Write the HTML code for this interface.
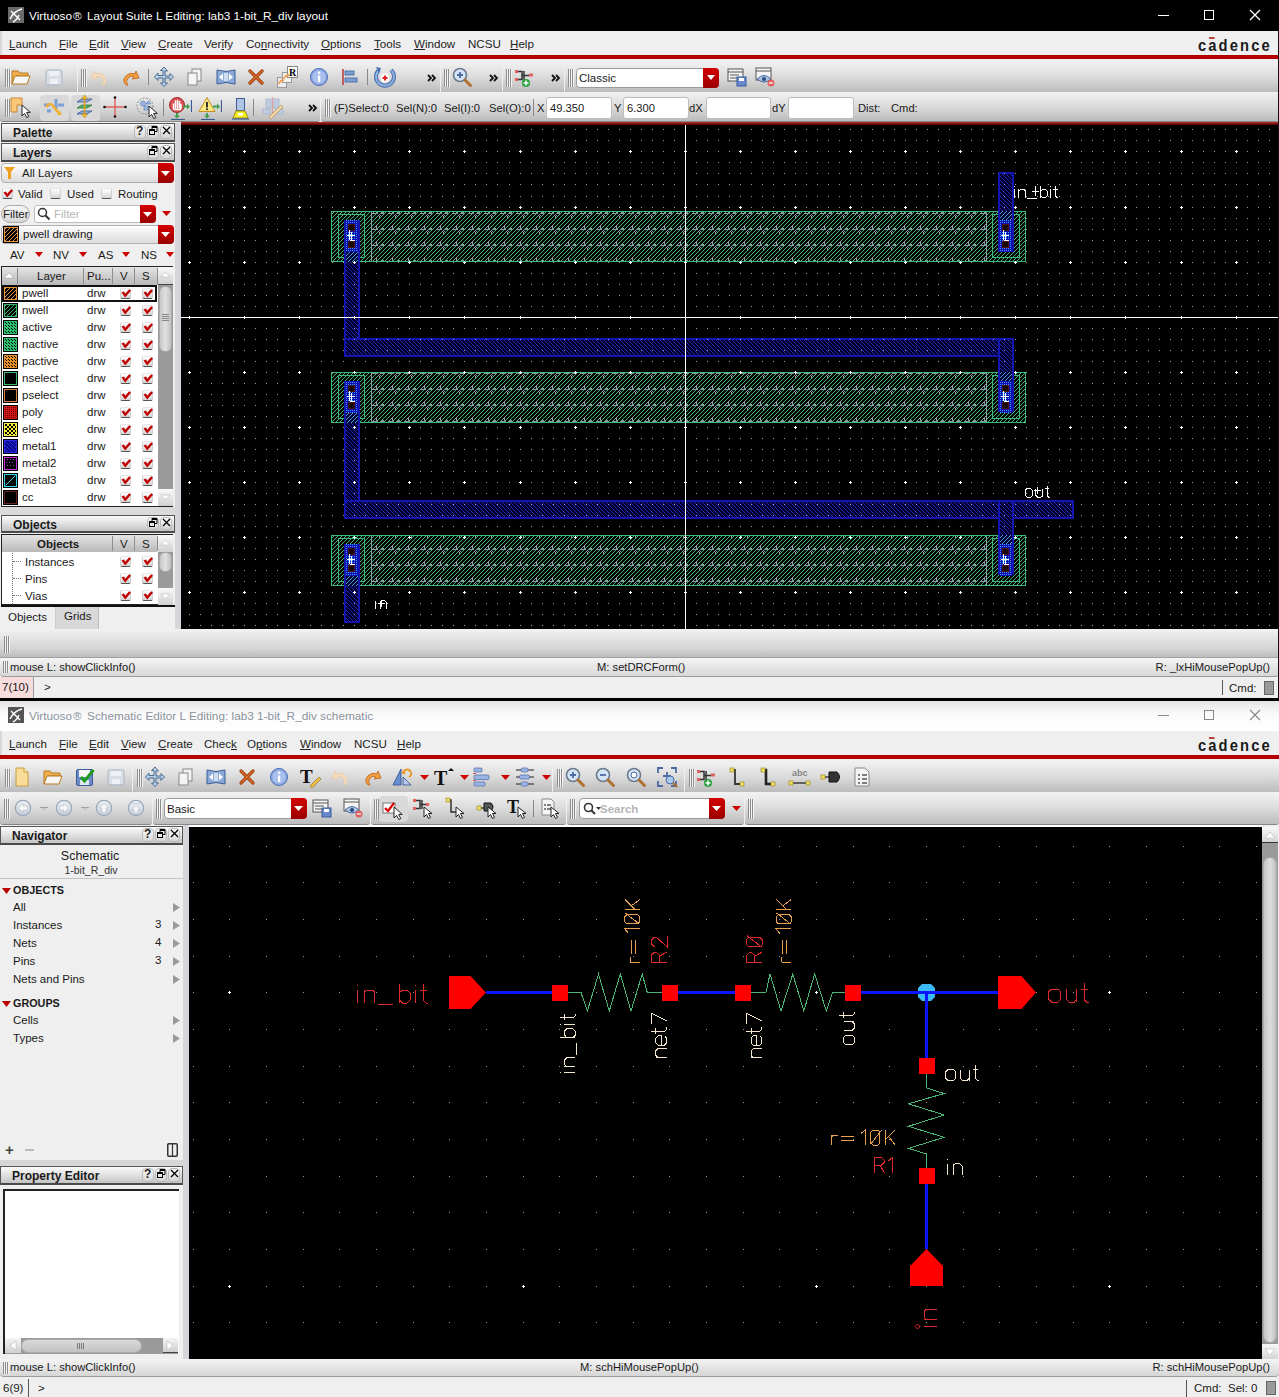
<!DOCTYPE html><html><head><meta charset="utf-8"><style>
*{margin:0;padding:0;box-sizing:border-box}
html,body{width:1279px;height:1397px;overflow:hidden;background:#f0f0f0}
body{position:relative;font-family:"Liberation Sans",sans-serif;font-size:12px;color:#1a1a1a}
.a{position:absolute}
.t{white-space:nowrap;line-height:14px}
.tb{background:linear-gradient(#f0f0f0,#dadada 50%,#bcbcbc);border-radius:4px 4px 3px 3px;border-bottom:1px solid #858585}
.grip{background:linear-gradient(90deg,#8c8c8c 0,#8c8c8c 1px,#f4f4f4 1px,#f4f4f4 2px,#8c8c8c 2px,#8c8c8c 3px,#f4f4f4 3px,#f4f4f4 4px,#8c8c8c 4px,#8c8c8c 5px,#f4f4f4 5px,#f4f4f4 6px)}
.hdr{background:linear-gradient(#fbfbfb,#dedede 55%,#c4c4c4);border:1px solid #555;border-bottom:2px solid #4a4a4a;font-weight:bold;font-size:12px}
.hb{background:linear-gradient(#fafafa,#d6d6d6);border:1px solid #b9b9b9;border-radius:4px}
.red{background:linear-gradient(#d40000,#9a0000);border-radius:0 4px 4px 0}
.u{text-decoration:underline;text-underline-offset:1px}
.fld{background:#fff;border:1px solid #bdbdbd;border-radius:3px}
.cb{background:linear-gradient(#fefefe,#e6e6e6 60%,#d4d4d4);border:1px solid #d0d0d0;border-top-color:#e8e8e8;border-bottom:1px solid #555;border-radius:2px}
</style></head><body><div class="a " style="left:0px;top:0px;width:1279px;height:31px;background:#000"></div>
<svg class="a" style="left:8px;top:7px;" width="16" height="16" viewBox="0 0 16 16"><rect width="16" height="16" fill="#6b6b6b"/><path d="M2 12q4-8 12-10M3 4l9 9M5 15q4-2 6-7" stroke="#fff" stroke-width="1.4" fill="none"/></svg>
<div class="a t " style="left:29px;top:9px;color:#fff;font-size:11.8px;line-height:15px">Virtuoso<span style="margin:0 2px 0 1px">®</span> Layout Suite L Editing: lab3 1-bit_R_div layout</div>
<div class="a " style="left:1158px;top:15px;width:11px;height:1px;background:#fff"></div>
<div class="a " style="left:1204px;top:10px;width:10px;height:10px;border:1px solid #fff"></div>
<svg class="a" style="left:1249px;top:9px;" width="12" height="12" viewBox="0 0 12 12"><path d="M1 1l10 10M11 1L1 11" stroke="#fff" stroke-width="1.3"/></svg>
<div class="a " style="left:0px;top:31px;width:1279px;height:24px;background:#efefef"></div>
<div class="a " style="left:0px;top:31px;width:2px;height:24px;background:#d8d8d8"></div>
<div class="a t " style="left:9px;top:37px;font-size:11.6px;color:#222"><span class="u">L</span>aunch</div>
<div class="a t " style="left:59px;top:37px;font-size:11.6px;color:#222"><span class="u">F</span>ile</div>
<div class="a t " style="left:89px;top:37px;font-size:11.6px;color:#222"><span class="u">E</span>dit</div>
<div class="a t " style="left:121px;top:37px;font-size:11.6px;color:#222"><span class="u">V</span>iew</div>
<div class="a t " style="left:158px;top:37px;font-size:11.6px;color:#222"><span class="u">C</span>reate</div>
<div class="a t " style="left:204px;top:37px;font-size:11.6px;color:#222">Ver<span class="u">i</span>fy</div>
<div class="a t " style="left:246px;top:37px;font-size:11.6px;color:#222">Co<span class="u">n</span>nectivity</div>
<div class="a t " style="left:321px;top:37px;font-size:11.6px;color:#222"><span class="u">O</span>ptions</div>
<div class="a t " style="left:374px;top:37px;font-size:11.6px;color:#222"><span class="u">T</span>ools</div>
<div class="a t " style="left:414px;top:37px;font-size:11.6px;color:#222"><span class="u">W</span>indow</div>
<div class="a t " style="left:468px;top:37px;font-size:11.6px;color:#222">NCSU</div>
<div class="a t " style="left:510px;top:37px;font-size:11.6px;color:#222"><span class="u">H</span>elp</div>
<div class="a t " style="left:1198px;top:37px;font-size:16px;letter-spacing:2.3px;color:#1a1a1a;line-height:17px;font-weight:bold;transform:scaleX(0.92);transform-origin:0 0">c<span style="position:relative">a<span style="position:absolute;left:1px;top:0px;width:6px;height:2px;background:#b44"></span></span>dence</div>
<div class="a " style="left:0px;top:55px;width:1279px;height:4px;background:linear-gradient(#9a0000,#bb0000 25%,#bb0000 75%,#9a0000)"></div>
<div class="a " style="left:0px;top:59px;width:1279px;height:3px;background:#f0f0f0"></div>
<div class="a " style="left:0px;top:62px;width:1279px;height:31px;background:#f0f0f0"></div>
<div class="a tb" style="left:0px;top:63px;width:77px;height:30px;"></div>
<div class="a grip" style="left:5px;top:69px;width:6px;height:18px;"></div>
<svg class="a" style="left:9px;top:65px;" width="24" height="24" viewBox="0 0 24 24"><path d="M3 6h6l2 2h8v3H7l-4 8z" fill="#f0b050" stroke="#b87a20" stroke-width="1"/><path d="M6 11h15l-3 8H3z" fill="#f6f6f6" stroke="#b87a20" stroke-width="1"/></svg>
<svg class="a" style="left:42px;top:65px;" width="24" height="24" viewBox="0 0 24 24"><rect x="4" y="5" width="16" height="15" rx="1.5" fill="#d8dde6" stroke="#a9b3c4"/><rect x="7" y="6" width="10" height="5" fill="#eef1f5"/><rect x="8" y="14" width="8" height="5" fill="#eef1f5"/></svg>
<div class="a tb" style="left:78px;top:63px;width:362px;height:30px;"></div>
<div class="a grip" style="left:81px;top:69px;width:6px;height:18px;"></div>
<svg class="a" style="left:88px;top:65px;" width="24" height="24" viewBox="0 0 24 24"><path d="M16 20q5-5-1-10q-4-3-8-1l-1-3-3 7 7 1-2-2q3-2 6 1q3 4 0 7z" fill="#f4dcc0" stroke="#e8c8a0" stroke-width=".8"/></svg>
<svg class="a" style="left:118px;top:65px;" width="24" height="24" viewBox="0 0 24 24"><path d="M8 20q-5-5 1-10q4-3 8-1l1-3 3 7-7 1 2-2q-3-2-6 1q-3 4 0 7z" fill="#f0a040" stroke="#c06010" stroke-width=".8"/></svg>
<div class="a " style="left:148px;top:69px;width:1px;height:16px;background:#888"></div>
<svg class="a" style="left:152px;top:65px;" width="24" height="24" viewBox="0 0 24 24"><path d="M12 2l-3.5 3.5h2.5v5h-5v-2.5L2.5 12 6 15.5V13h5v5H8.5L12 21.5l3.5-3.5H13v-5h5v2.5l3.5-3.5L18 8.5V11h-5V6h2.5z" fill="#b8d0e8" stroke="#4a6a90" stroke-width="1"/></svg>
<svg class="a" style="left:183px;top:65px;" width="24" height="24" viewBox="0 0 24 24"><rect x="9" y="4" width="9" height="12" fill="#f4f4f4" stroke="#888"/><rect x="5" y="8" width="9" height="12" fill="#f4f4f4" stroke="#888"/></svg>
<svg class="a" style="left:214px;top:65px;" width="24" height="24" viewBox="0 0 24 24"><path d="M3 5q9 3 18 0v14q-9-3-18 0z" fill="#8aaad8" stroke="#3a5a98"/><path d="M5 12l4-3.5v7zM19 12l-4-3.5v7z" fill="#fff"/><path d="M11 8v8M13 8v8" stroke="#fff" stroke-width="1.2"/></svg>
<svg class="a" style="left:244px;top:65px;" width="24" height="24" viewBox="0 0 24 24"><path d="M6 6l12 12M18 6L6 18" stroke="#a0400a" stroke-width="3.2" stroke-linecap="round"/><path d="M6 6l12 12M18 6L6 18" stroke="#e07030" stroke-width="1.2" stroke-linecap="round"/></svg>
<svg class="a" style="left:276px;top:65px;" width="24" height="24" viewBox="0 0 24 24"><rect x="1.5" y="12.5" width="9" height="10" fill="#ececec" stroke="#999"/><rect x="6.5" y="7.5" width="9" height="10" fill="#f2f2f2" stroke="#999"/><rect x="11.5" y="1.5" width="10" height="11" fill="#fafafa" stroke="#888"/><text x="13" y="11" font-family="Liberation Serif" font-weight="bold" font-size="10" fill="#000">R</text><path d="M3 19q1-4 5-4M8 14q1-4 5-4" fill="none" stroke="#f0a050" stroke-width="1.8"/></svg>
<svg class="a" style="left:307px;top:65px;" width="24" height="24" viewBox="0 0 24 24"><circle cx="12" cy="12" r="8.5" fill="#8fa9e0" stroke="#4b6fb8"/><circle cx="12" cy="12" r="6.5" fill="#a9c0ee"/><rect x="11" y="10.5" width="2.2" height="6.5" fill="#fff"/><circle cx="12.1" cy="7.8" r="1.3" fill="#fff"/></svg>
<svg class="a" style="left:338px;top:65px;" width="24" height="24" viewBox="0 0 24 24"><path d="M5 4v16" stroke="#c04040" stroke-width="1.6"/><rect x="7" y="6" width="9" height="4" fill="#7d9fd0" stroke="#3b63a0" stroke-width=".8"/><rect x="7" y="13" width="12" height="4" fill="#7d9fd0" stroke="#3b63a0" stroke-width=".8"/></svg>
<div class="a " style="left:367px;top:69px;width:1px;height:16px;background:#888"></div>
<svg class="a" style="left:373px;top:65px;" width="24" height="24" viewBox="0 0 24 24"><path d="M6 5a9 9 0 1 0 12 0" fill="none" stroke="#4a70b0" stroke-width="4"/><path d="M6 5a9 9 0 1 0 12 0" fill="none" stroke="#90b0e0" stroke-width="2"/><path d="M3 2l5 1-2 5z" fill="#4a70b0"/><circle cx="12" cy="13" r="4.5" fill="#fff"/><path d="M12 10.5v5M9.5 13h5" stroke="#e02020" stroke-width="2"/></svg>
<svg class="a" style="left:421px;top:66px;" width="24" height="24" viewBox="0 0 24 24"><path d="M7 9l3 3-3 3M11 9l3 3-3 3" fill="none" stroke="#111" stroke-width="1.8"/></svg>
<div class="a tb" style="left:441px;top:63px;width:61px;height:30px;"></div>
<div class="a grip" style="left:444px;top:69px;width:6px;height:18px;"></div>
<svg class="a" style="left:450px;top:65px;" width="24" height="24" viewBox="0 0 24 24"><circle cx="10" cy="10" r="6.5" fill="#d4e4f6" stroke="#6a7a8a" stroke-width="1.6"/><path d="M10 7v6M7 10h6" stroke="#4c6aa0" stroke-width="1.8"/><path d="M15 15l5.5 5.5" stroke="#b07030" stroke-width="3" stroke-linecap="round"/></svg>
<svg class="a" style="left:483px;top:66px;" width="24" height="24" viewBox="0 0 24 24"><path d="M7 9l3 3-3 3M11 9l3 3-3 3" fill="none" stroke="#111" stroke-width="1.8"/></svg>
<div class="a tb" style="left:503px;top:63px;width:61px;height:30px;"></div>
<div class="a grip" style="left:506px;top:69px;width:6px;height:18px;"></div>
<svg class="a" style="left:512px;top:65px;" width="24" height="24" viewBox="0 0 24 24"><rect x="3" y="5" width="3" height="3" fill="#e06060"/><rect x="3" y="13" width="3" height="3" fill="#e06060"/><rect x="17" y="8.5" width="4" height="3" fill="#e06060"/><path d="M6 6.5h4v8H6M10 10.5h7M12 6v9" fill="none" stroke="#333" stroke-width="1.5"/><circle cx="14" cy="18" r="4" fill="#2aa040"/><path d="M14 15.5v5M11.5 18h5" stroke="#fff" stroke-width="1.6"/></svg>
<svg class="a" style="left:545px;top:66px;" width="24" height="24" viewBox="0 0 24 24"><path d="M7 9l3 3-3 3M11 9l3 3-3 3" fill="none" stroke="#111" stroke-width="1.8"/></svg>
<div class="a tb" style="left:565px;top:63px;width:714px;height:30px;"></div>
<div class="a grip" style="left:568px;top:69px;width:6px;height:18px;"></div>
<div class="a " style="left:576px;top:68px;width:143px;height:20px;background:#fff;border:1px solid #9a9a9a;border-radius:4px"></div>
<div class="a t " style="left:579px;top:71px;font-size:11.5px">Classic</div>
<div class="a red" style="left:703px;top:68px;width:16px;height:20px;"></div>
<svg class="a" style="left:706px;top:75px;" width="10" height="6" viewBox="0 0 10 6"><path d="M1 0h8L5 5z" fill="#fff"/></svg>
<svg class="a" style="left:725px;top:65px;" width="24" height="24" viewBox="0 0 24 24"><rect x="3" y="4" width="15" height="12" fill="#f4f4f4" stroke="#555"/><path d="M3 7h15M5 10h9M5 13h7" stroke="#555"/><rect x="12" y="12" width="9" height="9" fill="#6a8ad0" stroke="#3a5aa0"/><rect x="14" y="13" width="5" height="3" fill="#fff"/></svg>
<svg class="a" style="left:753px;top:65px;" width="24" height="24" viewBox="0 0 24 24"><rect x="3" y="3" width="15" height="12" fill="#f4f4f4" stroke="#555"/><path d="M3 6h15" stroke="#555"/><path d="M4 14q7-7 14 0q-7 6-14 0z" fill="#aac0e0" stroke="#4a6aa0"/><circle cx="11" cy="14" r="2" fill="#2a4a80"/><circle cx="18" cy="18" r="3.5" fill="#e06060"/><path d="M16 18h4" stroke="#fff" stroke-width="1.2"/></svg>
<div class="a " style="left:0px;top:92px;width:1279px;height:31px;background:#f0f0f0"></div>
<div class="a tb" style="left:0px;top:93px;width:320px;height:29px;"></div>
<div class="a grip" style="left:5px;top:99px;width:6px;height:18px;"></div>
<svg class="a" style="left:9px;top:95px;" width="24" height="24" viewBox="0 0 24 24"><path d="M2 3h11v7H8v7H2z" fill="#f8c878" stroke="#c88830"/><path d="M13 10l0 11 2.6-2.6 2.2 4.2 2-1-2.2-4.2h3.7z" fill="#fff" stroke="#222" stroke-width="1"/></svg>
<div class="a " style="left:40px;top:95px;width:29px;height:26px;background:#d9d9d9;border-radius:4px"></div>
<div class="a " style="left:71px;top:95px;width:29px;height:26px;background:#d9d9d9;border-radius:4px"></div>
<svg class="a" style="left:42px;top:95px;" width="24" height="24" viewBox="0 0 24 24"><path d="M2 10h6M16 10h6M5 16h4M14 4v10" stroke="#7aa0d8" stroke-width="3"/><path d="M4 12q4-6 8 0t6 6" fill="none" stroke="#f0b030" stroke-width="2.6"/><path d="M15 20l3-4 2 4z" fill="#f0b030"/></svg>
<svg class="a" style="left:73px;top:95px;" width="24" height="24" viewBox="0 0 24 24"><path d="M4 7l5-3h10l-5 3z" fill="#8aaad8" stroke="#3a5a98" stroke-width=".8"/><path d="M4 13l5-3h10l-5 3z" fill="#50b060" stroke="#2a7a3a" stroke-width=".8"/><path d="M4 19l5-3h10l-5 3z" fill="#8aaad8" stroke="#3a5a98" stroke-width=".8"/><path d="M11.5 3v18" stroke="#e0a020" stroke-width="1.6"/><path d="M11.5 0l-3 4h6zM11.5 23l-3-4h6z" fill="#f8c030" stroke="#a07010" stroke-width=".5"/></svg>
<svg class="a" style="left:103px;top:95px;" width="24" height="24" viewBox="0 0 24 24"><path d="M12 2v20M1 12h22" stroke="#e06060" stroke-width="1.4"/><circle cx="12" cy="2.5" r="1.3" fill="#111"/><circle cx="12" cy="21.5" r="1.3" fill="#111"/><circle cx="1.5" cy="12" r="1.3" fill="#111"/><circle cx="22.5" cy="12" r="1.3" fill="#111"/></svg>
<svg class="a" style="left:135px;top:95px;" width="24" height="24" viewBox="0 0 24 24"><circle cx="10" cy="11" r="8" fill="none" stroke="#888" stroke-dasharray="2 1.5"/><circle cx="8" cy="8.5" r="2.5" fill="#9ab6e0" stroke="#5a7ab0" stroke-width=".6"/><path d="M11 9l2.5-3.5 2.5 3.5z" fill="#9ab6e0" stroke="#5a7ab0" stroke-width=".6"/><rect x="9" y="11" width="4" height="4" fill="#9ab6e0" stroke="#5a7ab0" stroke-width=".6"/><path d="M14 11l0 11 2.6-2.6 2.2 4.2 2-1-2.2-4.2h3.7z" fill="#fff" stroke="#222" stroke-width="1"/></svg>
<div class="a " style="left:163px;top:99px;width:1px;height:17px;background:#888"></div>
<svg class="a" style="left:168px;top:96px;" width="24" height="24" viewBox="0 0 24 24"><circle cx="9" cy="9" r="7.5" fill="#d85050" stroke="#a02828" stroke-width="1"/><path d="M5.5 13V8M7.5 12V5M9.5 12V4.5M11.5 12V5.5M13 12.5V8.5" stroke="#fff" stroke-width="1.5" stroke-linecap="round"/><path d="M6 13.5h7" stroke="#fff" stroke-width="1.6"/><path d="M15 9.5h4v-2l3 3-3 3v-2h-4z" fill="#40a050"/><path d="M23.5 4v12" stroke="#3a5a90" stroke-width="1.2"/><path d="M8 17v2.5h-2l3 3 3-3h-2V17z" fill="#40a050"/><path d="M3 23.5h14" stroke="#3a5a90" stroke-width="1.2"/></svg>
<svg class="a" style="left:198px;top:96px;" width="24" height="24" viewBox="0 0 24 24"><path d="M9 1.5l8 14H1z" fill="#f8e880" stroke="#c89020" stroke-width="1"/><path d="M9 6v5.5" stroke="#222" stroke-width="1.8"/><circle cx="9" cy="13.3" r="1" fill="#222"/><path d="M15 9.5h4v-2l3 3-3 3v-2h-4z" fill="#40a050"/><path d="M23.5 4v12" stroke="#3a5a90" stroke-width="1.2"/><path d="M8 17v2.5h-2l3 3 3-3h-2V17z" fill="#40a050"/><path d="M3 23.5h14" stroke="#3a5a90" stroke-width="1.2"/></svg>
<svg class="a" style="left:229px;top:96px;" width="24" height="24" viewBox="0 0 24 24"><rect x="7.5" y="2.5" width="8" height="12" fill="#b0c4e4" stroke="#3a5a90"/><path d="M4 22l3-7h9l3 7z" fill="#f4f020" stroke="#a09010"/><rect x="9" y="17" width="5" height="2.5" fill="#fff"/><path d="M3 23h17" stroke="#3a5a90" stroke-width="1.2"/></svg>
<div class="a " style="left:253px;top:99px;width:1px;height:17px;background:#888"></div>
<svg class="a" style="left:261px;top:95px;" width="24" height="24" viewBox="0 0 24 24"><rect x="5" y="4" width="5" height="9" fill="#c0cce0" stroke="#a0aec8" stroke-width=".7"/><rect x="13" y="4" width="5" height="9" fill="#c0cce0" stroke="#a0aec8" stroke-width=".7"/><rect x="2" y="14" width="7" height="5" fill="#c0cce0" stroke="#a0aec8" stroke-width=".7"/><rect x="15" y="14" width="7" height="5" fill="#c0cce0" stroke="#a0aec8" stroke-width=".7"/><path d="M11.5 2v18" stroke="#d8a0a0" stroke-width="1.2"/><path d="M8 22l12-12 2 2-12 12z" fill="#f0d8a0" stroke="#b09060" stroke-width=".7"/></svg>
<svg class="a" style="left:302px;top:96px;" width="24" height="24" viewBox="0 0 24 24"><path d="M7 9l3 3-3 3M11 9l3 3-3 3" fill="none" stroke="#111" stroke-width="1.8"/></svg>
<div class="a tb" style="left:321px;top:93px;width:958px;height:29px;"></div>
<div class="a grip" style="left:325px;top:99px;width:6px;height:18px;"></div>
<div class="a t " style="left:334px;top:101px;font-size:11.2px">(F)Select:0</div>
<div class="a t " style="left:396px;top:101px;font-size:11.2px">Sel(N):0</div>
<div class="a t " style="left:444px;top:101px;font-size:11.2px">Sel(I):0</div>
<div class="a t " style="left:489px;top:101px;font-size:11.2px">Sel(O):0</div>
<div class="a " style="left:533px;top:99px;width:1px;height:17px;background:#888"></div>
<div class="a t " style="left:537px;top:101px;font-size:11.2px">X</div>
<div class="a fld" style="left:546px;top:97px;width:66px;height:22px;"></div>
<div class="a t " style="left:550px;top:101px;font-size:11.2px">49.350</div>
<div class="a t " style="left:614px;top:101px;font-size:11.2px">Y</div>
<div class="a fld" style="left:623px;top:97px;width:66px;height:22px;"></div>
<div class="a t " style="left:627px;top:101px;font-size:11.2px">6.300</div>
<div class="a t " style="left:689px;top:101px;font-size:11.2px">dX</div>
<div class="a fld" style="left:706px;top:97px;width:65px;height:22px;"></div>
<div class="a t " style="left:772px;top:101px;font-size:11.2px">dY</div>
<div class="a fld" style="left:788px;top:97px;width:66px;height:22px;"></div>
<div class="a t " style="left:858px;top:101px;font-size:11.2px">Dist:</div>
<div class="a t " style="left:891px;top:101px;font-size:11.2px">Cmd:</div>
<div class="a " style="left:0px;top:122px;width:1279px;height:4px;background:#efefef"></div>
<div class="a " style="left:181px;top:122px;width:1098px;height:3px;background:linear-gradient(#c04040,#8a1414 40%,#5a0a0a)"></div>
<div class="a " style="left:0px;top:123px;width:175px;height:506px;background:#efefef"></div>
<div class="a " style="left:175px;top:123px;width:6px;height:506px;background:#d6d6da"></div>
<div class="a hdr" style="left:1px;top:123px;width:174px;height:19px;"></div>
<div class="a t " style="left:13px;top:126px;font-weight:bold;font-size:12px;line-height:14px">Palette</div>
<div class="a hb" style="left:160px;top:125px;width:12px;height:14px;"></div>
<svg class="a" style="left:162px;top:126px;" width="9" height="9" viewBox="0 0 9 9"><path d="M1 1l7 7M8 1L1 8" stroke="#000" stroke-width="1.3"/></svg>
<div class="a hb" style="left:147px;top:125px;width:12px;height:14px;"></div>
<svg class="a" style="left:149px;top:126px;" width="9" height="9" viewBox="0 0 9 9"><rect x="0.5" y="3.5" width="5" height="5" fill="none" stroke="#000"/><path d="M3 3.5V0.5h5v5H5.5" fill="none" stroke="#000"/><path d="M0.5 4.5h5M3 1.5h5" stroke="#000"/></svg>
<div class="a hb" style="left:134px;top:125px;width:12px;height:14px;"></div>
<div class="a t " style="left:136px;top:124px;font-weight:bold;font-size:12px;line-height:14px">?</div>
<div class="a hdr" style="left:1px;top:143px;width:174px;height:19px;"></div>
<div class="a t " style="left:13px;top:146px;font-weight:bold;font-size:12px;line-height:14px">Layers</div>
<div class="a hb" style="left:160px;top:145px;width:12px;height:14px;"></div>
<svg class="a" style="left:162px;top:146px;" width="9" height="9" viewBox="0 0 9 9"><path d="M1 1l7 7M8 1L1 8" stroke="#000" stroke-width="1.3"/></svg>
<div class="a hb" style="left:147px;top:145px;width:12px;height:14px;"></div>
<svg class="a" style="left:149px;top:146px;" width="9" height="9" viewBox="0 0 9 9"><rect x="0.5" y="3.5" width="5" height="5" fill="none" stroke="#000"/><path d="M3 3.5V0.5h5v5H5.5" fill="none" stroke="#000"/><path d="M0.5 4.5h5M3 1.5h5" stroke="#000"/></svg>
<div class="a " style="left:1px;top:163px;width:173px;height:20px;background:linear-gradient(#fdfdfd,#dcdcdc);border:1px solid #b0b0b0;border-radius:4px"></div>
<svg class="a" style="left:4px;top:166px;" width="12" height="14" viewBox="0 0 12 14"><path d="M0 1h11L7 6v7H4V6z" fill="#f0a020"/></svg>
<div class="a t " style="left:22px;top:166px;font-size:11.5px">All Layers</div>
<div class="a red" style="left:158px;top:163px;width:16px;height:20px;"></div>
<svg class="a" style="left:161px;top:171px;" width="9" height="5" viewBox="0 0 9 5"><path d="M0 0h9L4.5 5z" fill="#fff"/></svg>
<div class="a cb" style="left:2px;top:188px;width:11px;height:11px;"></div>
<svg class="a" style="left:2px;top:188px;" width="11" height="11" viewBox="0 0 11 11"><path d="M1.5 4.5L4 3.5L5.2 5.8L9.2 1.2L11 2.8L5.2 9.5Z" fill="#c00000"/></svg>
<div class="a t " style="left:18px;top:187px;font-size:11.5px">Valid</div>
<div class="a cb" style="left:50px;top:188px;width:11px;height:11px;"></div>
<div class="a t " style="left:67px;top:187px;font-size:11.5px">Used</div>
<div class="a cb" style="left:101px;top:188px;width:11px;height:11px;"></div>
<div class="a t " style="left:118px;top:187px;font-size:11.5px">Routing</div>
<div class="a " style="left:1px;top:205px;width:29px;height:18px;background:linear-gradient(#f8f8f8,#d6d6d6);border:1px solid #aaa;border-radius:9px"></div>
<div class="a t " style="left:3px;top:207px;font-size:11.5px">Filter</div>
<div class="a fld" style="left:34px;top:205px;width:122px;height:18px;"></div>
<svg class="a" style="left:37px;top:207px;" width="14" height="14" viewBox="0 0 14 14"><circle cx="5.5" cy="5.5" r="4" fill="none" stroke="#333" stroke-width="1.5"/><path d="M8.5 8.5l4 4" stroke="#333" stroke-width="2"/></svg>
<div class="a t " style="left:54px;top:207px;font-size:11.5px;color:#b5b5b5">Filter</div>
<div class="a red" style="left:140px;top:205px;width:16px;height:18px;"></div>
<svg class="a" style="left:143px;top:212px;" width="9" height="5" viewBox="0 0 9 5"><path d="M0 0h9L4.5 5z" fill="#fff"/></svg>
<svg class="a" style="left:162px;top:211px;" width="9" height="5" viewBox="0 0 9 5"><path d="M0 0h9L4.5 5z" fill="#c00"/></svg>
<div class="a " style="left:1px;top:225px;width:173px;height:19px;background:linear-gradient(#fdfdfd,#dcdcdc);border:1px solid #b0b0b0;border-radius:4px"></div>
<svg class="a" style="left:3px;top:226px" width="16" height="17"><rect width="16" height="17" fill="#000"/><path d="M2 2h1v1h-1zM6 2h1v1h-1zM10 2h1v1h-1zM5 3h1v1h-1zM9 3h1v1h-1zM13 3h1v1h-1zM4 4h1v1h-1zM8 4h1v1h-1zM12 4h1v1h-1zM3 5h1v1h-1zM7 5h1v1h-1zM11 5h1v1h-1zM2 6h1v1h-1zM6 6h1v1h-1zM10 6h1v1h-1zM5 7h1v1h-1zM9 7h1v1h-1zM13 7h1v1h-1zM4 8h1v1h-1zM8 8h1v1h-1zM12 8h1v1h-1zM3 9h1v1h-1zM7 9h1v1h-1zM11 9h1v1h-1zM2 10h1v1h-1zM6 10h1v1h-1zM10 10h1v1h-1zM5 11h1v1h-1zM9 11h1v1h-1zM13 11h1v1h-1zM4 12h1v1h-1zM8 12h1v1h-1zM12 12h1v1h-1zM3 13h1v1h-1zM7 13h1v1h-1zM11 13h1v1h-1zM2 14h1v1h-1zM6 14h1v1h-1zM10 14h1v1h-1z" fill="#e8943a"/><rect x="0.5" y="0.5" width="15" height="16" fill="none" stroke="#000"/><rect x="1.5" y="1.5" width="13" height="14" fill="none" stroke="#e8943a"/></svg>
<div class="a t " style="left:23px;top:227px;font-size:11.5px">pwell drawing</div>
<div class="a red" style="left:158px;top:225px;width:16px;height:19px;"></div>
<svg class="a" style="left:161px;top:232px;" width="9" height="5" viewBox="0 0 9 5"><path d="M0 0h9L4.5 5z" fill="#fff"/></svg>
<div class="a t " style="left:10px;top:248px;font-size:11.5px">AV</div>
<svg class="a" style="left:35px;top:252px;" width="8" height="5" viewBox="0 0 8 5"><path d="M0 0h8L4 5z" fill="#c00"/></svg>
<div class="a t " style="left:53px;top:248px;font-size:11.5px">NV</div>
<svg class="a" style="left:79px;top:252px;" width="8" height="5" viewBox="0 0 8 5"><path d="M0 0h8L4 5z" fill="#c00"/></svg>
<div class="a t " style="left:98px;top:248px;font-size:11.5px">AS</div>
<svg class="a" style="left:122px;top:252px;" width="8" height="5" viewBox="0 0 8 5"><path d="M0 0h8L4 5z" fill="#c00"/></svg>
<div class="a t " style="left:141px;top:248px;font-size:11.5px">NS</div>
<svg class="a" style="left:166px;top:252px;" width="8" height="5" viewBox="0 0 8 5"><path d="M0 0h8L4 5z" fill="#c00"/></svg>
<div class="a " style="left:1px;top:266px;width:172px;height:241px;background:#fff;border:1px solid #222;border-right:none"></div>
<div class="a " style="left:2px;top:267px;width:156px;height:18px;background:linear-gradient(#e4e4e4,#b8b8b8)"></div>
<div class="a " style="left:17px;top:268px;width:1px;height:16px;background:#8e8e8e"></div>
<div class="a " style="left:83px;top:268px;width:1px;height:16px;background:#8e8e8e"></div>
<div class="a " style="left:112px;top:268px;width:1px;height:16px;background:#8e8e8e"></div>
<div class="a " style="left:134px;top:268px;width:1px;height:16px;background:#8e8e8e"></div>
<div class="a " style="left:157px;top:268px;width:1px;height:16px;background:#8e8e8e"></div>
<svg class="a" style="left:4px;top:272px;" width="10" height="7" viewBox="0 0 10 7"><path d="M0 6L5 1l5 5z" fill="#fff" stroke="#999" stroke-width=".5"/></svg>
<div class="a t " style="left:37px;top:269px;font-size:11.5px">Layer</div>
<div class="a t " style="left:87px;top:269px;font-size:11.5px">Pu...</div>
<div class="a t " style="left:120px;top:269px;font-size:11.5px">V</div>
<div class="a t " style="left:142px;top:269px;font-size:11.5px">S</div>
<div class="a " style="left:2px;top:285px;width:155px;height:17px;border:2px solid #111;background:#fff"></div>
<svg class="a" style="left:3px;top:286px" width="15" height="15"><rect width="15" height="15" fill="#000"/><path d="M2 2h1v1h-1zM6 2h1v1h-1zM10 2h1v1h-1zM5 3h1v1h-1zM9 3h1v1h-1zM4 4h1v1h-1zM8 4h1v1h-1zM12 4h1v1h-1zM3 5h1v1h-1zM7 5h1v1h-1zM11 5h1v1h-1zM2 6h1v1h-1zM6 6h1v1h-1zM10 6h1v1h-1zM5 7h1v1h-1zM9 7h1v1h-1zM4 8h1v1h-1zM8 8h1v1h-1zM12 8h1v1h-1zM3 9h1v1h-1zM7 9h1v1h-1zM11 9h1v1h-1zM2 10h1v1h-1zM6 10h1v1h-1zM10 10h1v1h-1zM5 11h1v1h-1zM9 11h1v1h-1zM4 12h1v1h-1zM8 12h1v1h-1zM12 12h1v1h-1z" fill="#e8943a"/><rect x="0.5" y="0.5" width="14" height="14" fill="none" stroke="#000"/><rect x="1.5" y="1.5" width="12" height="12" fill="none" stroke="#e8943a"/></svg>
<div class="a t " style="left:22px;top:286px;font-size:11.5px">pwell</div>
<div class="a t " style="left:87px;top:286px;font-size:11.5px">drw</div>
<div class="a cb" style="left:120px;top:288px;width:11px;height:11px;"></div>
<svg class="a" style="left:120px;top:288px;" width="11" height="11" viewBox="0 0 11 11"><path d="M1.5 4.5L4 3.5L5.2 5.8L9.2 1.2L11 2.8L5.2 9.5Z" fill="#c00000"/></svg>
<div class="a cb" style="left:142px;top:288px;width:11px;height:11px;"></div>
<svg class="a" style="left:142px;top:288px;" width="11" height="11" viewBox="0 0 11 11"><path d="M1.5 4.5L4 3.5L5.2 5.8L9.2 1.2L11 2.8L5.2 9.5Z" fill="#c00000"/></svg>
<svg class="a" style="left:3px;top:303px" width="15" height="15"><rect width="15" height="15" fill="#000"/><path d="M2 2h1v1h-1zM6 2h1v1h-1zM10 2h1v1h-1zM5 3h1v1h-1zM9 3h1v1h-1zM4 4h1v1h-1zM8 4h1v1h-1zM12 4h1v1h-1zM3 5h1v1h-1zM7 5h1v1h-1zM11 5h1v1h-1zM2 6h1v1h-1zM6 6h1v1h-1zM10 6h1v1h-1zM5 7h1v1h-1zM9 7h1v1h-1zM4 8h1v1h-1zM8 8h1v1h-1zM12 8h1v1h-1zM3 9h1v1h-1zM7 9h1v1h-1zM11 9h1v1h-1zM2 10h1v1h-1zM6 10h1v1h-1zM10 10h1v1h-1zM5 11h1v1h-1zM9 11h1v1h-1zM4 12h1v1h-1zM8 12h1v1h-1zM12 12h1v1h-1z" fill="#38b870"/><rect x="0.5" y="0.5" width="14" height="14" fill="none" stroke="#000"/><rect x="1.5" y="1.5" width="12" height="12" fill="none" stroke="#38b870"/></svg>
<div class="a t " style="left:22px;top:303px;font-size:11.5px">nwell</div>
<div class="a t " style="left:87px;top:303px;font-size:11.5px">drw</div>
<div class="a cb" style="left:120px;top:305px;width:11px;height:11px;"></div>
<svg class="a" style="left:120px;top:305px;" width="11" height="11" viewBox="0 0 11 11"><path d="M1.5 4.5L4 3.5L5.2 5.8L9.2 1.2L11 2.8L5.2 9.5Z" fill="#c00000"/></svg>
<div class="a cb" style="left:142px;top:305px;width:11px;height:11px;"></div>
<svg class="a" style="left:142px;top:305px;" width="11" height="11" viewBox="0 0 11 11"><path d="M1.5 4.5L4 3.5L5.2 5.8L9.2 1.2L11 2.8L5.2 9.5Z" fill="#c00000"/></svg>
<svg class="a" style="left:3px;top:320px" width="15" height="15"><rect width="15" height="15" fill="#2cc070"/><path d="M2 2h1v1h-1zM5 2h1v1h-1zM8 2h1v1h-1zM11 2h1v1h-1zM3 3h1v1h-1zM6 3h1v1h-1zM9 3h1v1h-1zM12 3h1v1h-1zM2 5h1v1h-1zM5 5h1v1h-1zM8 5h1v1h-1zM11 5h1v1h-1zM3 6h1v1h-1zM6 6h1v1h-1zM9 6h1v1h-1zM12 6h1v1h-1zM2 8h1v1h-1zM5 8h1v1h-1zM8 8h1v1h-1zM11 8h1v1h-1zM3 9h1v1h-1zM6 9h1v1h-1zM9 9h1v1h-1zM12 9h1v1h-1zM2 11h1v1h-1zM5 11h1v1h-1zM8 11h1v1h-1zM11 11h1v1h-1zM3 12h1v1h-1zM6 12h1v1h-1zM9 12h1v1h-1zM12 12h1v1h-1z" fill="#000"/><rect x="0.5" y="0.5" width="14" height="14" fill="none" stroke="#000"/><rect x="1.5" y="1.5" width="12" height="12" fill="none" stroke="#2cc070"/></svg>
<div class="a t " style="left:22px;top:320px;font-size:11.5px">active</div>
<div class="a t " style="left:87px;top:320px;font-size:11.5px">drw</div>
<div class="a cb" style="left:120px;top:322px;width:11px;height:11px;"></div>
<svg class="a" style="left:120px;top:322px;" width="11" height="11" viewBox="0 0 11 11"><path d="M1.5 4.5L4 3.5L5.2 5.8L9.2 1.2L11 2.8L5.2 9.5Z" fill="#c00000"/></svg>
<div class="a cb" style="left:142px;top:322px;width:11px;height:11px;"></div>
<svg class="a" style="left:142px;top:322px;" width="11" height="11" viewBox="0 0 11 11"><path d="M1.5 4.5L4 3.5L5.2 5.8L9.2 1.2L11 2.8L5.2 9.5Z" fill="#c00000"/></svg>
<svg class="a" style="left:3px;top:337px" width="15" height="15"><rect width="15" height="15" fill="#2cc070"/><path d="M2 2h1v1h-1zM5 2h1v1h-1zM8 2h1v1h-1zM11 2h1v1h-1zM3 3h1v1h-1zM6 3h1v1h-1zM9 3h1v1h-1zM12 3h1v1h-1zM2 5h1v1h-1zM5 5h1v1h-1zM8 5h1v1h-1zM11 5h1v1h-1zM3 6h1v1h-1zM6 6h1v1h-1zM9 6h1v1h-1zM12 6h1v1h-1zM2 8h1v1h-1zM5 8h1v1h-1zM8 8h1v1h-1zM11 8h1v1h-1zM3 9h1v1h-1zM6 9h1v1h-1zM9 9h1v1h-1zM12 9h1v1h-1zM2 11h1v1h-1zM5 11h1v1h-1zM8 11h1v1h-1zM11 11h1v1h-1zM3 12h1v1h-1zM6 12h1v1h-1zM9 12h1v1h-1zM12 12h1v1h-1z" fill="#000"/><rect x="0.5" y="0.5" width="14" height="14" fill="none" stroke="#000"/><rect x="1.5" y="1.5" width="12" height="12" fill="none" stroke="#2cc070"/></svg>
<div class="a t " style="left:22px;top:337px;font-size:11.5px">nactive</div>
<div class="a t " style="left:87px;top:337px;font-size:11.5px">drw</div>
<div class="a cb" style="left:120px;top:339px;width:11px;height:11px;"></div>
<svg class="a" style="left:120px;top:339px;" width="11" height="11" viewBox="0 0 11 11"><path d="M1.5 4.5L4 3.5L5.2 5.8L9.2 1.2L11 2.8L5.2 9.5Z" fill="#c00000"/></svg>
<div class="a cb" style="left:142px;top:339px;width:11px;height:11px;"></div>
<svg class="a" style="left:142px;top:339px;" width="11" height="11" viewBox="0 0 11 11"><path d="M1.5 4.5L4 3.5L5.2 5.8L9.2 1.2L11 2.8L5.2 9.5Z" fill="#c00000"/></svg>
<svg class="a" style="left:3px;top:354px" width="15" height="15"><rect width="15" height="15" fill="#e8902a"/><path d="M2 2h1v1h-1zM5 2h1v1h-1zM8 2h1v1h-1zM11 2h1v1h-1zM3 3h1v1h-1zM6 3h1v1h-1zM9 3h1v1h-1zM12 3h1v1h-1zM2 5h1v1h-1zM5 5h1v1h-1zM8 5h1v1h-1zM11 5h1v1h-1zM3 6h1v1h-1zM6 6h1v1h-1zM9 6h1v1h-1zM12 6h1v1h-1zM2 8h1v1h-1zM5 8h1v1h-1zM8 8h1v1h-1zM11 8h1v1h-1zM3 9h1v1h-1zM6 9h1v1h-1zM9 9h1v1h-1zM12 9h1v1h-1zM2 11h1v1h-1zM5 11h1v1h-1zM8 11h1v1h-1zM11 11h1v1h-1zM3 12h1v1h-1zM6 12h1v1h-1zM9 12h1v1h-1zM12 12h1v1h-1z" fill="#000"/><rect x="0.5" y="0.5" width="14" height="14" fill="none" stroke="#000"/><rect x="1.5" y="1.5" width="12" height="12" fill="none" stroke="#e8902a"/></svg>
<div class="a t " style="left:22px;top:354px;font-size:11.5px">pactive</div>
<div class="a t " style="left:87px;top:354px;font-size:11.5px">drw</div>
<div class="a cb" style="left:120px;top:356px;width:11px;height:11px;"></div>
<svg class="a" style="left:120px;top:356px;" width="11" height="11" viewBox="0 0 11 11"><path d="M1.5 4.5L4 3.5L5.2 5.8L9.2 1.2L11 2.8L5.2 9.5Z" fill="#c00000"/></svg>
<div class="a cb" style="left:142px;top:356px;width:11px;height:11px;"></div>
<svg class="a" style="left:142px;top:356px;" width="11" height="11" viewBox="0 0 11 11"><path d="M1.5 4.5L4 3.5L5.2 5.8L9.2 1.2L11 2.8L5.2 9.5Z" fill="#c00000"/></svg>
<svg class="a" style="left:3px;top:371px" width="15" height="15"><rect width="15" height="15" fill="#000"/><rect x="0.5" y="0.5" width="14" height="14" fill="none" stroke="#000"/><rect x="1.5" y="1.5" width="12" height="12" fill="none" stroke="#38b870"/></svg>
<div class="a t " style="left:22px;top:371px;font-size:11.5px">nselect</div>
<div class="a t " style="left:87px;top:371px;font-size:11.5px">drw</div>
<div class="a cb" style="left:120px;top:373px;width:11px;height:11px;"></div>
<svg class="a" style="left:120px;top:373px;" width="11" height="11" viewBox="0 0 11 11"><path d="M1.5 4.5L4 3.5L5.2 5.8L9.2 1.2L11 2.8L5.2 9.5Z" fill="#c00000"/></svg>
<div class="a cb" style="left:142px;top:373px;width:11px;height:11px;"></div>
<svg class="a" style="left:142px;top:373px;" width="11" height="11" viewBox="0 0 11 11"><path d="M1.5 4.5L4 3.5L5.2 5.8L9.2 1.2L11 2.8L5.2 9.5Z" fill="#c00000"/></svg>
<svg class="a" style="left:3px;top:388px" width="15" height="15"><rect width="15" height="15" fill="#000"/><rect x="0.5" y="0.5" width="14" height="14" fill="none" stroke="#000"/><rect x="1.5" y="1.5" width="12" height="12" fill="none" stroke="#d08040"/></svg>
<div class="a t " style="left:22px;top:388px;font-size:11.5px">pselect</div>
<div class="a t " style="left:87px;top:388px;font-size:11.5px">drw</div>
<div class="a cb" style="left:120px;top:390px;width:11px;height:11px;"></div>
<svg class="a" style="left:120px;top:390px;" width="11" height="11" viewBox="0 0 11 11"><path d="M1.5 4.5L4 3.5L5.2 5.8L9.2 1.2L11 2.8L5.2 9.5Z" fill="#c00000"/></svg>
<div class="a cb" style="left:142px;top:390px;width:11px;height:11px;"></div>
<svg class="a" style="left:142px;top:390px;" width="11" height="11" viewBox="0 0 11 11"><path d="M1.5 4.5L4 3.5L5.2 5.8L9.2 1.2L11 2.8L5.2 9.5Z" fill="#c00000"/></svg>
<svg class="a" style="left:3px;top:405px" width="15" height="15"><rect width="15" height="15" fill="#d01818"/><path d="M2 2h1v1h-1zM4 2h1v1h-1zM6 2h1v1h-1zM8 2h1v1h-1zM10 2h1v1h-1zM12 2h1v1h-1zM2 4h1v1h-1zM4 4h1v1h-1zM6 4h1v1h-1zM8 4h1v1h-1zM10 4h1v1h-1zM12 4h1v1h-1zM2 6h1v1h-1zM4 6h1v1h-1zM6 6h1v1h-1zM8 6h1v1h-1zM10 6h1v1h-1zM12 6h1v1h-1zM2 8h1v1h-1zM4 8h1v1h-1zM6 8h1v1h-1zM8 8h1v1h-1zM10 8h1v1h-1zM12 8h1v1h-1zM2 10h1v1h-1zM4 10h1v1h-1zM6 10h1v1h-1zM8 10h1v1h-1zM10 10h1v1h-1zM12 10h1v1h-1zM2 12h1v1h-1zM4 12h1v1h-1zM6 12h1v1h-1zM8 12h1v1h-1zM10 12h1v1h-1zM12 12h1v1h-1z" fill="#600"/><rect x="0.5" y="0.5" width="14" height="14" fill="none" stroke="#000"/><rect x="1.5" y="1.5" width="12" height="12" fill="none" stroke="#d01818"/></svg>
<div class="a t " style="left:22px;top:405px;font-size:11.5px">poly</div>
<div class="a t " style="left:87px;top:405px;font-size:11.5px">drw</div>
<div class="a cb" style="left:120px;top:407px;width:11px;height:11px;"></div>
<svg class="a" style="left:120px;top:407px;" width="11" height="11" viewBox="0 0 11 11"><path d="M1.5 4.5L4 3.5L5.2 5.8L9.2 1.2L11 2.8L5.2 9.5Z" fill="#c00000"/></svg>
<div class="a cb" style="left:142px;top:407px;width:11px;height:11px;"></div>
<svg class="a" style="left:142px;top:407px;" width="11" height="11" viewBox="0 0 11 11"><path d="M1.5 4.5L4 3.5L5.2 5.8L9.2 1.2L11 2.8L5.2 9.5Z" fill="#c00000"/></svg>
<svg class="a" style="left:3px;top:422px" width="15" height="15"><rect width="15" height="15" fill="#f8f040"/><path d="M2 2h2v2h-2zM6 2h2v2h-2zM10 2h2v2h-2zM4 4h2v2h-2zM8 4h2v2h-2zM12 4h2v2h-2zM2 6h2v2h-2zM6 6h2v2h-2zM10 6h2v2h-2zM4 8h2v2h-2zM8 8h2v2h-2zM12 8h2v2h-2zM2 10h2v2h-2zM6 10h2v2h-2zM10 10h2v2h-2zM4 12h2v2h-2zM8 12h2v2h-2zM12 12h2v2h-2z" fill="#000"/><rect x="0.5" y="0.5" width="14" height="14" fill="none" stroke="#000"/><rect x="1.5" y="1.5" width="12" height="12" fill="none" stroke="#f8f040"/></svg>
<div class="a t " style="left:22px;top:422px;font-size:11.5px">elec</div>
<div class="a t " style="left:87px;top:422px;font-size:11.5px">drw</div>
<div class="a cb" style="left:120px;top:424px;width:11px;height:11px;"></div>
<svg class="a" style="left:120px;top:424px;" width="11" height="11" viewBox="0 0 11 11"><path d="M1.5 4.5L4 3.5L5.2 5.8L9.2 1.2L11 2.8L5.2 9.5Z" fill="#c00000"/></svg>
<div class="a cb" style="left:142px;top:424px;width:11px;height:11px;"></div>
<svg class="a" style="left:142px;top:424px;" width="11" height="11" viewBox="0 0 11 11"><path d="M1.5 4.5L4 3.5L5.2 5.8L9.2 1.2L11 2.8L5.2 9.5Z" fill="#c00000"/></svg>
<svg class="a" style="left:3px;top:439px" width="15" height="15"><rect width="15" height="15" fill="#0a0a90"/><path d="M2 2h1v1h-1zM6 2h1v1h-1zM10 2h1v1h-1zM3 3h1v1h-1zM7 3h1v1h-1zM11 3h1v1h-1zM4 4h1v1h-1zM8 4h1v1h-1zM12 4h1v1h-1zM5 5h1v1h-1zM9 5h1v1h-1zM2 6h1v1h-1zM6 6h1v1h-1zM10 6h1v1h-1zM3 7h1v1h-1zM7 7h1v1h-1zM11 7h1v1h-1zM4 8h1v1h-1zM8 8h1v1h-1zM12 8h1v1h-1zM5 9h1v1h-1zM9 9h1v1h-1zM2 10h1v1h-1zM6 10h1v1h-1zM10 10h1v1h-1zM3 11h1v1h-1zM7 11h1v1h-1zM11 11h1v1h-1zM4 12h1v1h-1zM8 12h1v1h-1zM12 12h1v1h-1z" fill="#2a2ae0"/><rect x="0.5" y="0.5" width="14" height="14" fill="none" stroke="#000"/><rect x="1.5" y="1.5" width="12" height="12" fill="none" stroke="#2a2ae0"/></svg>
<div class="a t " style="left:22px;top:439px;font-size:11.5px">metal1</div>
<div class="a t " style="left:87px;top:439px;font-size:11.5px">drw</div>
<div class="a cb" style="left:120px;top:441px;width:11px;height:11px;"></div>
<svg class="a" style="left:120px;top:441px;" width="11" height="11" viewBox="0 0 11 11"><path d="M1.5 4.5L4 3.5L5.2 5.8L9.2 1.2L11 2.8L5.2 9.5Z" fill="#c00000"/></svg>
<div class="a cb" style="left:142px;top:441px;width:11px;height:11px;"></div>
<svg class="a" style="left:142px;top:441px;" width="11" height="11" viewBox="0 0 11 11"><path d="M1.5 4.5L4 3.5L5.2 5.8L9.2 1.2L11 2.8L5.2 9.5Z" fill="#c00000"/></svg>
<svg class="a" style="left:3px;top:456px" width="15" height="15"><rect width="15" height="15" fill="#000"/><path d="M4 3h1v1h-1zM7 3h1v1h-1zM10 3h1v1h-1zM3 6h1v1h-1zM6 6h1v1h-1zM9 6h1v1h-1zM4 9h1v1h-1zM7 9h1v1h-1zM10 9h1v1h-1z" fill="#c030d0"/><rect x="0.5" y="0.5" width="14" height="14" fill="none" stroke="#000"/><rect x="1.5" y="1.5" width="12" height="12" fill="none" stroke="#c030d0"/></svg>
<div class="a t " style="left:22px;top:456px;font-size:11.5px">metal2</div>
<div class="a t " style="left:87px;top:456px;font-size:11.5px">drw</div>
<div class="a cb" style="left:120px;top:458px;width:11px;height:11px;"></div>
<svg class="a" style="left:120px;top:458px;" width="11" height="11" viewBox="0 0 11 11"><path d="M1.5 4.5L4 3.5L5.2 5.8L9.2 1.2L11 2.8L5.2 9.5Z" fill="#c00000"/></svg>
<div class="a cb" style="left:142px;top:458px;width:11px;height:11px;"></div>
<svg class="a" style="left:142px;top:458px;" width="11" height="11" viewBox="0 0 11 11"><path d="M1.5 4.5L4 3.5L5.2 5.8L9.2 1.2L11 2.8L5.2 9.5Z" fill="#c00000"/></svg>
<svg class="a" style="left:3px;top:473px" width="15" height="15"><rect width="15" height="15" fill="#000"/><path d="M2.5 12.5L12.5 2.5" stroke="#30d8e8" stroke-width="1"/><rect x="0.5" y="0.5" width="14" height="14" fill="none" stroke="#000"/><rect x="1.5" y="1.5" width="12" height="12" fill="none" stroke="#30d8e8"/></svg>
<div class="a t " style="left:22px;top:473px;font-size:11.5px">metal3</div>
<div class="a t " style="left:87px;top:473px;font-size:11.5px">drw</div>
<div class="a cb" style="left:120px;top:475px;width:11px;height:11px;"></div>
<svg class="a" style="left:120px;top:475px;" width="11" height="11" viewBox="0 0 11 11"><path d="M1.5 4.5L4 3.5L5.2 5.8L9.2 1.2L11 2.8L5.2 9.5Z" fill="#c00000"/></svg>
<div class="a cb" style="left:142px;top:475px;width:11px;height:11px;"></div>
<svg class="a" style="left:142px;top:475px;" width="11" height="11" viewBox="0 0 11 11"><path d="M1.5 4.5L4 3.5L5.2 5.8L9.2 1.2L11 2.8L5.2 9.5Z" fill="#c00000"/></svg>
<svg class="a" style="left:3px;top:490px" width="15" height="15"><rect width="15" height="15" fill="#000"/><rect x="0.5" y="0.5" width="14" height="14" fill="none" stroke="#000"/><rect x="1.5" y="1.5" width="12" height="12" fill="none" stroke="#6a2020"/></svg>
<div class="a t " style="left:22px;top:490px;font-size:11.5px">cc</div>
<div class="a t " style="left:87px;top:490px;font-size:11.5px">drw</div>
<div class="a cb" style="left:120px;top:492px;width:11px;height:11px;"></div>
<svg class="a" style="left:120px;top:492px;" width="11" height="11" viewBox="0 0 11 11"><path d="M1.5 4.5L4 3.5L5.2 5.8L9.2 1.2L11 2.8L5.2 9.5Z" fill="#c00000"/></svg>
<div class="a cb" style="left:142px;top:492px;width:11px;height:11px;"></div>
<svg class="a" style="left:142px;top:492px;" width="11" height="11" viewBox="0 0 11 11"><path d="M1.5 4.5L4 3.5L5.2 5.8L9.2 1.2L11 2.8L5.2 9.5Z" fill="#c00000"/></svg>
<div class="a " style="left:158px;top:267px;width:15px;height:239px;background:#9a9a9a"></div>
<div class="a " style="left:158px;top:267px;width:15px;height:18px;background:linear-gradient(#fafafa,#d0d0d0);border-bottom:1px solid #444"></div>
<svg class="a" style="left:161px;top:271px;" width="9" height="7" viewBox="0 0 9 7"><path d="M0 6l4.5-5 4.5 5z" fill="#fff" stroke="#bbb" stroke-width=".6"/></svg>
<div class="a " style="left:159px;top:286px;width:13px;height:66px;background:linear-gradient(90deg,#c8c8c8,#e0e0e0,#c0c0c0);border-radius:6px;border:1px solid #aaa"></div>
<div class="a " style="left:162px;top:314px;width:7px;height:1px;background:#888"></div>
<div class="a " style="left:162px;top:316px;width:7px;height:1px;background:#888"></div>
<div class="a " style="left:162px;top:318px;width:7px;height:1px;background:#888"></div>
<div class="a " style="left:162px;top:320px;width:7px;height:1px;background:#888"></div>
<div class="a " style="left:158px;top:489px;width:15px;height:17px;background:linear-gradient(#fafafa,#d0d0d0)"></div>
<svg class="a" style="left:161px;top:494px;" width="9" height="7" viewBox="0 0 9 7"><path d="M0 1l4.5 5 4.5-5z" fill="#fff" stroke="#bbb" stroke-width=".6"/></svg>
<div class="a " style="left:0px;top:507px;width:175px;height:8px;background:#dadada"></div>
<div class="a hdr" style="left:1px;top:515px;width:174px;height:18px;"></div>
<div class="a t " style="left:13px;top:518px;font-weight:bold;font-size:12px;line-height:14px">Objects</div>
<div class="a hb" style="left:160px;top:517px;width:12px;height:13px;"></div>
<svg class="a" style="left:162px;top:518px;" width="9" height="9" viewBox="0 0 9 9"><path d="M1 1l7 7M8 1L1 8" stroke="#000" stroke-width="1.3"/></svg>
<div class="a hb" style="left:147px;top:517px;width:12px;height:13px;"></div>
<svg class="a" style="left:149px;top:518px;" width="9" height="9" viewBox="0 0 9 9"><rect x="0.5" y="3.5" width="5" height="5" fill="none" stroke="#000"/><path d="M3 3.5V0.5h5v5H5.5" fill="none" stroke="#000"/><path d="M0.5 4.5h5M3 1.5h5" stroke="#000"/></svg>
<div class="a " style="left:1px;top:534px;width:172px;height:71px;background:#fff;border:1px solid #222;border-right:none"></div>
<div class="a " style="left:2px;top:535px;width:155px;height:17px;background:linear-gradient(#e4e4e4,#b8b8b8)"></div>
<div class="a " style="left:112px;top:536px;width:1px;height:15px;background:#8e8e8e"></div>
<div class="a " style="left:134px;top:536px;width:1px;height:15px;background:#8e8e8e"></div>
<div class="a " style="left:157px;top:536px;width:1px;height:15px;background:#8e8e8e"></div>
<div class="a t " style="left:37px;top:537px;font-weight:bold;font-size:11.5px">Objects</div>
<div class="a t " style="left:120px;top:537px;font-size:11.5px">V</div>
<div class="a t " style="left:142px;top:537px;font-size:11.5px">S</div>
<div class="a " style="left:12px;top:553px;width:1px;height:51px;border-left:1px dotted #777"></div>
<div class="a " style="left:13px;top:561px;width:8px;height:1px;border-top:1px dotted #777"></div>
<div class="a t " style="left:25px;top:555px;font-size:11.5px">Instances</div>
<div class="a cb" style="left:120px;top:556px;width:11px;height:11px;"></div>
<svg class="a" style="left:120px;top:556px;" width="11" height="11" viewBox="0 0 11 11"><path d="M1.5 4.5L4 3.5L5.2 5.8L9.2 1.2L11 2.8L5.2 9.5Z" fill="#c00000"/></svg>
<div class="a cb" style="left:142px;top:556px;width:11px;height:11px;"></div>
<svg class="a" style="left:142px;top:556px;" width="11" height="11" viewBox="0 0 11 11"><path d="M1.5 4.5L4 3.5L5.2 5.8L9.2 1.2L11 2.8L5.2 9.5Z" fill="#c00000"/></svg>
<div class="a " style="left:13px;top:578px;width:8px;height:1px;border-top:1px dotted #777"></div>
<div class="a t " style="left:25px;top:572px;font-size:11.5px">Pins</div>
<div class="a cb" style="left:120px;top:573px;width:11px;height:11px;"></div>
<svg class="a" style="left:120px;top:573px;" width="11" height="11" viewBox="0 0 11 11"><path d="M1.5 4.5L4 3.5L5.2 5.8L9.2 1.2L11 2.8L5.2 9.5Z" fill="#c00000"/></svg>
<div class="a cb" style="left:142px;top:573px;width:11px;height:11px;"></div>
<svg class="a" style="left:142px;top:573px;" width="11" height="11" viewBox="0 0 11 11"><path d="M1.5 4.5L4 3.5L5.2 5.8L9.2 1.2L11 2.8L5.2 9.5Z" fill="#c00000"/></svg>
<div class="a " style="left:13px;top:595px;width:8px;height:1px;border-top:1px dotted #777"></div>
<div class="a t " style="left:25px;top:589px;font-size:11.5px">Vias</div>
<div class="a cb" style="left:120px;top:590px;width:11px;height:11px;"></div>
<svg class="a" style="left:120px;top:590px;" width="11" height="11" viewBox="0 0 11 11"><path d="M1.5 4.5L4 3.5L5.2 5.8L9.2 1.2L11 2.8L5.2 9.5Z" fill="#c00000"/></svg>
<div class="a cb" style="left:142px;top:590px;width:11px;height:11px;"></div>
<svg class="a" style="left:142px;top:590px;" width="11" height="11" viewBox="0 0 11 11"><path d="M1.5 4.5L4 3.5L5.2 5.8L9.2 1.2L11 2.8L5.2 9.5Z" fill="#c00000"/></svg>
<div class="a " style="left:158px;top:535px;width:15px;height:70px;background:#9a9a9a"></div>
<div class="a " style="left:158px;top:535px;width:15px;height:17px;background:linear-gradient(#fafafa,#d0d0d0)"></div>
<svg class="a" style="left:161px;top:539px;" width="9" height="7" viewBox="0 0 9 7"><path d="M0 6l4.5-5 4.5 5z" fill="#fff" stroke="#bbb" stroke-width=".6"/></svg>
<div class="a " style="left:159px;top:552px;width:13px;height:20px;background:linear-gradient(90deg,#c8c8c8,#e0e0e0,#c0c0c0);border-radius:6px;border:1px solid #aaa"></div>
<div class="a " style="left:158px;top:588px;width:15px;height:17px;background:linear-gradient(#fafafa,#d0d0d0)"></div>
<svg class="a" style="left:161px;top:593px;" width="9" height="7" viewBox="0 0 9 7"><path d="M0 1l4.5 5 4.5-5z" fill="#fff" stroke="#bbb" stroke-width=".6"/></svg>
<div class="a " style="left:1px;top:605px;width:174px;height:2px;background:#111"></div>
<div class="a " style="left:1px;top:607px;width:55px;height:22px;background:#efefef;border-right:1px solid #ccc"></div>
<div class="a t " style="left:8px;top:610px;font-size:11.5px">Objects</div>
<div class="a " style="left:56px;top:607px;width:43px;height:22px;background:#d8d8d8;border-right:1px solid #bbb"></div>
<div class="a t " style="left:64px;top:609px;font-size:11.5px">Grids</div>
<svg class="a" style="left:181px;top:125px" width="1098" height="504" shape-rendering="crispEdges"><g transform="translate(-181,-125)"><rect x="181" y="125" width="1098" height="504" fill="#000"/><defs>
<pattern id="pg" patternUnits="userSpaceOnUse" width="4" height="4"><rect x="1" y="0" width="1" height="1" fill="#3cb878"/><rect x="0" y="1" width="1" height="1" fill="#3cb878"/><rect x="3" y="2" width="1" height="1" fill="#3cb878"/><rect x="2" y="3" width="1" height="1" fill="#3cb878"/></pattern>
<pattern id="pgc" patternUnits="userSpaceOnUse" width="4" height="4"><rect width="4" height="4" fill="#000030"/><rect x="1" y="0" width="1" height="1" fill="#44a0e0"/><rect x="0" y="1" width="1" height="1" fill="#44a0e0"/><rect x="3" y="2" width="1" height="1" fill="#44a0e0"/><rect x="2" y="3" width="1" height="1" fill="#44a0e0"/></pattern>
<pattern id="pb" patternUnits="userSpaceOnUse" width="4" height="4"><rect width="4" height="4" fill="#000028"/><rect x="0" y="0" width="1" height="1" fill="#2222b4"/><rect x="1" y="1" width="1" height="1" fill="#2222b4"/><rect x="2" y="2" width="1" height="1" fill="#2222b4"/><rect x="3" y="3" width="1" height="1" fill="#2222b4"/></pattern>
<pattern id="pc" patternUnits="userSpaceOnUse" width="2" height="2"><rect width="2" height="2" fill="#0c0cb0"/><rect x="0" y="0" width="1" height="1" fill="#38a0f0"/></pattern>
<pattern id="pr" patternUnits="userSpaceOnUse" width="16" height="16" x="0" y="0"><path d="M9 0h1v1h-1zM8 1h1v1h-1zM7 2h1v1h-1zM8 2h1v1h-1zM6 3h1v1h-1zM8 3h1v1h-1zM5 4h1v1h-1zM8 4h1v1h-1zM4 5h1v1h-1zM5 5h1v1h-1zM6 5h1v1h-1zM7 5h1v1h-1zM8 5h1v1h-1zM9 5h1v1h-1zM12 5h1v1h-1zM13 5h1v1h-1zM14 5h1v1h-1zM15 5h1v1h-1zM0 5h1v1h-1zM11 6h1v1h-1zM10 7h1v1h-1zM12 7h1v1h-1zM11 8h1v1h-1zM11 9h1v1h-1zM11 10h1v1h-1zM14 4h1v1h-1zM15 4h1v1h-1z" fill="#8d9ba6"/></pattern>
</defs><defs><path id="gd" d="M189 129h1v1h-1zm11 0h1v1h-1zm11 0h1v1h-1zm11 0h1v1h-1zm11 0h1v1h-1zm11 0h1v1h-1zm11 0h1v1h-1zm11 0h1v1h-1zm11 0h1v1h-1zm11 0h1v1h-1zm11 0h1v1h-1zm11 0h1v1h-1zm11 0h1v1h-1zm11 0h1v1h-1zm11 0h1v1h-1zm11 0h1v1h-1zm11 0h1v1h-1zm11 0h1v1h-1zm11 0h1v1h-1zm11 0h1v1h-1zm11 0h1v1h-1zm11 0h1v1h-1zm11 0h1v1h-1zm11 0h1v1h-1zm11 0h1v1h-1zm11 0h1v1h-1zm11 0h1v1h-1zm11 0h1v1h-1zm11 0h1v1h-1zm12 0h1v1h-1zm11 0h1v1h-1zm11 0h1v1h-1zm11 0h1v1h-1zm11 0h1v1h-1zm11 0h1v1h-1zm11 0h1v1h-1zm11 0h1v1h-1zm11 0h1v1h-1zm11 0h1v1h-1zm11 0h1v1h-1zm11 0h1v1h-1zm11 0h1v1h-1zm11 0h1v1h-1zm11 0h1v1h-1zm11 0h1v1h-1zm11 0h1v1h-1zm11 0h1v1h-1zm11 0h1v1h-1zm11 0h1v1h-1zm11 0h1v1h-1zm11 0h1v1h-1zm11 0h1v1h-1zm11 0h1v1h-1zm11 0h1v1h-1zm11 0h1v1h-1zm11 0h1v1h-1zm11 0h1v1h-1zm11 0h1v1h-1zm11 0h1v1h-1zm11 0h1v1h-1zm11 0h1v1h-1zm11 0h1v1h-1zm11 0h1v1h-1zm11 0h1v1h-1zm11 0h1v1h-1zm11 0h1v1h-1zm11 0h1v1h-1zm11 0h1v1h-1zm11 0h1v1h-1zm11 0h1v1h-1zm11 0h1v1h-1zm11 0h1v1h-1zm11 0h1v1h-1zm11 0h1v1h-1zm11 0h1v1h-1zm11 0h1v1h-1zm11 0h1v1h-1zm11 0h1v1h-1zm11 0h1v1h-1zm11 0h1v1h-1zm11 0h1v1h-1zm11 0h1v1h-1zm11 0h1v1h-1zm11 0h1v1h-1zm11 0h1v1h-1zm11 0h1v1h-1zm11 0h1v1h-1zm12 0h1v1h-1zm11 0h1v1h-1zm11 0h1v1h-1zm11 0h1v1h-1zm11 0h1v1h-1zm11 0h1v1h-1zm11 0h1v1h-1zm11 0h1v1h-1zm11 0h1v1h-1zm11 0h1v1h-1zm11 0h1v1h-1zm11 0h1v1h-1zM189 140h1v1h-1zm11 0h1v1h-1zm11 0h1v1h-1zm11 0h1v1h-1zm11 0h1v1h-1zm11 0h1v1h-1zm11 0h1v1h-1zm11 0h1v1h-1zm11 0h1v1h-1zm11 0h1v1h-1zm11 0h1v1h-1zm11 0h1v1h-1zm11 0h1v1h-1zm11 0h1v1h-1zm11 0h1v1h-1zm11 0h1v1h-1zm11 0h1v1h-1zm11 0h1v1h-1zm11 0h1v1h-1zm11 0h1v1h-1zm11 0h1v1h-1zm11 0h1v1h-1zm11 0h1v1h-1zm11 0h1v1h-1zm11 0h1v1h-1zm11 0h1v1h-1zm11 0h1v1h-1zm11 0h1v1h-1zm11 0h1v1h-1zm12 0h1v1h-1zm11 0h1v1h-1zm11 0h1v1h-1zm11 0h1v1h-1zm11 0h1v1h-1zm11 0h1v1h-1zm11 0h1v1h-1zm11 0h1v1h-1zm11 0h1v1h-1zm11 0h1v1h-1zm11 0h1v1h-1zm11 0h1v1h-1zm11 0h1v1h-1zm11 0h1v1h-1zm11 0h1v1h-1zm11 0h1v1h-1zm11 0h1v1h-1zm11 0h1v1h-1zm11 0h1v1h-1zm11 0h1v1h-1zm11 0h1v1h-1zm11 0h1v1h-1zm11 0h1v1h-1zm11 0h1v1h-1zm11 0h1v1h-1zm11 0h1v1h-1zm11 0h1v1h-1zm11 0h1v1h-1zm11 0h1v1h-1zm11 0h1v1h-1zm11 0h1v1h-1zm11 0h1v1h-1zm11 0h1v1h-1zm11 0h1v1h-1zm11 0h1v1h-1zm11 0h1v1h-1zm11 0h1v1h-1zm11 0h1v1h-1zm11 0h1v1h-1zm11 0h1v1h-1zm11 0h1v1h-1zm11 0h1v1h-1zm11 0h1v1h-1zm11 0h1v1h-1zm11 0h1v1h-1zm11 0h1v1h-1zm11 0h1v1h-1zm11 0h1v1h-1zm11 0h1v1h-1zm11 0h1v1h-1zm11 0h1v1h-1zm11 0h1v1h-1zm11 0h1v1h-1zm11 0h1v1h-1zm11 0h1v1h-1zm11 0h1v1h-1zm11 0h1v1h-1zm11 0h1v1h-1zm12 0h1v1h-1zm11 0h1v1h-1zm11 0h1v1h-1zm11 0h1v1h-1zm11 0h1v1h-1zm11 0h1v1h-1zm11 0h1v1h-1zm11 0h1v1h-1zm11 0h1v1h-1zm11 0h1v1h-1zm11 0h1v1h-1zm11 0h1v1h-1zM189 151h1v1h-1zm11 0h1v1h-1zm11 0h1v1h-1zm11 0h1v1h-1zm11 0h1v1h-1zm11 0h1v1h-1zm11 0h1v1h-1zm11 0h1v1h-1zm11 0h1v1h-1zm11 0h1v1h-1zm11 0h1v1h-1zm11 0h1v1h-1zm11 0h1v1h-1zm11 0h1v1h-1zm11 0h1v1h-1zm11 0h1v1h-1zm11 0h1v1h-1zm11 0h1v1h-1zm11 0h1v1h-1zm11 0h1v1h-1zm11 0h1v1h-1zm11 0h1v1h-1zm11 0h1v1h-1zm11 0h1v1h-1zm11 0h1v1h-1zm11 0h1v1h-1zm11 0h1v1h-1zm11 0h1v1h-1zm11 0h1v1h-1zm12 0h1v1h-1zm11 0h1v1h-1zm11 0h1v1h-1zm11 0h1v1h-1zm11 0h1v1h-1zm11 0h1v1h-1zm11 0h1v1h-1zm11 0h1v1h-1zm11 0h1v1h-1zm11 0h1v1h-1zm11 0h1v1h-1zm11 0h1v1h-1zm11 0h1v1h-1zm11 0h1v1h-1zm11 0h1v1h-1zm11 0h1v1h-1zm11 0h1v1h-1zm11 0h1v1h-1zm11 0h1v1h-1zm11 0h1v1h-1zm11 0h1v1h-1zm11 0h1v1h-1zm11 0h1v1h-1zm11 0h1v1h-1zm11 0h1v1h-1zm11 0h1v1h-1zm11 0h1v1h-1zm11 0h1v1h-1zm11 0h1v1h-1zm11 0h1v1h-1zm11 0h1v1h-1zm11 0h1v1h-1zm11 0h1v1h-1zm11 0h1v1h-1zm11 0h1v1h-1zm11 0h1v1h-1zm11 0h1v1h-1zm11 0h1v1h-1zm11 0h1v1h-1zm11 0h1v1h-1zm11 0h1v1h-1zm11 0h1v1h-1zm11 0h1v1h-1zm11 0h1v1h-1zm11 0h1v1h-1zm11 0h1v1h-1zm11 0h1v1h-1zm11 0h1v1h-1zm11 0h1v1h-1zm11 0h1v1h-1zm11 0h1v1h-1zm11 0h1v1h-1zm11 0h1v1h-1zm11 0h1v1h-1zm11 0h1v1h-1zm11 0h1v1h-1zm11 0h1v1h-1zm11 0h1v1h-1zm12 0h1v1h-1zm11 0h1v1h-1zm11 0h1v1h-1zm11 0h1v1h-1zm11 0h1v1h-1zm11 0h1v1h-1zm11 0h1v1h-1zm11 0h1v1h-1zm11 0h1v1h-1zm11 0h1v1h-1zm11 0h1v1h-1zm11 0h1v1h-1zM189 162h1v1h-1zm11 0h1v1h-1zm11 0h1v1h-1zm11 0h1v1h-1zm11 0h1v1h-1zm11 0h1v1h-1zm11 0h1v1h-1zm11 0h1v1h-1zm11 0h1v1h-1zm11 0h1v1h-1zm11 0h1v1h-1zm11 0h1v1h-1zm11 0h1v1h-1zm11 0h1v1h-1zm11 0h1v1h-1zm11 0h1v1h-1zm11 0h1v1h-1zm11 0h1v1h-1zm11 0h1v1h-1zm11 0h1v1h-1zm11 0h1v1h-1zm11 0h1v1h-1zm11 0h1v1h-1zm11 0h1v1h-1zm11 0h1v1h-1zm11 0h1v1h-1zm11 0h1v1h-1zm11 0h1v1h-1zm11 0h1v1h-1zm12 0h1v1h-1zm11 0h1v1h-1zm11 0h1v1h-1zm11 0h1v1h-1zm11 0h1v1h-1zm11 0h1v1h-1zm11 0h1v1h-1zm11 0h1v1h-1zm11 0h1v1h-1zm11 0h1v1h-1zm11 0h1v1h-1zm11 0h1v1h-1zm11 0h1v1h-1zm11 0h1v1h-1zm11 0h1v1h-1zm11 0h1v1h-1zm11 0h1v1h-1zm11 0h1v1h-1zm11 0h1v1h-1zm11 0h1v1h-1zm11 0h1v1h-1zm11 0h1v1h-1zm11 0h1v1h-1zm11 0h1v1h-1zm11 0h1v1h-1zm11 0h1v1h-1zm11 0h1v1h-1zm11 0h1v1h-1zm11 0h1v1h-1zm11 0h1v1h-1zm11 0h1v1h-1zm11 0h1v1h-1zm11 0h1v1h-1zm11 0h1v1h-1zm11 0h1v1h-1zm11 0h1v1h-1zm11 0h1v1h-1zm11 0h1v1h-1zm11 0h1v1h-1zm11 0h1v1h-1zm11 0h1v1h-1zm11 0h1v1h-1zm11 0h1v1h-1zm11 0h1v1h-1zm11 0h1v1h-1zm11 0h1v1h-1zm11 0h1v1h-1zm11 0h1v1h-1zm11 0h1v1h-1zm11 0h1v1h-1zm11 0h1v1h-1zm11 0h1v1h-1zm11 0h1v1h-1zm11 0h1v1h-1zm11 0h1v1h-1zm11 0h1v1h-1zm11 0h1v1h-1zm11 0h1v1h-1zm12 0h1v1h-1zm11 0h1v1h-1zm11 0h1v1h-1zm11 0h1v1h-1zm11 0h1v1h-1zm11 0h1v1h-1zm11 0h1v1h-1zm11 0h1v1h-1zm11 0h1v1h-1zm11 0h1v1h-1zm11 0h1v1h-1zm11 0h1v1h-1zM189 173h1v1h-1zm11 0h1v1h-1zm11 0h1v1h-1zm11 0h1v1h-1zm11 0h1v1h-1zm11 0h1v1h-1zm11 0h1v1h-1zm11 0h1v1h-1zm11 0h1v1h-1zm11 0h1v1h-1zm11 0h1v1h-1zm11 0h1v1h-1zm11 0h1v1h-1zm11 0h1v1h-1zm11 0h1v1h-1zm11 0h1v1h-1zm11 0h1v1h-1zm11 0h1v1h-1zm11 0h1v1h-1zm11 0h1v1h-1zm11 0h1v1h-1zm11 0h1v1h-1zm11 0h1v1h-1zm11 0h1v1h-1zm11 0h1v1h-1zm11 0h1v1h-1zm11 0h1v1h-1zm11 0h1v1h-1zm11 0h1v1h-1zm12 0h1v1h-1zm11 0h1v1h-1zm11 0h1v1h-1zm11 0h1v1h-1zm11 0h1v1h-1zm11 0h1v1h-1zm11 0h1v1h-1zm11 0h1v1h-1zm11 0h1v1h-1zm11 0h1v1h-1zm11 0h1v1h-1zm11 0h1v1h-1zm11 0h1v1h-1zm11 0h1v1h-1zm11 0h1v1h-1zm11 0h1v1h-1zm11 0h1v1h-1zm11 0h1v1h-1zm11 0h1v1h-1zm11 0h1v1h-1zm11 0h1v1h-1zm11 0h1v1h-1zm11 0h1v1h-1zm11 0h1v1h-1zm11 0h1v1h-1zm11 0h1v1h-1zm11 0h1v1h-1zm11 0h1v1h-1zm11 0h1v1h-1zm11 0h1v1h-1zm11 0h1v1h-1zm11 0h1v1h-1zm11 0h1v1h-1zm11 0h1v1h-1zm11 0h1v1h-1zm11 0h1v1h-1zm11 0h1v1h-1zm11 0h1v1h-1zm11 0h1v1h-1zm11 0h1v1h-1zm11 0h1v1h-1zm11 0h1v1h-1zm11 0h1v1h-1zm11 0h1v1h-1zm11 0h1v1h-1zm11 0h1v1h-1zm11 0h1v1h-1zm11 0h1v1h-1zm11 0h1v1h-1zm11 0h1v1h-1zm11 0h1v1h-1zm11 0h1v1h-1zm11 0h1v1h-1zm11 0h1v1h-1zm11 0h1v1h-1zm11 0h1v1h-1zm11 0h1v1h-1zm11 0h1v1h-1zm12 0h1v1h-1zm11 0h1v1h-1zm11 0h1v1h-1zm11 0h1v1h-1zm11 0h1v1h-1zm11 0h1v1h-1zm11 0h1v1h-1zm11 0h1v1h-1zm11 0h1v1h-1zm11 0h1v1h-1zm11 0h1v1h-1zm11 0h1v1h-1zM189 184h1v1h-1zm11 0h1v1h-1zm11 0h1v1h-1zm11 0h1v1h-1zm11 0h1v1h-1zm11 0h1v1h-1zm11 0h1v1h-1zm11 0h1v1h-1zm11 0h1v1h-1zm11 0h1v1h-1zm11 0h1v1h-1zm11 0h1v1h-1zm11 0h1v1h-1zm11 0h1v1h-1zm11 0h1v1h-1zm11 0h1v1h-1zm11 0h1v1h-1zm11 0h1v1h-1zm11 0h1v1h-1zm11 0h1v1h-1zm11 0h1v1h-1zm11 0h1v1h-1zm11 0h1v1h-1zm11 0h1v1h-1zm11 0h1v1h-1zm11 0h1v1h-1zm11 0h1v1h-1zm11 0h1v1h-1zm11 0h1v1h-1zm12 0h1v1h-1zm11 0h1v1h-1zm11 0h1v1h-1zm11 0h1v1h-1zm11 0h1v1h-1zm11 0h1v1h-1zm11 0h1v1h-1zm11 0h1v1h-1zm11 0h1v1h-1zm11 0h1v1h-1zm11 0h1v1h-1zm11 0h1v1h-1zm11 0h1v1h-1zm11 0h1v1h-1zm11 0h1v1h-1zm11 0h1v1h-1zm11 0h1v1h-1zm11 0h1v1h-1zm11 0h1v1h-1zm11 0h1v1h-1zm11 0h1v1h-1zm11 0h1v1h-1zm11 0h1v1h-1zm11 0h1v1h-1zm11 0h1v1h-1zm11 0h1v1h-1zm11 0h1v1h-1zm11 0h1v1h-1zm11 0h1v1h-1zm11 0h1v1h-1zm11 0h1v1h-1zm11 0h1v1h-1zm11 0h1v1h-1zm11 0h1v1h-1zm11 0h1v1h-1zm11 0h1v1h-1zm11 0h1v1h-1zm11 0h1v1h-1zm11 0h1v1h-1zm11 0h1v1h-1zm11 0h1v1h-1zm11 0h1v1h-1zm11 0h1v1h-1zm11 0h1v1h-1zm11 0h1v1h-1zm11 0h1v1h-1zm11 0h1v1h-1zm11 0h1v1h-1zm11 0h1v1h-1zm11 0h1v1h-1zm11 0h1v1h-1zm11 0h1v1h-1zm11 0h1v1h-1zm11 0h1v1h-1zm11 0h1v1h-1zm11 0h1v1h-1zm11 0h1v1h-1zm11 0h1v1h-1zm12 0h1v1h-1zm11 0h1v1h-1zm11 0h1v1h-1zm11 0h1v1h-1zm11 0h1v1h-1zm11 0h1v1h-1zm11 0h1v1h-1zm11 0h1v1h-1zm11 0h1v1h-1zm11 0h1v1h-1zm11 0h1v1h-1zm11 0h1v1h-1zM189 196h1v1h-1zm11 0h1v1h-1zm11 0h1v1h-1zm11 0h1v1h-1zm11 0h1v1h-1zm11 0h1v1h-1zm11 0h1v1h-1zm11 0h1v1h-1zm11 0h1v1h-1zm11 0h1v1h-1zm11 0h1v1h-1zm11 0h1v1h-1zm11 0h1v1h-1zm11 0h1v1h-1zm11 0h1v1h-1zm11 0h1v1h-1zm11 0h1v1h-1zm11 0h1v1h-1zm11 0h1v1h-1zm11 0h1v1h-1zm11 0h1v1h-1zm11 0h1v1h-1zm11 0h1v1h-1zm11 0h1v1h-1zm11 0h1v1h-1zm11 0h1v1h-1zm11 0h1v1h-1zm11 0h1v1h-1zm11 0h1v1h-1zm12 0h1v1h-1zm11 0h1v1h-1zm11 0h1v1h-1zm11 0h1v1h-1zm11 0h1v1h-1zm11 0h1v1h-1zm11 0h1v1h-1zm11 0h1v1h-1zm11 0h1v1h-1zm11 0h1v1h-1zm11 0h1v1h-1zm11 0h1v1h-1zm11 0h1v1h-1zm11 0h1v1h-1zm11 0h1v1h-1zm11 0h1v1h-1zm11 0h1v1h-1zm11 0h1v1h-1zm11 0h1v1h-1zm11 0h1v1h-1zm11 0h1v1h-1zm11 0h1v1h-1zm11 0h1v1h-1zm11 0h1v1h-1zm11 0h1v1h-1zm11 0h1v1h-1zm11 0h1v1h-1zm11 0h1v1h-1zm11 0h1v1h-1zm11 0h1v1h-1zm11 0h1v1h-1zm11 0h1v1h-1zm11 0h1v1h-1zm11 0h1v1h-1zm11 0h1v1h-1zm11 0h1v1h-1zm11 0h1v1h-1zm11 0h1v1h-1zm11 0h1v1h-1zm11 0h1v1h-1zm11 0h1v1h-1zm11 0h1v1h-1zm11 0h1v1h-1zm11 0h1v1h-1zm11 0h1v1h-1zm11 0h1v1h-1zm11 0h1v1h-1zm11 0h1v1h-1zm11 0h1v1h-1zm11 0h1v1h-1zm11 0h1v1h-1zm11 0h1v1h-1zm11 0h1v1h-1zm11 0h1v1h-1zm11 0h1v1h-1zm11 0h1v1h-1zm11 0h1v1h-1zm11 0h1v1h-1zm12 0h1v1h-1zm11 0h1v1h-1zm11 0h1v1h-1zm11 0h1v1h-1zm11 0h1v1h-1zm11 0h1v1h-1zm11 0h1v1h-1zm11 0h1v1h-1zm11 0h1v1h-1zm11 0h1v1h-1zm11 0h1v1h-1zm11 0h1v1h-1zM189 207h1v1h-1zm11 0h1v1h-1zm11 0h1v1h-1zm11 0h1v1h-1zm11 0h1v1h-1zm11 0h1v1h-1zm11 0h1v1h-1zm11 0h1v1h-1zm11 0h1v1h-1zm11 0h1v1h-1zm11 0h1v1h-1zm11 0h1v1h-1zm11 0h1v1h-1zm11 0h1v1h-1zm11 0h1v1h-1zm11 0h1v1h-1zm11 0h1v1h-1zm11 0h1v1h-1zm11 0h1v1h-1zm11 0h1v1h-1zm11 0h1v1h-1zm11 0h1v1h-1zm11 0h1v1h-1zm11 0h1v1h-1zm11 0h1v1h-1zm11 0h1v1h-1zm11 0h1v1h-1zm11 0h1v1h-1zm11 0h1v1h-1zm12 0h1v1h-1zm11 0h1v1h-1zm11 0h1v1h-1zm11 0h1v1h-1zm11 0h1v1h-1zm11 0h1v1h-1zm11 0h1v1h-1zm11 0h1v1h-1zm11 0h1v1h-1zm11 0h1v1h-1zm11 0h1v1h-1zm11 0h1v1h-1zm11 0h1v1h-1zm11 0h1v1h-1zm11 0h1v1h-1zm11 0h1v1h-1zm11 0h1v1h-1zm11 0h1v1h-1zm11 0h1v1h-1zm11 0h1v1h-1zm11 0h1v1h-1zm11 0h1v1h-1zm11 0h1v1h-1zm11 0h1v1h-1zm11 0h1v1h-1zm11 0h1v1h-1zm11 0h1v1h-1zm11 0h1v1h-1zm11 0h1v1h-1zm11 0h1v1h-1zm11 0h1v1h-1zm11 0h1v1h-1zm11 0h1v1h-1zm11 0h1v1h-1zm11 0h1v1h-1zm11 0h1v1h-1zm11 0h1v1h-1zm11 0h1v1h-1zm11 0h1v1h-1zm11 0h1v1h-1zm11 0h1v1h-1zm11 0h1v1h-1zm11 0h1v1h-1zm11 0h1v1h-1zm11 0h1v1h-1zm11 0h1v1h-1zm11 0h1v1h-1zm11 0h1v1h-1zm11 0h1v1h-1zm11 0h1v1h-1zm11 0h1v1h-1zm11 0h1v1h-1zm11 0h1v1h-1zm11 0h1v1h-1zm11 0h1v1h-1zm11 0h1v1h-1zm11 0h1v1h-1zm11 0h1v1h-1zm12 0h1v1h-1zm11 0h1v1h-1zm11 0h1v1h-1zm11 0h1v1h-1zm11 0h1v1h-1zm11 0h1v1h-1zm11 0h1v1h-1zm11 0h1v1h-1zm11 0h1v1h-1zm11 0h1v1h-1zm11 0h1v1h-1zm11 0h1v1h-1zM189 218h1v1h-1zm11 0h1v1h-1zm11 0h1v1h-1zm11 0h1v1h-1zm11 0h1v1h-1zm11 0h1v1h-1zm11 0h1v1h-1zm11 0h1v1h-1zm11 0h1v1h-1zm11 0h1v1h-1zm11 0h1v1h-1zm11 0h1v1h-1zm11 0h1v1h-1zm11 0h1v1h-1zm11 0h1v1h-1zm11 0h1v1h-1zm11 0h1v1h-1zm11 0h1v1h-1zm11 0h1v1h-1zm11 0h1v1h-1zm11 0h1v1h-1zm11 0h1v1h-1zm11 0h1v1h-1zm11 0h1v1h-1zm11 0h1v1h-1zm11 0h1v1h-1zm11 0h1v1h-1zm11 0h1v1h-1zm11 0h1v1h-1zm12 0h1v1h-1zm11 0h1v1h-1zm11 0h1v1h-1zm11 0h1v1h-1zm11 0h1v1h-1zm11 0h1v1h-1zm11 0h1v1h-1zm11 0h1v1h-1zm11 0h1v1h-1zm11 0h1v1h-1zm11 0h1v1h-1zm11 0h1v1h-1zm11 0h1v1h-1zm11 0h1v1h-1zm11 0h1v1h-1zm11 0h1v1h-1zm11 0h1v1h-1zm11 0h1v1h-1zm11 0h1v1h-1zm11 0h1v1h-1zm11 0h1v1h-1zm11 0h1v1h-1zm11 0h1v1h-1zm11 0h1v1h-1zm11 0h1v1h-1zm11 0h1v1h-1zm11 0h1v1h-1zm11 0h1v1h-1zm11 0h1v1h-1zm11 0h1v1h-1zm11 0h1v1h-1zm11 0h1v1h-1zm11 0h1v1h-1zm11 0h1v1h-1zm11 0h1v1h-1zm11 0h1v1h-1zm11 0h1v1h-1zm11 0h1v1h-1zm11 0h1v1h-1zm11 0h1v1h-1zm11 0h1v1h-1zm11 0h1v1h-1zm11 0h1v1h-1zm11 0h1v1h-1zm11 0h1v1h-1zm11 0h1v1h-1zm11 0h1v1h-1zm11 0h1v1h-1zm11 0h1v1h-1zm11 0h1v1h-1zm11 0h1v1h-1zm11 0h1v1h-1zm11 0h1v1h-1zm11 0h1v1h-1zm11 0h1v1h-1zm11 0h1v1h-1zm11 0h1v1h-1zm11 0h1v1h-1zm12 0h1v1h-1zm11 0h1v1h-1zm11 0h1v1h-1zm11 0h1v1h-1zm11 0h1v1h-1zm11 0h1v1h-1zm11 0h1v1h-1zm11 0h1v1h-1zm11 0h1v1h-1zm11 0h1v1h-1zm11 0h1v1h-1zm11 0h1v1h-1zM189 229h1v1h-1zm11 0h1v1h-1zm11 0h1v1h-1zm11 0h1v1h-1zm11 0h1v1h-1zm11 0h1v1h-1zm11 0h1v1h-1zm11 0h1v1h-1zm11 0h1v1h-1zm11 0h1v1h-1zm11 0h1v1h-1zm11 0h1v1h-1zm11 0h1v1h-1zm11 0h1v1h-1zm11 0h1v1h-1zm11 0h1v1h-1zm11 0h1v1h-1zm11 0h1v1h-1zm11 0h1v1h-1zm11 0h1v1h-1zm11 0h1v1h-1zm11 0h1v1h-1zm11 0h1v1h-1zm11 0h1v1h-1zm11 0h1v1h-1zm11 0h1v1h-1zm11 0h1v1h-1zm11 0h1v1h-1zm11 0h1v1h-1zm12 0h1v1h-1zm11 0h1v1h-1zm11 0h1v1h-1zm11 0h1v1h-1zm11 0h1v1h-1zm11 0h1v1h-1zm11 0h1v1h-1zm11 0h1v1h-1zm11 0h1v1h-1zm11 0h1v1h-1zm11 0h1v1h-1zm11 0h1v1h-1zm11 0h1v1h-1zm11 0h1v1h-1zm11 0h1v1h-1zm11 0h1v1h-1zm11 0h1v1h-1zm11 0h1v1h-1zm11 0h1v1h-1zm11 0h1v1h-1zm11 0h1v1h-1zm11 0h1v1h-1zm11 0h1v1h-1zm11 0h1v1h-1zm11 0h1v1h-1zm11 0h1v1h-1zm11 0h1v1h-1zm11 0h1v1h-1zm11 0h1v1h-1zm11 0h1v1h-1zm11 0h1v1h-1zm11 0h1v1h-1zm11 0h1v1h-1zm11 0h1v1h-1zm11 0h1v1h-1zm11 0h1v1h-1zm11 0h1v1h-1zm11 0h1v1h-1zm11 0h1v1h-1zm11 0h1v1h-1zm11 0h1v1h-1zm11 0h1v1h-1zm11 0h1v1h-1zm11 0h1v1h-1zm11 0h1v1h-1zm11 0h1v1h-1zm11 0h1v1h-1zm11 0h1v1h-1zm11 0h1v1h-1zm11 0h1v1h-1zm11 0h1v1h-1zm11 0h1v1h-1zm11 0h1v1h-1zm11 0h1v1h-1zm11 0h1v1h-1zm11 0h1v1h-1zm11 0h1v1h-1zm11 0h1v1h-1zm12 0h1v1h-1zm11 0h1v1h-1zm11 0h1v1h-1zm11 0h1v1h-1zm11 0h1v1h-1zm11 0h1v1h-1zm11 0h1v1h-1zm11 0h1v1h-1zm11 0h1v1h-1zm11 0h1v1h-1zm11 0h1v1h-1zm11 0h1v1h-1zM189 240h1v1h-1zm11 0h1v1h-1zm11 0h1v1h-1zm11 0h1v1h-1zm11 0h1v1h-1zm11 0h1v1h-1zm11 0h1v1h-1zm11 0h1v1h-1zm11 0h1v1h-1zm11 0h1v1h-1zm11 0h1v1h-1zm11 0h1v1h-1zm11 0h1v1h-1zm11 0h1v1h-1zm11 0h1v1h-1zm11 0h1v1h-1zm11 0h1v1h-1zm11 0h1v1h-1zm11 0h1v1h-1zm11 0h1v1h-1zm11 0h1v1h-1zm11 0h1v1h-1zm11 0h1v1h-1zm11 0h1v1h-1zm11 0h1v1h-1zm11 0h1v1h-1zm11 0h1v1h-1zm11 0h1v1h-1zm11 0h1v1h-1zm12 0h1v1h-1zm11 0h1v1h-1zm11 0h1v1h-1zm11 0h1v1h-1zm11 0h1v1h-1zm11 0h1v1h-1zm11 0h1v1h-1zm11 0h1v1h-1zm11 0h1v1h-1zm11 0h1v1h-1zm11 0h1v1h-1zm11 0h1v1h-1zm11 0h1v1h-1zm11 0h1v1h-1zm11 0h1v1h-1zm11 0h1v1h-1zm11 0h1v1h-1zm11 0h1v1h-1zm11 0h1v1h-1zm11 0h1v1h-1zm11 0h1v1h-1zm11 0h1v1h-1zm11 0h1v1h-1zm11 0h1v1h-1zm11 0h1v1h-1zm11 0h1v1h-1zm11 0h1v1h-1zm11 0h1v1h-1zm11 0h1v1h-1zm11 0h1v1h-1zm11 0h1v1h-1zm11 0h1v1h-1zm11 0h1v1h-1zm11 0h1v1h-1zm11 0h1v1h-1zm11 0h1v1h-1zm11 0h1v1h-1zm11 0h1v1h-1zm11 0h1v1h-1zm11 0h1v1h-1zm11 0h1v1h-1zm11 0h1v1h-1zm11 0h1v1h-1zm11 0h1v1h-1zm11 0h1v1h-1zm11 0h1v1h-1zm11 0h1v1h-1zm11 0h1v1h-1zm11 0h1v1h-1zm11 0h1v1h-1zm11 0h1v1h-1zm11 0h1v1h-1zm11 0h1v1h-1zm11 0h1v1h-1zm11 0h1v1h-1zm11 0h1v1h-1zm11 0h1v1h-1zm11 0h1v1h-1zm12 0h1v1h-1zm11 0h1v1h-1zm11 0h1v1h-1zm11 0h1v1h-1zm11 0h1v1h-1zm11 0h1v1h-1zm11 0h1v1h-1zm11 0h1v1h-1zm11 0h1v1h-1zm11 0h1v1h-1zm11 0h1v1h-1zm11 0h1v1h-1zM189 251h1v1h-1zm11 0h1v1h-1zm11 0h1v1h-1zm11 0h1v1h-1zm11 0h1v1h-1zm11 0h1v1h-1zm11 0h1v1h-1zm11 0h1v1h-1zm11 0h1v1h-1zm11 0h1v1h-1zm11 0h1v1h-1zm11 0h1v1h-1zm11 0h1v1h-1zm11 0h1v1h-1zm11 0h1v1h-1zm11 0h1v1h-1zm11 0h1v1h-1zm11 0h1v1h-1zm11 0h1v1h-1zm11 0h1v1h-1zm11 0h1v1h-1zm11 0h1v1h-1zm11 0h1v1h-1zm11 0h1v1h-1zm11 0h1v1h-1zm11 0h1v1h-1zm11 0h1v1h-1zm11 0h1v1h-1zm11 0h1v1h-1zm12 0h1v1h-1zm11 0h1v1h-1zm11 0h1v1h-1zm11 0h1v1h-1zm11 0h1v1h-1zm11 0h1v1h-1zm11 0h1v1h-1zm11 0h1v1h-1zm11 0h1v1h-1zm11 0h1v1h-1zm11 0h1v1h-1zm11 0h1v1h-1zm11 0h1v1h-1zm11 0h1v1h-1zm11 0h1v1h-1zm11 0h1v1h-1zm11 0h1v1h-1zm11 0h1v1h-1zm11 0h1v1h-1zm11 0h1v1h-1zm11 0h1v1h-1zm11 0h1v1h-1zm11 0h1v1h-1zm11 0h1v1h-1zm11 0h1v1h-1zm11 0h1v1h-1zm11 0h1v1h-1zm11 0h1v1h-1zm11 0h1v1h-1zm11 0h1v1h-1zm11 0h1v1h-1zm11 0h1v1h-1zm11 0h1v1h-1zm11 0h1v1h-1zm11 0h1v1h-1zm11 0h1v1h-1zm11 0h1v1h-1zm11 0h1v1h-1zm11 0h1v1h-1zm11 0h1v1h-1zm11 0h1v1h-1zm11 0h1v1h-1zm11 0h1v1h-1zm11 0h1v1h-1zm11 0h1v1h-1zm11 0h1v1h-1zm11 0h1v1h-1zm11 0h1v1h-1zm11 0h1v1h-1zm11 0h1v1h-1zm11 0h1v1h-1zm11 0h1v1h-1zm11 0h1v1h-1zm11 0h1v1h-1zm11 0h1v1h-1zm11 0h1v1h-1zm11 0h1v1h-1zm11 0h1v1h-1zm12 0h1v1h-1zm11 0h1v1h-1zm11 0h1v1h-1zm11 0h1v1h-1zm11 0h1v1h-1zm11 0h1v1h-1zm11 0h1v1h-1zm11 0h1v1h-1zm11 0h1v1h-1zm11 0h1v1h-1zm11 0h1v1h-1zm11 0h1v1h-1zM189 262h1v1h-1zm11 0h1v1h-1zm11 0h1v1h-1zm11 0h1v1h-1zm11 0h1v1h-1zm11 0h1v1h-1zm11 0h1v1h-1zm11 0h1v1h-1zm11 0h1v1h-1zm11 0h1v1h-1zm11 0h1v1h-1zm11 0h1v1h-1zm11 0h1v1h-1zm11 0h1v1h-1zm11 0h1v1h-1zm11 0h1v1h-1zm11 0h1v1h-1zm11 0h1v1h-1zm11 0h1v1h-1zm11 0h1v1h-1zm11 0h1v1h-1zm11 0h1v1h-1zm11 0h1v1h-1zm11 0h1v1h-1zm11 0h1v1h-1zm11 0h1v1h-1zm11 0h1v1h-1zm11 0h1v1h-1zm11 0h1v1h-1zm12 0h1v1h-1zm11 0h1v1h-1zm11 0h1v1h-1zm11 0h1v1h-1zm11 0h1v1h-1zm11 0h1v1h-1zm11 0h1v1h-1zm11 0h1v1h-1zm11 0h1v1h-1zm11 0h1v1h-1zm11 0h1v1h-1zm11 0h1v1h-1zm11 0h1v1h-1zm11 0h1v1h-1zm11 0h1v1h-1zm11 0h1v1h-1zm11 0h1v1h-1zm11 0h1v1h-1zm11 0h1v1h-1zm11 0h1v1h-1zm11 0h1v1h-1zm11 0h1v1h-1zm11 0h1v1h-1zm11 0h1v1h-1zm11 0h1v1h-1zm11 0h1v1h-1zm11 0h1v1h-1zm11 0h1v1h-1zm11 0h1v1h-1zm11 0h1v1h-1zm11 0h1v1h-1zm11 0h1v1h-1zm11 0h1v1h-1zm11 0h1v1h-1zm11 0h1v1h-1zm11 0h1v1h-1zm11 0h1v1h-1zm11 0h1v1h-1zm11 0h1v1h-1zm11 0h1v1h-1zm11 0h1v1h-1zm11 0h1v1h-1zm11 0h1v1h-1zm11 0h1v1h-1zm11 0h1v1h-1zm11 0h1v1h-1zm11 0h1v1h-1zm11 0h1v1h-1zm11 0h1v1h-1zm11 0h1v1h-1zm11 0h1v1h-1zm11 0h1v1h-1zm11 0h1v1h-1zm11 0h1v1h-1zm11 0h1v1h-1zm11 0h1v1h-1zm11 0h1v1h-1zm11 0h1v1h-1zm12 0h1v1h-1zm11 0h1v1h-1zm11 0h1v1h-1zm11 0h1v1h-1zm11 0h1v1h-1zm11 0h1v1h-1zm11 0h1v1h-1zm11 0h1v1h-1zm11 0h1v1h-1zm11 0h1v1h-1zm11 0h1v1h-1zm11 0h1v1h-1zM189 273h1v1h-1zm11 0h1v1h-1zm11 0h1v1h-1zm11 0h1v1h-1zm11 0h1v1h-1zm11 0h1v1h-1zm11 0h1v1h-1zm11 0h1v1h-1zm11 0h1v1h-1zm11 0h1v1h-1zm11 0h1v1h-1zm11 0h1v1h-1zm11 0h1v1h-1zm11 0h1v1h-1zm11 0h1v1h-1zm11 0h1v1h-1zm11 0h1v1h-1zm11 0h1v1h-1zm11 0h1v1h-1zm11 0h1v1h-1zm11 0h1v1h-1zm11 0h1v1h-1zm11 0h1v1h-1zm11 0h1v1h-1zm11 0h1v1h-1zm11 0h1v1h-1zm11 0h1v1h-1zm11 0h1v1h-1zm11 0h1v1h-1zm12 0h1v1h-1zm11 0h1v1h-1zm11 0h1v1h-1zm11 0h1v1h-1zm11 0h1v1h-1zm11 0h1v1h-1zm11 0h1v1h-1zm11 0h1v1h-1zm11 0h1v1h-1zm11 0h1v1h-1zm11 0h1v1h-1zm11 0h1v1h-1zm11 0h1v1h-1zm11 0h1v1h-1zm11 0h1v1h-1zm11 0h1v1h-1zm11 0h1v1h-1zm11 0h1v1h-1zm11 0h1v1h-1zm11 0h1v1h-1zm11 0h1v1h-1zm11 0h1v1h-1zm11 0h1v1h-1zm11 0h1v1h-1zm11 0h1v1h-1zm11 0h1v1h-1zm11 0h1v1h-1zm11 0h1v1h-1zm11 0h1v1h-1zm11 0h1v1h-1zm11 0h1v1h-1zm11 0h1v1h-1zm11 0h1v1h-1zm11 0h1v1h-1zm11 0h1v1h-1zm11 0h1v1h-1zm11 0h1v1h-1zm11 0h1v1h-1zm11 0h1v1h-1zm11 0h1v1h-1zm11 0h1v1h-1zm11 0h1v1h-1zm11 0h1v1h-1zm11 0h1v1h-1zm11 0h1v1h-1zm11 0h1v1h-1zm11 0h1v1h-1zm11 0h1v1h-1zm11 0h1v1h-1zm11 0h1v1h-1zm11 0h1v1h-1zm11 0h1v1h-1zm11 0h1v1h-1zm11 0h1v1h-1zm11 0h1v1h-1zm11 0h1v1h-1zm11 0h1v1h-1zm11 0h1v1h-1zm12 0h1v1h-1zm11 0h1v1h-1zm11 0h1v1h-1zm11 0h1v1h-1zm11 0h1v1h-1zm11 0h1v1h-1zm11 0h1v1h-1zm11 0h1v1h-1zm11 0h1v1h-1zm11 0h1v1h-1zm11 0h1v1h-1zm11 0h1v1h-1zM189 284h1v1h-1zm11 0h1v1h-1zm11 0h1v1h-1zm11 0h1v1h-1zm11 0h1v1h-1zm11 0h1v1h-1zm11 0h1v1h-1zm11 0h1v1h-1zm11 0h1v1h-1zm11 0h1v1h-1zm11 0h1v1h-1zm11 0h1v1h-1zm11 0h1v1h-1zm11 0h1v1h-1zm11 0h1v1h-1zm11 0h1v1h-1zm11 0h1v1h-1zm11 0h1v1h-1zm11 0h1v1h-1zm11 0h1v1h-1zm11 0h1v1h-1zm11 0h1v1h-1zm11 0h1v1h-1zm11 0h1v1h-1zm11 0h1v1h-1zm11 0h1v1h-1zm11 0h1v1h-1zm11 0h1v1h-1zm11 0h1v1h-1zm12 0h1v1h-1zm11 0h1v1h-1zm11 0h1v1h-1zm11 0h1v1h-1zm11 0h1v1h-1zm11 0h1v1h-1zm11 0h1v1h-1zm11 0h1v1h-1zm11 0h1v1h-1zm11 0h1v1h-1zm11 0h1v1h-1zm11 0h1v1h-1zm11 0h1v1h-1zm11 0h1v1h-1zm11 0h1v1h-1zm11 0h1v1h-1zm11 0h1v1h-1zm11 0h1v1h-1zm11 0h1v1h-1zm11 0h1v1h-1zm11 0h1v1h-1zm11 0h1v1h-1zm11 0h1v1h-1zm11 0h1v1h-1zm11 0h1v1h-1zm11 0h1v1h-1zm11 0h1v1h-1zm11 0h1v1h-1zm11 0h1v1h-1zm11 0h1v1h-1zm11 0h1v1h-1zm11 0h1v1h-1zm11 0h1v1h-1zm11 0h1v1h-1zm11 0h1v1h-1zm11 0h1v1h-1zm11 0h1v1h-1zm11 0h1v1h-1zm11 0h1v1h-1zm11 0h1v1h-1zm11 0h1v1h-1zm11 0h1v1h-1zm11 0h1v1h-1zm11 0h1v1h-1zm11 0h1v1h-1zm11 0h1v1h-1zm11 0h1v1h-1zm11 0h1v1h-1zm11 0h1v1h-1zm11 0h1v1h-1zm11 0h1v1h-1zm11 0h1v1h-1zm11 0h1v1h-1zm11 0h1v1h-1zm11 0h1v1h-1zm11 0h1v1h-1zm11 0h1v1h-1zm11 0h1v1h-1zm12 0h1v1h-1zm11 0h1v1h-1zm11 0h1v1h-1zm11 0h1v1h-1zm11 0h1v1h-1zm11 0h1v1h-1zm11 0h1v1h-1zm11 0h1v1h-1zm11 0h1v1h-1zm11 0h1v1h-1zm11 0h1v1h-1zm11 0h1v1h-1zM189 295h1v1h-1zm11 0h1v1h-1zm11 0h1v1h-1zm11 0h1v1h-1zm11 0h1v1h-1zm11 0h1v1h-1zm11 0h1v1h-1zm11 0h1v1h-1zm11 0h1v1h-1zm11 0h1v1h-1zm11 0h1v1h-1zm11 0h1v1h-1zm11 0h1v1h-1zm11 0h1v1h-1zm11 0h1v1h-1zm11 0h1v1h-1zm11 0h1v1h-1zm11 0h1v1h-1zm11 0h1v1h-1zm11 0h1v1h-1zm11 0h1v1h-1zm11 0h1v1h-1zm11 0h1v1h-1zm11 0h1v1h-1zm11 0h1v1h-1zm11 0h1v1h-1zm11 0h1v1h-1zm11 0h1v1h-1zm11 0h1v1h-1zm12 0h1v1h-1zm11 0h1v1h-1zm11 0h1v1h-1zm11 0h1v1h-1zm11 0h1v1h-1zm11 0h1v1h-1zm11 0h1v1h-1zm11 0h1v1h-1zm11 0h1v1h-1zm11 0h1v1h-1zm11 0h1v1h-1zm11 0h1v1h-1zm11 0h1v1h-1zm11 0h1v1h-1zm11 0h1v1h-1zm11 0h1v1h-1zm11 0h1v1h-1zm11 0h1v1h-1zm11 0h1v1h-1zm11 0h1v1h-1zm11 0h1v1h-1zm11 0h1v1h-1zm11 0h1v1h-1zm11 0h1v1h-1zm11 0h1v1h-1zm11 0h1v1h-1zm11 0h1v1h-1zm11 0h1v1h-1zm11 0h1v1h-1zm11 0h1v1h-1zm11 0h1v1h-1zm11 0h1v1h-1zm11 0h1v1h-1zm11 0h1v1h-1zm11 0h1v1h-1zm11 0h1v1h-1zm11 0h1v1h-1zm11 0h1v1h-1zm11 0h1v1h-1zm11 0h1v1h-1zm11 0h1v1h-1zm11 0h1v1h-1zm11 0h1v1h-1zm11 0h1v1h-1zm11 0h1v1h-1zm11 0h1v1h-1zm11 0h1v1h-1zm11 0h1v1h-1zm11 0h1v1h-1zm11 0h1v1h-1zm11 0h1v1h-1zm11 0h1v1h-1zm11 0h1v1h-1zm11 0h1v1h-1zm11 0h1v1h-1zm11 0h1v1h-1zm11 0h1v1h-1zm11 0h1v1h-1zm12 0h1v1h-1zm11 0h1v1h-1zm11 0h1v1h-1zm11 0h1v1h-1zm11 0h1v1h-1zm11 0h1v1h-1zm11 0h1v1h-1zm11 0h1v1h-1zm11 0h1v1h-1zm11 0h1v1h-1zm11 0h1v1h-1zm11 0h1v1h-1zM189 306h1v1h-1zm11 0h1v1h-1zm11 0h1v1h-1zm11 0h1v1h-1zm11 0h1v1h-1zm11 0h1v1h-1zm11 0h1v1h-1zm11 0h1v1h-1zm11 0h1v1h-1zm11 0h1v1h-1zm11 0h1v1h-1zm11 0h1v1h-1zm11 0h1v1h-1zm11 0h1v1h-1zm11 0h1v1h-1zm11 0h1v1h-1zm11 0h1v1h-1zm11 0h1v1h-1zm11 0h1v1h-1zm11 0h1v1h-1zm11 0h1v1h-1zm11 0h1v1h-1zm11 0h1v1h-1zm11 0h1v1h-1zm11 0h1v1h-1zm11 0h1v1h-1zm11 0h1v1h-1zm11 0h1v1h-1zm11 0h1v1h-1zm12 0h1v1h-1zm11 0h1v1h-1zm11 0h1v1h-1zm11 0h1v1h-1zm11 0h1v1h-1zm11 0h1v1h-1zm11 0h1v1h-1zm11 0h1v1h-1zm11 0h1v1h-1zm11 0h1v1h-1zm11 0h1v1h-1zm11 0h1v1h-1zm11 0h1v1h-1zm11 0h1v1h-1zm11 0h1v1h-1zm11 0h1v1h-1zm11 0h1v1h-1zm11 0h1v1h-1zm11 0h1v1h-1zm11 0h1v1h-1zm11 0h1v1h-1zm11 0h1v1h-1zm11 0h1v1h-1zm11 0h1v1h-1zm11 0h1v1h-1zm11 0h1v1h-1zm11 0h1v1h-1zm11 0h1v1h-1zm11 0h1v1h-1zm11 0h1v1h-1zm11 0h1v1h-1zm11 0h1v1h-1zm11 0h1v1h-1zm11 0h1v1h-1zm11 0h1v1h-1zm11 0h1v1h-1zm11 0h1v1h-1zm11 0h1v1h-1zm11 0h1v1h-1zm11 0h1v1h-1zm11 0h1v1h-1zm11 0h1v1h-1zm11 0h1v1h-1zm11 0h1v1h-1zm11 0h1v1h-1zm11 0h1v1h-1zm11 0h1v1h-1zm11 0h1v1h-1zm11 0h1v1h-1zm11 0h1v1h-1zm11 0h1v1h-1zm11 0h1v1h-1zm11 0h1v1h-1zm11 0h1v1h-1zm11 0h1v1h-1zm11 0h1v1h-1zm11 0h1v1h-1zm11 0h1v1h-1zm12 0h1v1h-1zm11 0h1v1h-1zm11 0h1v1h-1zm11 0h1v1h-1zm11 0h1v1h-1zm11 0h1v1h-1zm11 0h1v1h-1zm11 0h1v1h-1zm11 0h1v1h-1zm11 0h1v1h-1zm11 0h1v1h-1zm11 0h1v1h-1zM189 317h1v1h-1zm11 0h1v1h-1zm11 0h1v1h-1zm11 0h1v1h-1zm11 0h1v1h-1zm11 0h1v1h-1zm11 0h1v1h-1zm11 0h1v1h-1zm11 0h1v1h-1zm11 0h1v1h-1zm11 0h1v1h-1zm11 0h1v1h-1zm11 0h1v1h-1zm11 0h1v1h-1zm11 0h1v1h-1zm11 0h1v1h-1zm11 0h1v1h-1zm11 0h1v1h-1zm11 0h1v1h-1zm11 0h1v1h-1zm11 0h1v1h-1zm11 0h1v1h-1zm11 0h1v1h-1zm11 0h1v1h-1zm11 0h1v1h-1zm11 0h1v1h-1zm11 0h1v1h-1zm11 0h1v1h-1zm11 0h1v1h-1zm12 0h1v1h-1zm11 0h1v1h-1zm11 0h1v1h-1zm11 0h1v1h-1zm11 0h1v1h-1zm11 0h1v1h-1zm11 0h1v1h-1zm11 0h1v1h-1zm11 0h1v1h-1zm11 0h1v1h-1zm11 0h1v1h-1zm11 0h1v1h-1zm11 0h1v1h-1zm11 0h1v1h-1zm11 0h1v1h-1zm11 0h1v1h-1zm11 0h1v1h-1zm11 0h1v1h-1zm11 0h1v1h-1zm11 0h1v1h-1zm11 0h1v1h-1zm11 0h1v1h-1zm11 0h1v1h-1zm11 0h1v1h-1zm11 0h1v1h-1zm11 0h1v1h-1zm11 0h1v1h-1zm11 0h1v1h-1zm11 0h1v1h-1zm11 0h1v1h-1zm11 0h1v1h-1zm11 0h1v1h-1zm11 0h1v1h-1zm11 0h1v1h-1zm11 0h1v1h-1zm11 0h1v1h-1zm11 0h1v1h-1zm11 0h1v1h-1zm11 0h1v1h-1zm11 0h1v1h-1zm11 0h1v1h-1zm11 0h1v1h-1zm11 0h1v1h-1zm11 0h1v1h-1zm11 0h1v1h-1zm11 0h1v1h-1zm11 0h1v1h-1zm11 0h1v1h-1zm11 0h1v1h-1zm11 0h1v1h-1zm11 0h1v1h-1zm11 0h1v1h-1zm11 0h1v1h-1zm11 0h1v1h-1zm11 0h1v1h-1zm11 0h1v1h-1zm11 0h1v1h-1zm11 0h1v1h-1zm12 0h1v1h-1zm11 0h1v1h-1zm11 0h1v1h-1zm11 0h1v1h-1zm11 0h1v1h-1zm11 0h1v1h-1zm11 0h1v1h-1zm11 0h1v1h-1zm11 0h1v1h-1zm11 0h1v1h-1zm11 0h1v1h-1zm11 0h1v1h-1zM189 328h1v1h-1zm11 0h1v1h-1zm11 0h1v1h-1zm11 0h1v1h-1zm11 0h1v1h-1zm11 0h1v1h-1zm11 0h1v1h-1zm11 0h1v1h-1zm11 0h1v1h-1zm11 0h1v1h-1zm11 0h1v1h-1zm11 0h1v1h-1zm11 0h1v1h-1zm11 0h1v1h-1zm11 0h1v1h-1zm11 0h1v1h-1zm11 0h1v1h-1zm11 0h1v1h-1zm11 0h1v1h-1zm11 0h1v1h-1zm11 0h1v1h-1zm11 0h1v1h-1zm11 0h1v1h-1zm11 0h1v1h-1zm11 0h1v1h-1zm11 0h1v1h-1zm11 0h1v1h-1zm11 0h1v1h-1zm11 0h1v1h-1zm12 0h1v1h-1zm11 0h1v1h-1zm11 0h1v1h-1zm11 0h1v1h-1zm11 0h1v1h-1zm11 0h1v1h-1zm11 0h1v1h-1zm11 0h1v1h-1zm11 0h1v1h-1zm11 0h1v1h-1zm11 0h1v1h-1zm11 0h1v1h-1zm11 0h1v1h-1zm11 0h1v1h-1zm11 0h1v1h-1zm11 0h1v1h-1zm11 0h1v1h-1zm11 0h1v1h-1zm11 0h1v1h-1zm11 0h1v1h-1zm11 0h1v1h-1zm11 0h1v1h-1zm11 0h1v1h-1zm11 0h1v1h-1zm11 0h1v1h-1zm11 0h1v1h-1zm11 0h1v1h-1zm11 0h1v1h-1zm11 0h1v1h-1zm11 0h1v1h-1zm11 0h1v1h-1zm11 0h1v1h-1zm11 0h1v1h-1zm11 0h1v1h-1zm11 0h1v1h-1zm11 0h1v1h-1zm11 0h1v1h-1zm11 0h1v1h-1zm11 0h1v1h-1zm11 0h1v1h-1zm11 0h1v1h-1zm11 0h1v1h-1zm11 0h1v1h-1zm11 0h1v1h-1zm11 0h1v1h-1zm11 0h1v1h-1zm11 0h1v1h-1zm11 0h1v1h-1zm11 0h1v1h-1zm11 0h1v1h-1zm11 0h1v1h-1zm11 0h1v1h-1zm11 0h1v1h-1zm11 0h1v1h-1zm11 0h1v1h-1zm11 0h1v1h-1zm11 0h1v1h-1zm11 0h1v1h-1zm12 0h1v1h-1zm11 0h1v1h-1zm11 0h1v1h-1zm11 0h1v1h-1zm11 0h1v1h-1zm11 0h1v1h-1zm11 0h1v1h-1zm11 0h1v1h-1zm11 0h1v1h-1zm11 0h1v1h-1zm11 0h1v1h-1zm11 0h1v1h-1zM189 339h1v1h-1zm11 0h1v1h-1zm11 0h1v1h-1zm11 0h1v1h-1zm11 0h1v1h-1zm11 0h1v1h-1zm11 0h1v1h-1zm11 0h1v1h-1zm11 0h1v1h-1zm11 0h1v1h-1zm11 0h1v1h-1zm11 0h1v1h-1zm11 0h1v1h-1zm11 0h1v1h-1zm11 0h1v1h-1zm11 0h1v1h-1zm11 0h1v1h-1zm11 0h1v1h-1zm11 0h1v1h-1zm11 0h1v1h-1zm11 0h1v1h-1zm11 0h1v1h-1zm11 0h1v1h-1zm11 0h1v1h-1zm11 0h1v1h-1zm11 0h1v1h-1zm11 0h1v1h-1zm11 0h1v1h-1zm11 0h1v1h-1zm12 0h1v1h-1zm11 0h1v1h-1zm11 0h1v1h-1zm11 0h1v1h-1zm11 0h1v1h-1zm11 0h1v1h-1zm11 0h1v1h-1zm11 0h1v1h-1zm11 0h1v1h-1zm11 0h1v1h-1zm11 0h1v1h-1zm11 0h1v1h-1zm11 0h1v1h-1zm11 0h1v1h-1zm11 0h1v1h-1zm11 0h1v1h-1zm11 0h1v1h-1zm11 0h1v1h-1zm11 0h1v1h-1zm11 0h1v1h-1zm11 0h1v1h-1zm11 0h1v1h-1zm11 0h1v1h-1zm11 0h1v1h-1zm11 0h1v1h-1zm11 0h1v1h-1zm11 0h1v1h-1zm11 0h1v1h-1zm11 0h1v1h-1zm11 0h1v1h-1zm11 0h1v1h-1zm11 0h1v1h-1zm11 0h1v1h-1zm11 0h1v1h-1zm11 0h1v1h-1zm11 0h1v1h-1zm11 0h1v1h-1zm11 0h1v1h-1zm11 0h1v1h-1zm11 0h1v1h-1zm11 0h1v1h-1zm11 0h1v1h-1zm11 0h1v1h-1zm11 0h1v1h-1zm11 0h1v1h-1zm11 0h1v1h-1zm11 0h1v1h-1zm11 0h1v1h-1zm11 0h1v1h-1zm11 0h1v1h-1zm11 0h1v1h-1zm11 0h1v1h-1zm11 0h1v1h-1zm11 0h1v1h-1zm11 0h1v1h-1zm11 0h1v1h-1zm11 0h1v1h-1zm11 0h1v1h-1zm12 0h1v1h-1zm11 0h1v1h-1zm11 0h1v1h-1zm11 0h1v1h-1zm11 0h1v1h-1zm11 0h1v1h-1zm11 0h1v1h-1zm11 0h1v1h-1zm11 0h1v1h-1zm11 0h1v1h-1zm11 0h1v1h-1zm11 0h1v1h-1zM189 350h1v1h-1zm11 0h1v1h-1zm11 0h1v1h-1zm11 0h1v1h-1zm11 0h1v1h-1zm11 0h1v1h-1zm11 0h1v1h-1zm11 0h1v1h-1zm11 0h1v1h-1zm11 0h1v1h-1zm11 0h1v1h-1zm11 0h1v1h-1zm11 0h1v1h-1zm11 0h1v1h-1zm11 0h1v1h-1zm11 0h1v1h-1zm11 0h1v1h-1zm11 0h1v1h-1zm11 0h1v1h-1zm11 0h1v1h-1zm11 0h1v1h-1zm11 0h1v1h-1zm11 0h1v1h-1zm11 0h1v1h-1zm11 0h1v1h-1zm11 0h1v1h-1zm11 0h1v1h-1zm11 0h1v1h-1zm11 0h1v1h-1zm12 0h1v1h-1zm11 0h1v1h-1zm11 0h1v1h-1zm11 0h1v1h-1zm11 0h1v1h-1zm11 0h1v1h-1zm11 0h1v1h-1zm11 0h1v1h-1zm11 0h1v1h-1zm11 0h1v1h-1zm11 0h1v1h-1zm11 0h1v1h-1zm11 0h1v1h-1zm11 0h1v1h-1zm11 0h1v1h-1zm11 0h1v1h-1zm11 0h1v1h-1zm11 0h1v1h-1zm11 0h1v1h-1zm11 0h1v1h-1zm11 0h1v1h-1zm11 0h1v1h-1zm11 0h1v1h-1zm11 0h1v1h-1zm11 0h1v1h-1zm11 0h1v1h-1zm11 0h1v1h-1zm11 0h1v1h-1zm11 0h1v1h-1zm11 0h1v1h-1zm11 0h1v1h-1zm11 0h1v1h-1zm11 0h1v1h-1zm11 0h1v1h-1zm11 0h1v1h-1zm11 0h1v1h-1zm11 0h1v1h-1zm11 0h1v1h-1zm11 0h1v1h-1zm11 0h1v1h-1zm11 0h1v1h-1zm11 0h1v1h-1zm11 0h1v1h-1zm11 0h1v1h-1zm11 0h1v1h-1zm11 0h1v1h-1zm11 0h1v1h-1zm11 0h1v1h-1zm11 0h1v1h-1zm11 0h1v1h-1zm11 0h1v1h-1zm11 0h1v1h-1zm11 0h1v1h-1zm11 0h1v1h-1zm11 0h1v1h-1zm11 0h1v1h-1zm11 0h1v1h-1zm11 0h1v1h-1zm12 0h1v1h-1zm11 0h1v1h-1zm11 0h1v1h-1zm11 0h1v1h-1zm11 0h1v1h-1zm11 0h1v1h-1zm11 0h1v1h-1zm11 0h1v1h-1zm11 0h1v1h-1zm11 0h1v1h-1zm11 0h1v1h-1zm11 0h1v1h-1zM189 361h1v1h-1zm11 0h1v1h-1zm11 0h1v1h-1zm11 0h1v1h-1zm11 0h1v1h-1zm11 0h1v1h-1zm11 0h1v1h-1zm11 0h1v1h-1zm11 0h1v1h-1zm11 0h1v1h-1zm11 0h1v1h-1zm11 0h1v1h-1zm11 0h1v1h-1zm11 0h1v1h-1zm11 0h1v1h-1zm11 0h1v1h-1zm11 0h1v1h-1zm11 0h1v1h-1zm11 0h1v1h-1zm11 0h1v1h-1zm11 0h1v1h-1zm11 0h1v1h-1zm11 0h1v1h-1zm11 0h1v1h-1zm11 0h1v1h-1zm11 0h1v1h-1zm11 0h1v1h-1zm11 0h1v1h-1zm11 0h1v1h-1zm12 0h1v1h-1zm11 0h1v1h-1zm11 0h1v1h-1zm11 0h1v1h-1zm11 0h1v1h-1zm11 0h1v1h-1zm11 0h1v1h-1zm11 0h1v1h-1zm11 0h1v1h-1zm11 0h1v1h-1zm11 0h1v1h-1zm11 0h1v1h-1zm11 0h1v1h-1zm11 0h1v1h-1zm11 0h1v1h-1zm11 0h1v1h-1zm11 0h1v1h-1zm11 0h1v1h-1zm11 0h1v1h-1zm11 0h1v1h-1zm11 0h1v1h-1zm11 0h1v1h-1zm11 0h1v1h-1zm11 0h1v1h-1zm11 0h1v1h-1zm11 0h1v1h-1zm11 0h1v1h-1zm11 0h1v1h-1zm11 0h1v1h-1zm11 0h1v1h-1zm11 0h1v1h-1zm11 0h1v1h-1zm11 0h1v1h-1zm11 0h1v1h-1zm11 0h1v1h-1zm11 0h1v1h-1zm11 0h1v1h-1zm11 0h1v1h-1zm11 0h1v1h-1zm11 0h1v1h-1zm11 0h1v1h-1zm11 0h1v1h-1zm11 0h1v1h-1zm11 0h1v1h-1zm11 0h1v1h-1zm11 0h1v1h-1zm11 0h1v1h-1zm11 0h1v1h-1zm11 0h1v1h-1zm11 0h1v1h-1zm11 0h1v1h-1zm11 0h1v1h-1zm11 0h1v1h-1zm11 0h1v1h-1zm11 0h1v1h-1zm11 0h1v1h-1zm11 0h1v1h-1zm11 0h1v1h-1zm12 0h1v1h-1zm11 0h1v1h-1zm11 0h1v1h-1zm11 0h1v1h-1zm11 0h1v1h-1zm11 0h1v1h-1zm11 0h1v1h-1zm11 0h1v1h-1zm11 0h1v1h-1zm11 0h1v1h-1zm11 0h1v1h-1zm11 0h1v1h-1zM189 372h1v1h-1zm11 0h1v1h-1zm11 0h1v1h-1zm11 0h1v1h-1zm11 0h1v1h-1zm11 0h1v1h-1zm11 0h1v1h-1zm11 0h1v1h-1zm11 0h1v1h-1zm11 0h1v1h-1zm11 0h1v1h-1zm11 0h1v1h-1zm11 0h1v1h-1zm11 0h1v1h-1zm11 0h1v1h-1zm11 0h1v1h-1zm11 0h1v1h-1zm11 0h1v1h-1zm11 0h1v1h-1zm11 0h1v1h-1zm11 0h1v1h-1zm11 0h1v1h-1zm11 0h1v1h-1zm11 0h1v1h-1zm11 0h1v1h-1zm11 0h1v1h-1zm11 0h1v1h-1zm11 0h1v1h-1zm11 0h1v1h-1zm12 0h1v1h-1zm11 0h1v1h-1zm11 0h1v1h-1zm11 0h1v1h-1zm11 0h1v1h-1zm11 0h1v1h-1zm11 0h1v1h-1zm11 0h1v1h-1zm11 0h1v1h-1zm11 0h1v1h-1zm11 0h1v1h-1zm11 0h1v1h-1zm11 0h1v1h-1zm11 0h1v1h-1zm11 0h1v1h-1zm11 0h1v1h-1zm11 0h1v1h-1zm11 0h1v1h-1zm11 0h1v1h-1zm11 0h1v1h-1zm11 0h1v1h-1zm11 0h1v1h-1zm11 0h1v1h-1zm11 0h1v1h-1zm11 0h1v1h-1zm11 0h1v1h-1zm11 0h1v1h-1zm11 0h1v1h-1zm11 0h1v1h-1zm11 0h1v1h-1zm11 0h1v1h-1zm11 0h1v1h-1zm11 0h1v1h-1zm11 0h1v1h-1zm11 0h1v1h-1zm11 0h1v1h-1zm11 0h1v1h-1zm11 0h1v1h-1zm11 0h1v1h-1zm11 0h1v1h-1zm11 0h1v1h-1zm11 0h1v1h-1zm11 0h1v1h-1zm11 0h1v1h-1zm11 0h1v1h-1zm11 0h1v1h-1zm11 0h1v1h-1zm11 0h1v1h-1zm11 0h1v1h-1zm11 0h1v1h-1zm11 0h1v1h-1zm11 0h1v1h-1zm11 0h1v1h-1zm11 0h1v1h-1zm11 0h1v1h-1zm11 0h1v1h-1zm11 0h1v1h-1zm11 0h1v1h-1zm12 0h1v1h-1zm11 0h1v1h-1zm11 0h1v1h-1zm11 0h1v1h-1zm11 0h1v1h-1zm11 0h1v1h-1zm11 0h1v1h-1zm11 0h1v1h-1zm11 0h1v1h-1zm11 0h1v1h-1zm11 0h1v1h-1zm11 0h1v1h-1zM189 383h1v1h-1zm11 0h1v1h-1zm11 0h1v1h-1zm11 0h1v1h-1zm11 0h1v1h-1zm11 0h1v1h-1zm11 0h1v1h-1zm11 0h1v1h-1zm11 0h1v1h-1zm11 0h1v1h-1zm11 0h1v1h-1zm11 0h1v1h-1zm11 0h1v1h-1zm11 0h1v1h-1zm11 0h1v1h-1zm11 0h1v1h-1zm11 0h1v1h-1zm11 0h1v1h-1zm11 0h1v1h-1zm11 0h1v1h-1zm11 0h1v1h-1zm11 0h1v1h-1zm11 0h1v1h-1zm11 0h1v1h-1zm11 0h1v1h-1zm11 0h1v1h-1zm11 0h1v1h-1zm11 0h1v1h-1zm11 0h1v1h-1zm12 0h1v1h-1zm11 0h1v1h-1zm11 0h1v1h-1zm11 0h1v1h-1zm11 0h1v1h-1zm11 0h1v1h-1zm11 0h1v1h-1zm11 0h1v1h-1zm11 0h1v1h-1zm11 0h1v1h-1zm11 0h1v1h-1zm11 0h1v1h-1zm11 0h1v1h-1zm11 0h1v1h-1zm11 0h1v1h-1zm11 0h1v1h-1zm11 0h1v1h-1zm11 0h1v1h-1zm11 0h1v1h-1zm11 0h1v1h-1zm11 0h1v1h-1zm11 0h1v1h-1zm11 0h1v1h-1zm11 0h1v1h-1zm11 0h1v1h-1zm11 0h1v1h-1zm11 0h1v1h-1zm11 0h1v1h-1zm11 0h1v1h-1zm11 0h1v1h-1zm11 0h1v1h-1zm11 0h1v1h-1zm11 0h1v1h-1zm11 0h1v1h-1zm11 0h1v1h-1zm11 0h1v1h-1zm11 0h1v1h-1zm11 0h1v1h-1zm11 0h1v1h-1zm11 0h1v1h-1zm11 0h1v1h-1zm11 0h1v1h-1zm11 0h1v1h-1zm11 0h1v1h-1zm11 0h1v1h-1zm11 0h1v1h-1zm11 0h1v1h-1zm11 0h1v1h-1zm11 0h1v1h-1zm11 0h1v1h-1zm11 0h1v1h-1zm11 0h1v1h-1zm11 0h1v1h-1zm11 0h1v1h-1zm11 0h1v1h-1zm11 0h1v1h-1zm11 0h1v1h-1zm11 0h1v1h-1zm12 0h1v1h-1zm11 0h1v1h-1zm11 0h1v1h-1zm11 0h1v1h-1zm11 0h1v1h-1zm11 0h1v1h-1zm11 0h1v1h-1zm11 0h1v1h-1zm11 0h1v1h-1zm11 0h1v1h-1zm11 0h1v1h-1zm11 0h1v1h-1zM189 394h1v1h-1zm11 0h1v1h-1zm11 0h1v1h-1zm11 0h1v1h-1zm11 0h1v1h-1zm11 0h1v1h-1zm11 0h1v1h-1zm11 0h1v1h-1zm11 0h1v1h-1zm11 0h1v1h-1zm11 0h1v1h-1zm11 0h1v1h-1zm11 0h1v1h-1zm11 0h1v1h-1zm11 0h1v1h-1zm11 0h1v1h-1zm11 0h1v1h-1zm11 0h1v1h-1zm11 0h1v1h-1zm11 0h1v1h-1zm11 0h1v1h-1zm11 0h1v1h-1zm11 0h1v1h-1zm11 0h1v1h-1zm11 0h1v1h-1zm11 0h1v1h-1zm11 0h1v1h-1zm11 0h1v1h-1zm11 0h1v1h-1zm12 0h1v1h-1zm11 0h1v1h-1zm11 0h1v1h-1zm11 0h1v1h-1zm11 0h1v1h-1zm11 0h1v1h-1zm11 0h1v1h-1zm11 0h1v1h-1zm11 0h1v1h-1zm11 0h1v1h-1zm11 0h1v1h-1zm11 0h1v1h-1zm11 0h1v1h-1zm11 0h1v1h-1zm11 0h1v1h-1zm11 0h1v1h-1zm11 0h1v1h-1zm11 0h1v1h-1zm11 0h1v1h-1zm11 0h1v1h-1zm11 0h1v1h-1zm11 0h1v1h-1zm11 0h1v1h-1zm11 0h1v1h-1zm11 0h1v1h-1zm11 0h1v1h-1zm11 0h1v1h-1zm11 0h1v1h-1zm11 0h1v1h-1zm11 0h1v1h-1zm11 0h1v1h-1zm11 0h1v1h-1zm11 0h1v1h-1zm11 0h1v1h-1zm11 0h1v1h-1zm11 0h1v1h-1zm11 0h1v1h-1zm11 0h1v1h-1zm11 0h1v1h-1zm11 0h1v1h-1zm11 0h1v1h-1zm11 0h1v1h-1zm11 0h1v1h-1zm11 0h1v1h-1zm11 0h1v1h-1zm11 0h1v1h-1zm11 0h1v1h-1zm11 0h1v1h-1zm11 0h1v1h-1zm11 0h1v1h-1zm11 0h1v1h-1zm11 0h1v1h-1zm11 0h1v1h-1zm11 0h1v1h-1zm11 0h1v1h-1zm11 0h1v1h-1zm11 0h1v1h-1zm11 0h1v1h-1zm12 0h1v1h-1zm11 0h1v1h-1zm11 0h1v1h-1zm11 0h1v1h-1zm11 0h1v1h-1zm11 0h1v1h-1zm11 0h1v1h-1zm11 0h1v1h-1zm11 0h1v1h-1zm11 0h1v1h-1zm11 0h1v1h-1zm11 0h1v1h-1zM189 405h1v1h-1zm11 0h1v1h-1zm11 0h1v1h-1zm11 0h1v1h-1zm11 0h1v1h-1zm11 0h1v1h-1zm11 0h1v1h-1zm11 0h1v1h-1zm11 0h1v1h-1zm11 0h1v1h-1zm11 0h1v1h-1zm11 0h1v1h-1zm11 0h1v1h-1zm11 0h1v1h-1zm11 0h1v1h-1zm11 0h1v1h-1zm11 0h1v1h-1zm11 0h1v1h-1zm11 0h1v1h-1zm11 0h1v1h-1zm11 0h1v1h-1zm11 0h1v1h-1zm11 0h1v1h-1zm11 0h1v1h-1zm11 0h1v1h-1zm11 0h1v1h-1zm11 0h1v1h-1zm11 0h1v1h-1zm11 0h1v1h-1zm12 0h1v1h-1zm11 0h1v1h-1zm11 0h1v1h-1zm11 0h1v1h-1zm11 0h1v1h-1zm11 0h1v1h-1zm11 0h1v1h-1zm11 0h1v1h-1zm11 0h1v1h-1zm11 0h1v1h-1zm11 0h1v1h-1zm11 0h1v1h-1zm11 0h1v1h-1zm11 0h1v1h-1zm11 0h1v1h-1zm11 0h1v1h-1zm11 0h1v1h-1zm11 0h1v1h-1zm11 0h1v1h-1zm11 0h1v1h-1zm11 0h1v1h-1zm11 0h1v1h-1zm11 0h1v1h-1zm11 0h1v1h-1zm11 0h1v1h-1zm11 0h1v1h-1zm11 0h1v1h-1zm11 0h1v1h-1zm11 0h1v1h-1zm11 0h1v1h-1zm11 0h1v1h-1zm11 0h1v1h-1zm11 0h1v1h-1zm11 0h1v1h-1zm11 0h1v1h-1zm11 0h1v1h-1zm11 0h1v1h-1zm11 0h1v1h-1zm11 0h1v1h-1zm11 0h1v1h-1zm11 0h1v1h-1zm11 0h1v1h-1zm11 0h1v1h-1zm11 0h1v1h-1zm11 0h1v1h-1zm11 0h1v1h-1zm11 0h1v1h-1zm11 0h1v1h-1zm11 0h1v1h-1zm11 0h1v1h-1zm11 0h1v1h-1zm11 0h1v1h-1zm11 0h1v1h-1zm11 0h1v1h-1zm11 0h1v1h-1zm11 0h1v1h-1zm11 0h1v1h-1zm11 0h1v1h-1zm12 0h1v1h-1zm11 0h1v1h-1zm11 0h1v1h-1zm11 0h1v1h-1zm11 0h1v1h-1zm11 0h1v1h-1zm11 0h1v1h-1zm11 0h1v1h-1zm11 0h1v1h-1zm11 0h1v1h-1zm11 0h1v1h-1zm11 0h1v1h-1zM189 416h1v1h-1zm11 0h1v1h-1zm11 0h1v1h-1zm11 0h1v1h-1zm11 0h1v1h-1zm11 0h1v1h-1zm11 0h1v1h-1zm11 0h1v1h-1zm11 0h1v1h-1zm11 0h1v1h-1zm11 0h1v1h-1zm11 0h1v1h-1zm11 0h1v1h-1zm11 0h1v1h-1zm11 0h1v1h-1zm11 0h1v1h-1zm11 0h1v1h-1zm11 0h1v1h-1zm11 0h1v1h-1zm11 0h1v1h-1zm11 0h1v1h-1zm11 0h1v1h-1zm11 0h1v1h-1zm11 0h1v1h-1zm11 0h1v1h-1zm11 0h1v1h-1zm11 0h1v1h-1zm11 0h1v1h-1zm11 0h1v1h-1zm12 0h1v1h-1zm11 0h1v1h-1zm11 0h1v1h-1zm11 0h1v1h-1zm11 0h1v1h-1zm11 0h1v1h-1zm11 0h1v1h-1zm11 0h1v1h-1zm11 0h1v1h-1zm11 0h1v1h-1zm11 0h1v1h-1zm11 0h1v1h-1zm11 0h1v1h-1zm11 0h1v1h-1zm11 0h1v1h-1zm11 0h1v1h-1zm11 0h1v1h-1zm11 0h1v1h-1zm11 0h1v1h-1zm11 0h1v1h-1zm11 0h1v1h-1zm11 0h1v1h-1zm11 0h1v1h-1zm11 0h1v1h-1zm11 0h1v1h-1zm11 0h1v1h-1zm11 0h1v1h-1zm11 0h1v1h-1zm11 0h1v1h-1zm11 0h1v1h-1zm11 0h1v1h-1zm11 0h1v1h-1zm11 0h1v1h-1zm11 0h1v1h-1zm11 0h1v1h-1zm11 0h1v1h-1zm11 0h1v1h-1zm11 0h1v1h-1zm11 0h1v1h-1zm11 0h1v1h-1zm11 0h1v1h-1zm11 0h1v1h-1zm11 0h1v1h-1zm11 0h1v1h-1zm11 0h1v1h-1zm11 0h1v1h-1zm11 0h1v1h-1zm11 0h1v1h-1zm11 0h1v1h-1zm11 0h1v1h-1zm11 0h1v1h-1zm11 0h1v1h-1zm11 0h1v1h-1zm11 0h1v1h-1zm11 0h1v1h-1zm11 0h1v1h-1zm11 0h1v1h-1zm11 0h1v1h-1zm12 0h1v1h-1zm11 0h1v1h-1zm11 0h1v1h-1zm11 0h1v1h-1zm11 0h1v1h-1zm11 0h1v1h-1zm11 0h1v1h-1zm11 0h1v1h-1zm11 0h1v1h-1zm11 0h1v1h-1zm11 0h1v1h-1zm11 0h1v1h-1zM189 427h1v1h-1zm11 0h1v1h-1zm11 0h1v1h-1zm11 0h1v1h-1zm11 0h1v1h-1zm11 0h1v1h-1zm11 0h1v1h-1zm11 0h1v1h-1zm11 0h1v1h-1zm11 0h1v1h-1zm11 0h1v1h-1zm11 0h1v1h-1zm11 0h1v1h-1zm11 0h1v1h-1zm11 0h1v1h-1zm11 0h1v1h-1zm11 0h1v1h-1zm11 0h1v1h-1zm11 0h1v1h-1zm11 0h1v1h-1zm11 0h1v1h-1zm11 0h1v1h-1zm11 0h1v1h-1zm11 0h1v1h-1zm11 0h1v1h-1zm11 0h1v1h-1zm11 0h1v1h-1zm11 0h1v1h-1zm11 0h1v1h-1zm12 0h1v1h-1zm11 0h1v1h-1zm11 0h1v1h-1zm11 0h1v1h-1zm11 0h1v1h-1zm11 0h1v1h-1zm11 0h1v1h-1zm11 0h1v1h-1zm11 0h1v1h-1zm11 0h1v1h-1zm11 0h1v1h-1zm11 0h1v1h-1zm11 0h1v1h-1zm11 0h1v1h-1zm11 0h1v1h-1zm11 0h1v1h-1zm11 0h1v1h-1zm11 0h1v1h-1zm11 0h1v1h-1zm11 0h1v1h-1zm11 0h1v1h-1zm11 0h1v1h-1zm11 0h1v1h-1zm11 0h1v1h-1zm11 0h1v1h-1zm11 0h1v1h-1zm11 0h1v1h-1zm11 0h1v1h-1zm11 0h1v1h-1zm11 0h1v1h-1zm11 0h1v1h-1zm11 0h1v1h-1zm11 0h1v1h-1zm11 0h1v1h-1zm11 0h1v1h-1zm11 0h1v1h-1zm11 0h1v1h-1zm11 0h1v1h-1zm11 0h1v1h-1zm11 0h1v1h-1zm11 0h1v1h-1zm11 0h1v1h-1zm11 0h1v1h-1zm11 0h1v1h-1zm11 0h1v1h-1zm11 0h1v1h-1zm11 0h1v1h-1zm11 0h1v1h-1zm11 0h1v1h-1zm11 0h1v1h-1zm11 0h1v1h-1zm11 0h1v1h-1zm11 0h1v1h-1zm11 0h1v1h-1zm11 0h1v1h-1zm11 0h1v1h-1zm11 0h1v1h-1zm11 0h1v1h-1zm12 0h1v1h-1zm11 0h1v1h-1zm11 0h1v1h-1zm11 0h1v1h-1zm11 0h1v1h-1zm11 0h1v1h-1zm11 0h1v1h-1zm11 0h1v1h-1zm11 0h1v1h-1zm11 0h1v1h-1zm11 0h1v1h-1zm11 0h1v1h-1zM189 438h1v1h-1zm11 0h1v1h-1zm11 0h1v1h-1zm11 0h1v1h-1zm11 0h1v1h-1zm11 0h1v1h-1zm11 0h1v1h-1zm11 0h1v1h-1zm11 0h1v1h-1zm11 0h1v1h-1zm11 0h1v1h-1zm11 0h1v1h-1zm11 0h1v1h-1zm11 0h1v1h-1zm11 0h1v1h-1zm11 0h1v1h-1zm11 0h1v1h-1zm11 0h1v1h-1zm11 0h1v1h-1zm11 0h1v1h-1zm11 0h1v1h-1zm11 0h1v1h-1zm11 0h1v1h-1zm11 0h1v1h-1zm11 0h1v1h-1zm11 0h1v1h-1zm11 0h1v1h-1zm11 0h1v1h-1zm11 0h1v1h-1zm12 0h1v1h-1zm11 0h1v1h-1zm11 0h1v1h-1zm11 0h1v1h-1zm11 0h1v1h-1zm11 0h1v1h-1zm11 0h1v1h-1zm11 0h1v1h-1zm11 0h1v1h-1zm11 0h1v1h-1zm11 0h1v1h-1zm11 0h1v1h-1zm11 0h1v1h-1zm11 0h1v1h-1zm11 0h1v1h-1zm11 0h1v1h-1zm11 0h1v1h-1zm11 0h1v1h-1zm11 0h1v1h-1zm11 0h1v1h-1zm11 0h1v1h-1zm11 0h1v1h-1zm11 0h1v1h-1zm11 0h1v1h-1zm11 0h1v1h-1zm11 0h1v1h-1zm11 0h1v1h-1zm11 0h1v1h-1zm11 0h1v1h-1zm11 0h1v1h-1zm11 0h1v1h-1zm11 0h1v1h-1zm11 0h1v1h-1zm11 0h1v1h-1zm11 0h1v1h-1zm11 0h1v1h-1zm11 0h1v1h-1zm11 0h1v1h-1zm11 0h1v1h-1zm11 0h1v1h-1zm11 0h1v1h-1zm11 0h1v1h-1zm11 0h1v1h-1zm11 0h1v1h-1zm11 0h1v1h-1zm11 0h1v1h-1zm11 0h1v1h-1zm11 0h1v1h-1zm11 0h1v1h-1zm11 0h1v1h-1zm11 0h1v1h-1zm11 0h1v1h-1zm11 0h1v1h-1zm11 0h1v1h-1zm11 0h1v1h-1zm11 0h1v1h-1zm11 0h1v1h-1zm11 0h1v1h-1zm12 0h1v1h-1zm11 0h1v1h-1zm11 0h1v1h-1zm11 0h1v1h-1zm11 0h1v1h-1zm11 0h1v1h-1zm11 0h1v1h-1zm11 0h1v1h-1zm11 0h1v1h-1zm11 0h1v1h-1zm11 0h1v1h-1zm11 0h1v1h-1zM189 449h1v1h-1zm11 0h1v1h-1zm11 0h1v1h-1zm11 0h1v1h-1zm11 0h1v1h-1zm11 0h1v1h-1zm11 0h1v1h-1zm11 0h1v1h-1zm11 0h1v1h-1zm11 0h1v1h-1zm11 0h1v1h-1zm11 0h1v1h-1zm11 0h1v1h-1zm11 0h1v1h-1zm11 0h1v1h-1zm11 0h1v1h-1zm11 0h1v1h-1zm11 0h1v1h-1zm11 0h1v1h-1zm11 0h1v1h-1zm11 0h1v1h-1zm11 0h1v1h-1zm11 0h1v1h-1zm11 0h1v1h-1zm11 0h1v1h-1zm11 0h1v1h-1zm11 0h1v1h-1zm11 0h1v1h-1zm11 0h1v1h-1zm12 0h1v1h-1zm11 0h1v1h-1zm11 0h1v1h-1zm11 0h1v1h-1zm11 0h1v1h-1zm11 0h1v1h-1zm11 0h1v1h-1zm11 0h1v1h-1zm11 0h1v1h-1zm11 0h1v1h-1zm11 0h1v1h-1zm11 0h1v1h-1zm11 0h1v1h-1zm11 0h1v1h-1zm11 0h1v1h-1zm11 0h1v1h-1zm11 0h1v1h-1zm11 0h1v1h-1zm11 0h1v1h-1zm11 0h1v1h-1zm11 0h1v1h-1zm11 0h1v1h-1zm11 0h1v1h-1zm11 0h1v1h-1zm11 0h1v1h-1zm11 0h1v1h-1zm11 0h1v1h-1zm11 0h1v1h-1zm11 0h1v1h-1zm11 0h1v1h-1zm11 0h1v1h-1zm11 0h1v1h-1zm11 0h1v1h-1zm11 0h1v1h-1zm11 0h1v1h-1zm11 0h1v1h-1zm11 0h1v1h-1zm11 0h1v1h-1zm11 0h1v1h-1zm11 0h1v1h-1zm11 0h1v1h-1zm11 0h1v1h-1zm11 0h1v1h-1zm11 0h1v1h-1zm11 0h1v1h-1zm11 0h1v1h-1zm11 0h1v1h-1zm11 0h1v1h-1zm11 0h1v1h-1zm11 0h1v1h-1zm11 0h1v1h-1zm11 0h1v1h-1zm11 0h1v1h-1zm11 0h1v1h-1zm11 0h1v1h-1zm11 0h1v1h-1zm11 0h1v1h-1zm11 0h1v1h-1zm12 0h1v1h-1zm11 0h1v1h-1zm11 0h1v1h-1zm11 0h1v1h-1zm11 0h1v1h-1zm11 0h1v1h-1zm11 0h1v1h-1zm11 0h1v1h-1zm11 0h1v1h-1zm11 0h1v1h-1zm11 0h1v1h-1zm11 0h1v1h-1zM189 460h1v1h-1zm11 0h1v1h-1zm11 0h1v1h-1zm11 0h1v1h-1zm11 0h1v1h-1zm11 0h1v1h-1zm11 0h1v1h-1zm11 0h1v1h-1zm11 0h1v1h-1zm11 0h1v1h-1zm11 0h1v1h-1zm11 0h1v1h-1zm11 0h1v1h-1zm11 0h1v1h-1zm11 0h1v1h-1zm11 0h1v1h-1zm11 0h1v1h-1zm11 0h1v1h-1zm11 0h1v1h-1zm11 0h1v1h-1zm11 0h1v1h-1zm11 0h1v1h-1zm11 0h1v1h-1zm11 0h1v1h-1zm11 0h1v1h-1zm11 0h1v1h-1zm11 0h1v1h-1zm11 0h1v1h-1zm11 0h1v1h-1zm12 0h1v1h-1zm11 0h1v1h-1zm11 0h1v1h-1zm11 0h1v1h-1zm11 0h1v1h-1zm11 0h1v1h-1zm11 0h1v1h-1zm11 0h1v1h-1zm11 0h1v1h-1zm11 0h1v1h-1zm11 0h1v1h-1zm11 0h1v1h-1zm11 0h1v1h-1zm11 0h1v1h-1zm11 0h1v1h-1zm11 0h1v1h-1zm11 0h1v1h-1zm11 0h1v1h-1zm11 0h1v1h-1zm11 0h1v1h-1zm11 0h1v1h-1zm11 0h1v1h-1zm11 0h1v1h-1zm11 0h1v1h-1zm11 0h1v1h-1zm11 0h1v1h-1zm11 0h1v1h-1zm11 0h1v1h-1zm11 0h1v1h-1zm11 0h1v1h-1zm11 0h1v1h-1zm11 0h1v1h-1zm11 0h1v1h-1zm11 0h1v1h-1zm11 0h1v1h-1zm11 0h1v1h-1zm11 0h1v1h-1zm11 0h1v1h-1zm11 0h1v1h-1zm11 0h1v1h-1zm11 0h1v1h-1zm11 0h1v1h-1zm11 0h1v1h-1zm11 0h1v1h-1zm11 0h1v1h-1zm11 0h1v1h-1zm11 0h1v1h-1zm11 0h1v1h-1zm11 0h1v1h-1zm11 0h1v1h-1zm11 0h1v1h-1zm11 0h1v1h-1zm11 0h1v1h-1zm11 0h1v1h-1zm11 0h1v1h-1zm11 0h1v1h-1zm11 0h1v1h-1zm11 0h1v1h-1zm12 0h1v1h-1zm11 0h1v1h-1zm11 0h1v1h-1zm11 0h1v1h-1zm11 0h1v1h-1zm11 0h1v1h-1zm11 0h1v1h-1zm11 0h1v1h-1zm11 0h1v1h-1zm11 0h1v1h-1zm11 0h1v1h-1zm11 0h1v1h-1zM189 471h1v1h-1zm11 0h1v1h-1zm11 0h1v1h-1zm11 0h1v1h-1zm11 0h1v1h-1zm11 0h1v1h-1zm11 0h1v1h-1zm11 0h1v1h-1zm11 0h1v1h-1zm11 0h1v1h-1zm11 0h1v1h-1zm11 0h1v1h-1zm11 0h1v1h-1zm11 0h1v1h-1zm11 0h1v1h-1zm11 0h1v1h-1zm11 0h1v1h-1zm11 0h1v1h-1zm11 0h1v1h-1zm11 0h1v1h-1zm11 0h1v1h-1zm11 0h1v1h-1zm11 0h1v1h-1zm11 0h1v1h-1zm11 0h1v1h-1zm11 0h1v1h-1zm11 0h1v1h-1zm11 0h1v1h-1zm11 0h1v1h-1zm12 0h1v1h-1zm11 0h1v1h-1zm11 0h1v1h-1zm11 0h1v1h-1zm11 0h1v1h-1zm11 0h1v1h-1zm11 0h1v1h-1zm11 0h1v1h-1zm11 0h1v1h-1zm11 0h1v1h-1zm11 0h1v1h-1zm11 0h1v1h-1zm11 0h1v1h-1zm11 0h1v1h-1zm11 0h1v1h-1zm11 0h1v1h-1zm11 0h1v1h-1zm11 0h1v1h-1zm11 0h1v1h-1zm11 0h1v1h-1zm11 0h1v1h-1zm11 0h1v1h-1zm11 0h1v1h-1zm11 0h1v1h-1zm11 0h1v1h-1zm11 0h1v1h-1zm11 0h1v1h-1zm11 0h1v1h-1zm11 0h1v1h-1zm11 0h1v1h-1zm11 0h1v1h-1zm11 0h1v1h-1zm11 0h1v1h-1zm11 0h1v1h-1zm11 0h1v1h-1zm11 0h1v1h-1zm11 0h1v1h-1zm11 0h1v1h-1zm11 0h1v1h-1zm11 0h1v1h-1zm11 0h1v1h-1zm11 0h1v1h-1zm11 0h1v1h-1zm11 0h1v1h-1zm11 0h1v1h-1zm11 0h1v1h-1zm11 0h1v1h-1zm11 0h1v1h-1zm11 0h1v1h-1zm11 0h1v1h-1zm11 0h1v1h-1zm11 0h1v1h-1zm11 0h1v1h-1zm11 0h1v1h-1zm11 0h1v1h-1zm11 0h1v1h-1zm11 0h1v1h-1zm11 0h1v1h-1zm12 0h1v1h-1zm11 0h1v1h-1zm11 0h1v1h-1zm11 0h1v1h-1zm11 0h1v1h-1zm11 0h1v1h-1zm11 0h1v1h-1zm11 0h1v1h-1zm11 0h1v1h-1zm11 0h1v1h-1zm11 0h1v1h-1zm11 0h1v1h-1zM189 482h1v1h-1zm11 0h1v1h-1zm11 0h1v1h-1zm11 0h1v1h-1zm11 0h1v1h-1zm11 0h1v1h-1zm11 0h1v1h-1zm11 0h1v1h-1zm11 0h1v1h-1zm11 0h1v1h-1zm11 0h1v1h-1zm11 0h1v1h-1zm11 0h1v1h-1zm11 0h1v1h-1zm11 0h1v1h-1zm11 0h1v1h-1zm11 0h1v1h-1zm11 0h1v1h-1zm11 0h1v1h-1zm11 0h1v1h-1zm11 0h1v1h-1zm11 0h1v1h-1zm11 0h1v1h-1zm11 0h1v1h-1zm11 0h1v1h-1zm11 0h1v1h-1zm11 0h1v1h-1zm11 0h1v1h-1zm11 0h1v1h-1zm12 0h1v1h-1zm11 0h1v1h-1zm11 0h1v1h-1zm11 0h1v1h-1zm11 0h1v1h-1zm11 0h1v1h-1zm11 0h1v1h-1zm11 0h1v1h-1zm11 0h1v1h-1zm11 0h1v1h-1zm11 0h1v1h-1zm11 0h1v1h-1zm11 0h1v1h-1zm11 0h1v1h-1zm11 0h1v1h-1zm11 0h1v1h-1zm11 0h1v1h-1zm11 0h1v1h-1zm11 0h1v1h-1zm11 0h1v1h-1zm11 0h1v1h-1zm11 0h1v1h-1zm11 0h1v1h-1zm11 0h1v1h-1zm11 0h1v1h-1zm11 0h1v1h-1zm11 0h1v1h-1zm11 0h1v1h-1zm11 0h1v1h-1zm11 0h1v1h-1zm11 0h1v1h-1zm11 0h1v1h-1zm11 0h1v1h-1zm11 0h1v1h-1zm11 0h1v1h-1zm11 0h1v1h-1zm11 0h1v1h-1zm11 0h1v1h-1zm11 0h1v1h-1zm11 0h1v1h-1zm11 0h1v1h-1zm11 0h1v1h-1zm11 0h1v1h-1zm11 0h1v1h-1zm11 0h1v1h-1zm11 0h1v1h-1zm11 0h1v1h-1zm11 0h1v1h-1zm11 0h1v1h-1zm11 0h1v1h-1zm11 0h1v1h-1zm11 0h1v1h-1zm11 0h1v1h-1zm11 0h1v1h-1zm11 0h1v1h-1zm11 0h1v1h-1zm11 0h1v1h-1zm11 0h1v1h-1zm12 0h1v1h-1zm11 0h1v1h-1zm11 0h1v1h-1zm11 0h1v1h-1zm11 0h1v1h-1zm11 0h1v1h-1zm11 0h1v1h-1zm11 0h1v1h-1zm11 0h1v1h-1zm11 0h1v1h-1zm11 0h1v1h-1zm11 0h1v1h-1zM189 493h1v1h-1zm11 0h1v1h-1zm11 0h1v1h-1zm11 0h1v1h-1zm11 0h1v1h-1zm11 0h1v1h-1zm11 0h1v1h-1zm11 0h1v1h-1zm11 0h1v1h-1zm11 0h1v1h-1zm11 0h1v1h-1zm11 0h1v1h-1zm11 0h1v1h-1zm11 0h1v1h-1zm11 0h1v1h-1zm11 0h1v1h-1zm11 0h1v1h-1zm11 0h1v1h-1zm11 0h1v1h-1zm11 0h1v1h-1zm11 0h1v1h-1zm11 0h1v1h-1zm11 0h1v1h-1zm11 0h1v1h-1zm11 0h1v1h-1zm11 0h1v1h-1zm11 0h1v1h-1zm11 0h1v1h-1zm11 0h1v1h-1zm12 0h1v1h-1zm11 0h1v1h-1zm11 0h1v1h-1zm11 0h1v1h-1zm11 0h1v1h-1zm11 0h1v1h-1zm11 0h1v1h-1zm11 0h1v1h-1zm11 0h1v1h-1zm11 0h1v1h-1zm11 0h1v1h-1zm11 0h1v1h-1zm11 0h1v1h-1zm11 0h1v1h-1zm11 0h1v1h-1zm11 0h1v1h-1zm11 0h1v1h-1zm11 0h1v1h-1zm11 0h1v1h-1zm11 0h1v1h-1zm11 0h1v1h-1zm11 0h1v1h-1zm11 0h1v1h-1zm11 0h1v1h-1zm11 0h1v1h-1zm11 0h1v1h-1zm11 0h1v1h-1zm11 0h1v1h-1zm11 0h1v1h-1zm11 0h1v1h-1zm11 0h1v1h-1zm11 0h1v1h-1zm11 0h1v1h-1zm11 0h1v1h-1zm11 0h1v1h-1zm11 0h1v1h-1zm11 0h1v1h-1zm11 0h1v1h-1zm11 0h1v1h-1zm11 0h1v1h-1zm11 0h1v1h-1zm11 0h1v1h-1zm11 0h1v1h-1zm11 0h1v1h-1zm11 0h1v1h-1zm11 0h1v1h-1zm11 0h1v1h-1zm11 0h1v1h-1zm11 0h1v1h-1zm11 0h1v1h-1zm11 0h1v1h-1zm11 0h1v1h-1zm11 0h1v1h-1zm11 0h1v1h-1zm11 0h1v1h-1zm11 0h1v1h-1zm11 0h1v1h-1zm11 0h1v1h-1zm12 0h1v1h-1zm11 0h1v1h-1zm11 0h1v1h-1zm11 0h1v1h-1zm11 0h1v1h-1zm11 0h1v1h-1zm11 0h1v1h-1zm11 0h1v1h-1zm11 0h1v1h-1zm11 0h1v1h-1zm11 0h1v1h-1zm11 0h1v1h-1zM189 504h1v1h-1zm11 0h1v1h-1zm11 0h1v1h-1zm11 0h1v1h-1zm11 0h1v1h-1zm11 0h1v1h-1zm11 0h1v1h-1zm11 0h1v1h-1zm11 0h1v1h-1zm11 0h1v1h-1zm11 0h1v1h-1zm11 0h1v1h-1zm11 0h1v1h-1zm11 0h1v1h-1zm11 0h1v1h-1zm11 0h1v1h-1zm11 0h1v1h-1zm11 0h1v1h-1zm11 0h1v1h-1zm11 0h1v1h-1zm11 0h1v1h-1zm11 0h1v1h-1zm11 0h1v1h-1zm11 0h1v1h-1zm11 0h1v1h-1zm11 0h1v1h-1zm11 0h1v1h-1zm11 0h1v1h-1zm11 0h1v1h-1zm12 0h1v1h-1zm11 0h1v1h-1zm11 0h1v1h-1zm11 0h1v1h-1zm11 0h1v1h-1zm11 0h1v1h-1zm11 0h1v1h-1zm11 0h1v1h-1zm11 0h1v1h-1zm11 0h1v1h-1zm11 0h1v1h-1zm11 0h1v1h-1zm11 0h1v1h-1zm11 0h1v1h-1zm11 0h1v1h-1zm11 0h1v1h-1zm11 0h1v1h-1zm11 0h1v1h-1zm11 0h1v1h-1zm11 0h1v1h-1zm11 0h1v1h-1zm11 0h1v1h-1zm11 0h1v1h-1zm11 0h1v1h-1zm11 0h1v1h-1zm11 0h1v1h-1zm11 0h1v1h-1zm11 0h1v1h-1zm11 0h1v1h-1zm11 0h1v1h-1zm11 0h1v1h-1zm11 0h1v1h-1zm11 0h1v1h-1zm11 0h1v1h-1zm11 0h1v1h-1zm11 0h1v1h-1zm11 0h1v1h-1zm11 0h1v1h-1zm11 0h1v1h-1zm11 0h1v1h-1zm11 0h1v1h-1zm11 0h1v1h-1zm11 0h1v1h-1zm11 0h1v1h-1zm11 0h1v1h-1zm11 0h1v1h-1zm11 0h1v1h-1zm11 0h1v1h-1zm11 0h1v1h-1zm11 0h1v1h-1zm11 0h1v1h-1zm11 0h1v1h-1zm11 0h1v1h-1zm11 0h1v1h-1zm11 0h1v1h-1zm11 0h1v1h-1zm11 0h1v1h-1zm11 0h1v1h-1zm12 0h1v1h-1zm11 0h1v1h-1zm11 0h1v1h-1zm11 0h1v1h-1zm11 0h1v1h-1zm11 0h1v1h-1zm11 0h1v1h-1zm11 0h1v1h-1zm11 0h1v1h-1zm11 0h1v1h-1zm11 0h1v1h-1zm11 0h1v1h-1zM189 515h1v1h-1zm11 0h1v1h-1zm11 0h1v1h-1zm11 0h1v1h-1zm11 0h1v1h-1zm11 0h1v1h-1zm11 0h1v1h-1zm11 0h1v1h-1zm11 0h1v1h-1zm11 0h1v1h-1zm11 0h1v1h-1zm11 0h1v1h-1zm11 0h1v1h-1zm11 0h1v1h-1zm11 0h1v1h-1zm11 0h1v1h-1zm11 0h1v1h-1zm11 0h1v1h-1zm11 0h1v1h-1zm11 0h1v1h-1zm11 0h1v1h-1zm11 0h1v1h-1zm11 0h1v1h-1zm11 0h1v1h-1zm11 0h1v1h-1zm11 0h1v1h-1zm11 0h1v1h-1zm11 0h1v1h-1zm11 0h1v1h-1zm12 0h1v1h-1zm11 0h1v1h-1zm11 0h1v1h-1zm11 0h1v1h-1zm11 0h1v1h-1zm11 0h1v1h-1zm11 0h1v1h-1zm11 0h1v1h-1zm11 0h1v1h-1zm11 0h1v1h-1zm11 0h1v1h-1zm11 0h1v1h-1zm11 0h1v1h-1zm11 0h1v1h-1zm11 0h1v1h-1zm11 0h1v1h-1zm11 0h1v1h-1zm11 0h1v1h-1zm11 0h1v1h-1zm11 0h1v1h-1zm11 0h1v1h-1zm11 0h1v1h-1zm11 0h1v1h-1zm11 0h1v1h-1zm11 0h1v1h-1zm11 0h1v1h-1zm11 0h1v1h-1zm11 0h1v1h-1zm11 0h1v1h-1zm11 0h1v1h-1zm11 0h1v1h-1zm11 0h1v1h-1zm11 0h1v1h-1zm11 0h1v1h-1zm11 0h1v1h-1zm11 0h1v1h-1zm11 0h1v1h-1zm11 0h1v1h-1zm11 0h1v1h-1zm11 0h1v1h-1zm11 0h1v1h-1zm11 0h1v1h-1zm11 0h1v1h-1zm11 0h1v1h-1zm11 0h1v1h-1zm11 0h1v1h-1zm11 0h1v1h-1zm11 0h1v1h-1zm11 0h1v1h-1zm11 0h1v1h-1zm11 0h1v1h-1zm11 0h1v1h-1zm11 0h1v1h-1zm11 0h1v1h-1zm11 0h1v1h-1zm11 0h1v1h-1zm11 0h1v1h-1zm11 0h1v1h-1zm12 0h1v1h-1zm11 0h1v1h-1zm11 0h1v1h-1zm11 0h1v1h-1zm11 0h1v1h-1zm11 0h1v1h-1zm11 0h1v1h-1zm11 0h1v1h-1zm11 0h1v1h-1zm11 0h1v1h-1zm11 0h1v1h-1zm11 0h1v1h-1zM189 526h1v1h-1zm11 0h1v1h-1zm11 0h1v1h-1zm11 0h1v1h-1zm11 0h1v1h-1zm11 0h1v1h-1zm11 0h1v1h-1zm11 0h1v1h-1zm11 0h1v1h-1zm11 0h1v1h-1zm11 0h1v1h-1zm11 0h1v1h-1zm11 0h1v1h-1zm11 0h1v1h-1zm11 0h1v1h-1zm11 0h1v1h-1zm11 0h1v1h-1zm11 0h1v1h-1zm11 0h1v1h-1zm11 0h1v1h-1zm11 0h1v1h-1zm11 0h1v1h-1zm11 0h1v1h-1zm11 0h1v1h-1zm11 0h1v1h-1zm11 0h1v1h-1zm11 0h1v1h-1zm11 0h1v1h-1zm11 0h1v1h-1zm12 0h1v1h-1zm11 0h1v1h-1zm11 0h1v1h-1zm11 0h1v1h-1zm11 0h1v1h-1zm11 0h1v1h-1zm11 0h1v1h-1zm11 0h1v1h-1zm11 0h1v1h-1zm11 0h1v1h-1zm11 0h1v1h-1zm11 0h1v1h-1zm11 0h1v1h-1zm11 0h1v1h-1zm11 0h1v1h-1zm11 0h1v1h-1zm11 0h1v1h-1zm11 0h1v1h-1zm11 0h1v1h-1zm11 0h1v1h-1zm11 0h1v1h-1zm11 0h1v1h-1zm11 0h1v1h-1zm11 0h1v1h-1zm11 0h1v1h-1zm11 0h1v1h-1zm11 0h1v1h-1zm11 0h1v1h-1zm11 0h1v1h-1zm11 0h1v1h-1zm11 0h1v1h-1zm11 0h1v1h-1zm11 0h1v1h-1zm11 0h1v1h-1zm11 0h1v1h-1zm11 0h1v1h-1zm11 0h1v1h-1zm11 0h1v1h-1zm11 0h1v1h-1zm11 0h1v1h-1zm11 0h1v1h-1zm11 0h1v1h-1zm11 0h1v1h-1zm11 0h1v1h-1zm11 0h1v1h-1zm11 0h1v1h-1zm11 0h1v1h-1zm11 0h1v1h-1zm11 0h1v1h-1zm11 0h1v1h-1zm11 0h1v1h-1zm11 0h1v1h-1zm11 0h1v1h-1zm11 0h1v1h-1zm11 0h1v1h-1zm11 0h1v1h-1zm11 0h1v1h-1zm11 0h1v1h-1zm12 0h1v1h-1zm11 0h1v1h-1zm11 0h1v1h-1zm11 0h1v1h-1zm11 0h1v1h-1zm11 0h1v1h-1zm11 0h1v1h-1zm11 0h1v1h-1zm11 0h1v1h-1zm11 0h1v1h-1zm11 0h1v1h-1zm11 0h1v1h-1zM189 537h1v1h-1zm11 0h1v1h-1zm11 0h1v1h-1zm11 0h1v1h-1zm11 0h1v1h-1zm11 0h1v1h-1zm11 0h1v1h-1zm11 0h1v1h-1zm11 0h1v1h-1zm11 0h1v1h-1zm11 0h1v1h-1zm11 0h1v1h-1zm11 0h1v1h-1zm11 0h1v1h-1zm11 0h1v1h-1zm11 0h1v1h-1zm11 0h1v1h-1zm11 0h1v1h-1zm11 0h1v1h-1zm11 0h1v1h-1zm11 0h1v1h-1zm11 0h1v1h-1zm11 0h1v1h-1zm11 0h1v1h-1zm11 0h1v1h-1zm11 0h1v1h-1zm11 0h1v1h-1zm11 0h1v1h-1zm11 0h1v1h-1zm12 0h1v1h-1zm11 0h1v1h-1zm11 0h1v1h-1zm11 0h1v1h-1zm11 0h1v1h-1zm11 0h1v1h-1zm11 0h1v1h-1zm11 0h1v1h-1zm11 0h1v1h-1zm11 0h1v1h-1zm11 0h1v1h-1zm11 0h1v1h-1zm11 0h1v1h-1zm11 0h1v1h-1zm11 0h1v1h-1zm11 0h1v1h-1zm11 0h1v1h-1zm11 0h1v1h-1zm11 0h1v1h-1zm11 0h1v1h-1zm11 0h1v1h-1zm11 0h1v1h-1zm11 0h1v1h-1zm11 0h1v1h-1zm11 0h1v1h-1zm11 0h1v1h-1zm11 0h1v1h-1zm11 0h1v1h-1zm11 0h1v1h-1zm11 0h1v1h-1zm11 0h1v1h-1zm11 0h1v1h-1zm11 0h1v1h-1zm11 0h1v1h-1zm11 0h1v1h-1zm11 0h1v1h-1zm11 0h1v1h-1zm11 0h1v1h-1zm11 0h1v1h-1zm11 0h1v1h-1zm11 0h1v1h-1zm11 0h1v1h-1zm11 0h1v1h-1zm11 0h1v1h-1zm11 0h1v1h-1zm11 0h1v1h-1zm11 0h1v1h-1zm11 0h1v1h-1zm11 0h1v1h-1zm11 0h1v1h-1zm11 0h1v1h-1zm11 0h1v1h-1zm11 0h1v1h-1zm11 0h1v1h-1zm11 0h1v1h-1zm11 0h1v1h-1zm11 0h1v1h-1zm11 0h1v1h-1zm12 0h1v1h-1zm11 0h1v1h-1zm11 0h1v1h-1zm11 0h1v1h-1zm11 0h1v1h-1zm11 0h1v1h-1zm11 0h1v1h-1zm11 0h1v1h-1zm11 0h1v1h-1zm11 0h1v1h-1zm11 0h1v1h-1zm11 0h1v1h-1zM189 548h1v1h-1zm11 0h1v1h-1zm11 0h1v1h-1zm11 0h1v1h-1zm11 0h1v1h-1zm11 0h1v1h-1zm11 0h1v1h-1zm11 0h1v1h-1zm11 0h1v1h-1zm11 0h1v1h-1zm11 0h1v1h-1zm11 0h1v1h-1zm11 0h1v1h-1zm11 0h1v1h-1zm11 0h1v1h-1zm11 0h1v1h-1zm11 0h1v1h-1zm11 0h1v1h-1zm11 0h1v1h-1zm11 0h1v1h-1zm11 0h1v1h-1zm11 0h1v1h-1zm11 0h1v1h-1zm11 0h1v1h-1zm11 0h1v1h-1zm11 0h1v1h-1zm11 0h1v1h-1zm11 0h1v1h-1zm11 0h1v1h-1zm12 0h1v1h-1zm11 0h1v1h-1zm11 0h1v1h-1zm11 0h1v1h-1zm11 0h1v1h-1zm11 0h1v1h-1zm11 0h1v1h-1zm11 0h1v1h-1zm11 0h1v1h-1zm11 0h1v1h-1zm11 0h1v1h-1zm11 0h1v1h-1zm11 0h1v1h-1zm11 0h1v1h-1zm11 0h1v1h-1zm11 0h1v1h-1zm11 0h1v1h-1zm11 0h1v1h-1zm11 0h1v1h-1zm11 0h1v1h-1zm11 0h1v1h-1zm11 0h1v1h-1zm11 0h1v1h-1zm11 0h1v1h-1zm11 0h1v1h-1zm11 0h1v1h-1zm11 0h1v1h-1zm11 0h1v1h-1zm11 0h1v1h-1zm11 0h1v1h-1zm11 0h1v1h-1zm11 0h1v1h-1zm11 0h1v1h-1zm11 0h1v1h-1zm11 0h1v1h-1zm11 0h1v1h-1zm11 0h1v1h-1zm11 0h1v1h-1zm11 0h1v1h-1zm11 0h1v1h-1zm11 0h1v1h-1zm11 0h1v1h-1zm11 0h1v1h-1zm11 0h1v1h-1zm11 0h1v1h-1zm11 0h1v1h-1zm11 0h1v1h-1zm11 0h1v1h-1zm11 0h1v1h-1zm11 0h1v1h-1zm11 0h1v1h-1zm11 0h1v1h-1zm11 0h1v1h-1zm11 0h1v1h-1zm11 0h1v1h-1zm11 0h1v1h-1zm11 0h1v1h-1zm11 0h1v1h-1zm12 0h1v1h-1zm11 0h1v1h-1zm11 0h1v1h-1zm11 0h1v1h-1zm11 0h1v1h-1zm11 0h1v1h-1zm11 0h1v1h-1zm11 0h1v1h-1zm11 0h1v1h-1zm11 0h1v1h-1zm11 0h1v1h-1zm11 0h1v1h-1zM189 559h1v1h-1zm11 0h1v1h-1zm11 0h1v1h-1zm11 0h1v1h-1zm11 0h1v1h-1zm11 0h1v1h-1zm11 0h1v1h-1zm11 0h1v1h-1zm11 0h1v1h-1zm11 0h1v1h-1zm11 0h1v1h-1zm11 0h1v1h-1zm11 0h1v1h-1zm11 0h1v1h-1zm11 0h1v1h-1zm11 0h1v1h-1zm11 0h1v1h-1zm11 0h1v1h-1zm11 0h1v1h-1zm11 0h1v1h-1zm11 0h1v1h-1zm11 0h1v1h-1zm11 0h1v1h-1zm11 0h1v1h-1zm11 0h1v1h-1zm11 0h1v1h-1zm11 0h1v1h-1zm11 0h1v1h-1zm11 0h1v1h-1zm12 0h1v1h-1zm11 0h1v1h-1zm11 0h1v1h-1zm11 0h1v1h-1zm11 0h1v1h-1zm11 0h1v1h-1zm11 0h1v1h-1zm11 0h1v1h-1zm11 0h1v1h-1zm11 0h1v1h-1zm11 0h1v1h-1zm11 0h1v1h-1zm11 0h1v1h-1zm11 0h1v1h-1zm11 0h1v1h-1zm11 0h1v1h-1zm11 0h1v1h-1zm11 0h1v1h-1zm11 0h1v1h-1zm11 0h1v1h-1zm11 0h1v1h-1zm11 0h1v1h-1zm11 0h1v1h-1zm11 0h1v1h-1zm11 0h1v1h-1zm11 0h1v1h-1zm11 0h1v1h-1zm11 0h1v1h-1zm11 0h1v1h-1zm11 0h1v1h-1zm11 0h1v1h-1zm11 0h1v1h-1zm11 0h1v1h-1zm11 0h1v1h-1zm11 0h1v1h-1zm11 0h1v1h-1zm11 0h1v1h-1zm11 0h1v1h-1zm11 0h1v1h-1zm11 0h1v1h-1zm11 0h1v1h-1zm11 0h1v1h-1zm11 0h1v1h-1zm11 0h1v1h-1zm11 0h1v1h-1zm11 0h1v1h-1zm11 0h1v1h-1zm11 0h1v1h-1zm11 0h1v1h-1zm11 0h1v1h-1zm11 0h1v1h-1zm11 0h1v1h-1zm11 0h1v1h-1zm11 0h1v1h-1zm11 0h1v1h-1zm11 0h1v1h-1zm11 0h1v1h-1zm11 0h1v1h-1zm12 0h1v1h-1zm11 0h1v1h-1zm11 0h1v1h-1zm11 0h1v1h-1zm11 0h1v1h-1zm11 0h1v1h-1zm11 0h1v1h-1zm11 0h1v1h-1zm11 0h1v1h-1zm11 0h1v1h-1zm11 0h1v1h-1zm11 0h1v1h-1zM189 570h1v1h-1zm11 0h1v1h-1zm11 0h1v1h-1zm11 0h1v1h-1zm11 0h1v1h-1zm11 0h1v1h-1zm11 0h1v1h-1zm11 0h1v1h-1zm11 0h1v1h-1zm11 0h1v1h-1zm11 0h1v1h-1zm11 0h1v1h-1zm11 0h1v1h-1zm11 0h1v1h-1zm11 0h1v1h-1zm11 0h1v1h-1zm11 0h1v1h-1zm11 0h1v1h-1zm11 0h1v1h-1zm11 0h1v1h-1zm11 0h1v1h-1zm11 0h1v1h-1zm11 0h1v1h-1zm11 0h1v1h-1zm11 0h1v1h-1zm11 0h1v1h-1zm11 0h1v1h-1zm11 0h1v1h-1zm11 0h1v1h-1zm12 0h1v1h-1zm11 0h1v1h-1zm11 0h1v1h-1zm11 0h1v1h-1zm11 0h1v1h-1zm11 0h1v1h-1zm11 0h1v1h-1zm11 0h1v1h-1zm11 0h1v1h-1zm11 0h1v1h-1zm11 0h1v1h-1zm11 0h1v1h-1zm11 0h1v1h-1zm11 0h1v1h-1zm11 0h1v1h-1zm11 0h1v1h-1zm11 0h1v1h-1zm11 0h1v1h-1zm11 0h1v1h-1zm11 0h1v1h-1zm11 0h1v1h-1zm11 0h1v1h-1zm11 0h1v1h-1zm11 0h1v1h-1zm11 0h1v1h-1zm11 0h1v1h-1zm11 0h1v1h-1zm11 0h1v1h-1zm11 0h1v1h-1zm11 0h1v1h-1zm11 0h1v1h-1zm11 0h1v1h-1zm11 0h1v1h-1zm11 0h1v1h-1zm11 0h1v1h-1zm11 0h1v1h-1zm11 0h1v1h-1zm11 0h1v1h-1zm11 0h1v1h-1zm11 0h1v1h-1zm11 0h1v1h-1zm11 0h1v1h-1zm11 0h1v1h-1zm11 0h1v1h-1zm11 0h1v1h-1zm11 0h1v1h-1zm11 0h1v1h-1zm11 0h1v1h-1zm11 0h1v1h-1zm11 0h1v1h-1zm11 0h1v1h-1zm11 0h1v1h-1zm11 0h1v1h-1zm11 0h1v1h-1zm11 0h1v1h-1zm11 0h1v1h-1zm11 0h1v1h-1zm11 0h1v1h-1zm12 0h1v1h-1zm11 0h1v1h-1zm11 0h1v1h-1zm11 0h1v1h-1zm11 0h1v1h-1zm11 0h1v1h-1zm11 0h1v1h-1zm11 0h1v1h-1zm11 0h1v1h-1zm11 0h1v1h-1zm11 0h1v1h-1zm11 0h1v1h-1zM189 581h1v1h-1zm11 0h1v1h-1zm11 0h1v1h-1zm11 0h1v1h-1zm11 0h1v1h-1zm11 0h1v1h-1zm11 0h1v1h-1zm11 0h1v1h-1zm11 0h1v1h-1zm11 0h1v1h-1zm11 0h1v1h-1zm11 0h1v1h-1zm11 0h1v1h-1zm11 0h1v1h-1zm11 0h1v1h-1zm11 0h1v1h-1zm11 0h1v1h-1zm11 0h1v1h-1zm11 0h1v1h-1zm11 0h1v1h-1zm11 0h1v1h-1zm11 0h1v1h-1zm11 0h1v1h-1zm11 0h1v1h-1zm11 0h1v1h-1zm11 0h1v1h-1zm11 0h1v1h-1zm11 0h1v1h-1zm11 0h1v1h-1zm12 0h1v1h-1zm11 0h1v1h-1zm11 0h1v1h-1zm11 0h1v1h-1zm11 0h1v1h-1zm11 0h1v1h-1zm11 0h1v1h-1zm11 0h1v1h-1zm11 0h1v1h-1zm11 0h1v1h-1zm11 0h1v1h-1zm11 0h1v1h-1zm11 0h1v1h-1zm11 0h1v1h-1zm11 0h1v1h-1zm11 0h1v1h-1zm11 0h1v1h-1zm11 0h1v1h-1zm11 0h1v1h-1zm11 0h1v1h-1zm11 0h1v1h-1zm11 0h1v1h-1zm11 0h1v1h-1zm11 0h1v1h-1zm11 0h1v1h-1zm11 0h1v1h-1zm11 0h1v1h-1zm11 0h1v1h-1zm11 0h1v1h-1zm11 0h1v1h-1zm11 0h1v1h-1zm11 0h1v1h-1zm11 0h1v1h-1zm11 0h1v1h-1zm11 0h1v1h-1zm11 0h1v1h-1zm11 0h1v1h-1zm11 0h1v1h-1zm11 0h1v1h-1zm11 0h1v1h-1zm11 0h1v1h-1zm11 0h1v1h-1zm11 0h1v1h-1zm11 0h1v1h-1zm11 0h1v1h-1zm11 0h1v1h-1zm11 0h1v1h-1zm11 0h1v1h-1zm11 0h1v1h-1zm11 0h1v1h-1zm11 0h1v1h-1zm11 0h1v1h-1zm11 0h1v1h-1zm11 0h1v1h-1zm11 0h1v1h-1zm11 0h1v1h-1zm11 0h1v1h-1zm11 0h1v1h-1zm12 0h1v1h-1zm11 0h1v1h-1zm11 0h1v1h-1zm11 0h1v1h-1zm11 0h1v1h-1zm11 0h1v1h-1zm11 0h1v1h-1zm11 0h1v1h-1zm11 0h1v1h-1zm11 0h1v1h-1zm11 0h1v1h-1zm11 0h1v1h-1zM189 592h1v1h-1zm11 0h1v1h-1zm11 0h1v1h-1zm11 0h1v1h-1zm11 0h1v1h-1zm11 0h1v1h-1zm11 0h1v1h-1zm11 0h1v1h-1zm11 0h1v1h-1zm11 0h1v1h-1zm11 0h1v1h-1zm11 0h1v1h-1zm11 0h1v1h-1zm11 0h1v1h-1zm11 0h1v1h-1zm11 0h1v1h-1zm11 0h1v1h-1zm11 0h1v1h-1zm11 0h1v1h-1zm11 0h1v1h-1zm11 0h1v1h-1zm11 0h1v1h-1zm11 0h1v1h-1zm11 0h1v1h-1zm11 0h1v1h-1zm11 0h1v1h-1zm11 0h1v1h-1zm11 0h1v1h-1zm11 0h1v1h-1zm12 0h1v1h-1zm11 0h1v1h-1zm11 0h1v1h-1zm11 0h1v1h-1zm11 0h1v1h-1zm11 0h1v1h-1zm11 0h1v1h-1zm11 0h1v1h-1zm11 0h1v1h-1zm11 0h1v1h-1zm11 0h1v1h-1zm11 0h1v1h-1zm11 0h1v1h-1zm11 0h1v1h-1zm11 0h1v1h-1zm11 0h1v1h-1zm11 0h1v1h-1zm11 0h1v1h-1zm11 0h1v1h-1zm11 0h1v1h-1zm11 0h1v1h-1zm11 0h1v1h-1zm11 0h1v1h-1zm11 0h1v1h-1zm11 0h1v1h-1zm11 0h1v1h-1zm11 0h1v1h-1zm11 0h1v1h-1zm11 0h1v1h-1zm11 0h1v1h-1zm11 0h1v1h-1zm11 0h1v1h-1zm11 0h1v1h-1zm11 0h1v1h-1zm11 0h1v1h-1zm11 0h1v1h-1zm11 0h1v1h-1zm11 0h1v1h-1zm11 0h1v1h-1zm11 0h1v1h-1zm11 0h1v1h-1zm11 0h1v1h-1zm11 0h1v1h-1zm11 0h1v1h-1zm11 0h1v1h-1zm11 0h1v1h-1zm11 0h1v1h-1zm11 0h1v1h-1zm11 0h1v1h-1zm11 0h1v1h-1zm11 0h1v1h-1zm11 0h1v1h-1zm11 0h1v1h-1zm11 0h1v1h-1zm11 0h1v1h-1zm11 0h1v1h-1zm11 0h1v1h-1zm11 0h1v1h-1zm12 0h1v1h-1zm11 0h1v1h-1zm11 0h1v1h-1zm11 0h1v1h-1zm11 0h1v1h-1zm11 0h1v1h-1zm11 0h1v1h-1zm11 0h1v1h-1zm11 0h1v1h-1zm11 0h1v1h-1zm11 0h1v1h-1zm11 0h1v1h-1zM189 603h1v1h-1zm11 0h1v1h-1zm11 0h1v1h-1zm11 0h1v1h-1zm11 0h1v1h-1zm11 0h1v1h-1zm11 0h1v1h-1zm11 0h1v1h-1zm11 0h1v1h-1zm11 0h1v1h-1zm11 0h1v1h-1zm11 0h1v1h-1zm11 0h1v1h-1zm11 0h1v1h-1zm11 0h1v1h-1zm11 0h1v1h-1zm11 0h1v1h-1zm11 0h1v1h-1zm11 0h1v1h-1zm11 0h1v1h-1zm11 0h1v1h-1zm11 0h1v1h-1zm11 0h1v1h-1zm11 0h1v1h-1zm11 0h1v1h-1zm11 0h1v1h-1zm11 0h1v1h-1zm11 0h1v1h-1zm11 0h1v1h-1zm12 0h1v1h-1zm11 0h1v1h-1zm11 0h1v1h-1zm11 0h1v1h-1zm11 0h1v1h-1zm11 0h1v1h-1zm11 0h1v1h-1zm11 0h1v1h-1zm11 0h1v1h-1zm11 0h1v1h-1zm11 0h1v1h-1zm11 0h1v1h-1zm11 0h1v1h-1zm11 0h1v1h-1zm11 0h1v1h-1zm11 0h1v1h-1zm11 0h1v1h-1zm11 0h1v1h-1zm11 0h1v1h-1zm11 0h1v1h-1zm11 0h1v1h-1zm11 0h1v1h-1zm11 0h1v1h-1zm11 0h1v1h-1zm11 0h1v1h-1zm11 0h1v1h-1zm11 0h1v1h-1zm11 0h1v1h-1zm11 0h1v1h-1zm11 0h1v1h-1zm11 0h1v1h-1zm11 0h1v1h-1zm11 0h1v1h-1zm11 0h1v1h-1zm11 0h1v1h-1zm11 0h1v1h-1zm11 0h1v1h-1zm11 0h1v1h-1zm11 0h1v1h-1zm11 0h1v1h-1zm11 0h1v1h-1zm11 0h1v1h-1zm11 0h1v1h-1zm11 0h1v1h-1zm11 0h1v1h-1zm11 0h1v1h-1zm11 0h1v1h-1zm11 0h1v1h-1zm11 0h1v1h-1zm11 0h1v1h-1zm11 0h1v1h-1zm11 0h1v1h-1zm11 0h1v1h-1zm11 0h1v1h-1zm11 0h1v1h-1zm11 0h1v1h-1zm11 0h1v1h-1zm11 0h1v1h-1zm12 0h1v1h-1zm11 0h1v1h-1zm11 0h1v1h-1zm11 0h1v1h-1zm11 0h1v1h-1zm11 0h1v1h-1zm11 0h1v1h-1zm11 0h1v1h-1zm11 0h1v1h-1zm11 0h1v1h-1zm11 0h1v1h-1zm11 0h1v1h-1zM189 614h1v1h-1zm11 0h1v1h-1zm11 0h1v1h-1zm11 0h1v1h-1zm11 0h1v1h-1zm11 0h1v1h-1zm11 0h1v1h-1zm11 0h1v1h-1zm11 0h1v1h-1zm11 0h1v1h-1zm11 0h1v1h-1zm11 0h1v1h-1zm11 0h1v1h-1zm11 0h1v1h-1zm11 0h1v1h-1zm11 0h1v1h-1zm11 0h1v1h-1zm11 0h1v1h-1zm11 0h1v1h-1zm11 0h1v1h-1zm11 0h1v1h-1zm11 0h1v1h-1zm11 0h1v1h-1zm11 0h1v1h-1zm11 0h1v1h-1zm11 0h1v1h-1zm11 0h1v1h-1zm11 0h1v1h-1zm11 0h1v1h-1zm12 0h1v1h-1zm11 0h1v1h-1zm11 0h1v1h-1zm11 0h1v1h-1zm11 0h1v1h-1zm11 0h1v1h-1zm11 0h1v1h-1zm11 0h1v1h-1zm11 0h1v1h-1zm11 0h1v1h-1zm11 0h1v1h-1zm11 0h1v1h-1zm11 0h1v1h-1zm11 0h1v1h-1zm11 0h1v1h-1zm11 0h1v1h-1zm11 0h1v1h-1zm11 0h1v1h-1zm11 0h1v1h-1zm11 0h1v1h-1zm11 0h1v1h-1zm11 0h1v1h-1zm11 0h1v1h-1zm11 0h1v1h-1zm11 0h1v1h-1zm11 0h1v1h-1zm11 0h1v1h-1zm11 0h1v1h-1zm11 0h1v1h-1zm11 0h1v1h-1zm11 0h1v1h-1zm11 0h1v1h-1zm11 0h1v1h-1zm11 0h1v1h-1zm11 0h1v1h-1zm11 0h1v1h-1zm11 0h1v1h-1zm11 0h1v1h-1zm11 0h1v1h-1zm11 0h1v1h-1zm11 0h1v1h-1zm11 0h1v1h-1zm11 0h1v1h-1zm11 0h1v1h-1zm11 0h1v1h-1zm11 0h1v1h-1zm11 0h1v1h-1zm11 0h1v1h-1zm11 0h1v1h-1zm11 0h1v1h-1zm11 0h1v1h-1zm11 0h1v1h-1zm11 0h1v1h-1zm11 0h1v1h-1zm11 0h1v1h-1zm11 0h1v1h-1zm11 0h1v1h-1zm11 0h1v1h-1zm12 0h1v1h-1zm11 0h1v1h-1zm11 0h1v1h-1zm11 0h1v1h-1zm11 0h1v1h-1zm11 0h1v1h-1zm11 0h1v1h-1zm11 0h1v1h-1zm11 0h1v1h-1zm11 0h1v1h-1zm11 0h1v1h-1zm11 0h1v1h-1zM189 625h1v1h-1zm11 0h1v1h-1zm11 0h1v1h-1zm11 0h1v1h-1zm11 0h1v1h-1zm11 0h1v1h-1zm11 0h1v1h-1zm11 0h1v1h-1zm11 0h1v1h-1zm11 0h1v1h-1zm11 0h1v1h-1zm11 0h1v1h-1zm11 0h1v1h-1zm11 0h1v1h-1zm11 0h1v1h-1zm11 0h1v1h-1zm11 0h1v1h-1zm11 0h1v1h-1zm11 0h1v1h-1zm11 0h1v1h-1zm11 0h1v1h-1zm11 0h1v1h-1zm11 0h1v1h-1zm11 0h1v1h-1zm11 0h1v1h-1zm11 0h1v1h-1zm11 0h1v1h-1zm11 0h1v1h-1zm11 0h1v1h-1zm12 0h1v1h-1zm11 0h1v1h-1zm11 0h1v1h-1zm11 0h1v1h-1zm11 0h1v1h-1zm11 0h1v1h-1zm11 0h1v1h-1zm11 0h1v1h-1zm11 0h1v1h-1zm11 0h1v1h-1zm11 0h1v1h-1zm11 0h1v1h-1zm11 0h1v1h-1zm11 0h1v1h-1zm11 0h1v1h-1zm11 0h1v1h-1zm11 0h1v1h-1zm11 0h1v1h-1zm11 0h1v1h-1zm11 0h1v1h-1zm11 0h1v1h-1zm11 0h1v1h-1zm11 0h1v1h-1zm11 0h1v1h-1zm11 0h1v1h-1zm11 0h1v1h-1zm11 0h1v1h-1zm11 0h1v1h-1zm11 0h1v1h-1zm11 0h1v1h-1zm11 0h1v1h-1zm11 0h1v1h-1zm11 0h1v1h-1zm11 0h1v1h-1zm11 0h1v1h-1zm11 0h1v1h-1zm11 0h1v1h-1zm11 0h1v1h-1zm11 0h1v1h-1zm11 0h1v1h-1zm11 0h1v1h-1zm11 0h1v1h-1zm11 0h1v1h-1zm11 0h1v1h-1zm11 0h1v1h-1zm11 0h1v1h-1zm11 0h1v1h-1zm11 0h1v1h-1zm11 0h1v1h-1zm11 0h1v1h-1zm11 0h1v1h-1zm11 0h1v1h-1zm11 0h1v1h-1zm11 0h1v1h-1zm11 0h1v1h-1zm11 0h1v1h-1zm11 0h1v1h-1zm11 0h1v1h-1zm12 0h1v1h-1zm11 0h1v1h-1zm11 0h1v1h-1zm11 0h1v1h-1zm11 0h1v1h-1zm11 0h1v1h-1zm11 0h1v1h-1zm11 0h1v1h-1zm11 0h1v1h-1zm11 0h1v1h-1zm11 0h1v1h-1zm11 0h1v1h-1z"/></defs><use href="#gd" fill="#a0a0a0"/><rect x="331" y="211" width="695" height="51" fill="#000"/><rect x="331" y="211" width="695" height="51" fill="url(#pg)"/><rect x="372" y="212" width="614" height="49" fill="url(#pr)"/><path d="M331 211h695v51h-695zM332 212v49h693v-49z" fill="#3cb878" fill-rule="evenodd"/><path d="M371 212h1v49h-1zM986 212h1v49h-1z" fill="#8c9ca8"/><path d="M338 214h27v44h-27zM339 215v42h25v-42z" fill="#3cb878" fill-rule="evenodd"/><path d="M992 214h28v44h-28zM993 215v42h26v-42z" fill="#3cb878" fill-rule="evenodd"/><rect x="331" y="372" width="695" height="51" fill="#000"/><rect x="331" y="372" width="695" height="51" fill="url(#pg)"/><rect x="372" y="373" width="614" height="49" fill="url(#pr)"/><path d="M331 372h695v51h-695zM332 373v49h693v-49z" fill="#3cb878" fill-rule="evenodd"/><path d="M371 373h1v49h-1zM986 373h1v49h-1z" fill="#8c9ca8"/><path d="M338 375h27v44h-27zM339 376v42h25v-42z" fill="#3cb878" fill-rule="evenodd"/><path d="M992 375h28v44h-28zM993 376v42h26v-42z" fill="#3cb878" fill-rule="evenodd"/><rect x="331" y="535" width="695" height="51" fill="#000"/><rect x="331" y="535" width="695" height="51" fill="url(#pg)"/><rect x="372" y="536" width="614" height="49" fill="url(#pr)"/><path d="M331 535h695v51h-695zM332 536v49h693v-49z" fill="#3cb878" fill-rule="evenodd"/><path d="M371 536h1v49h-1zM986 536h1v49h-1z" fill="#8c9ca8"/><path d="M338 538h27v44h-27zM339 539v42h25v-42z" fill="#3cb878" fill-rule="evenodd"/><path d="M992 538h28v44h-28zM993 539v42h26v-42z" fill="#3cb878" fill-rule="evenodd"/><rect x="998" y="172" width="16" height="80" fill="url(#pb)"/><path d="M998 172h16v80h-16zM1000 174v76h12v-76z" fill="#1414b0" fill-rule="evenodd"/><rect x="344" y="220" width="16" height="137" fill="url(#pb)"/><path d="M344 220h16v137h-16zM346 222v133h12v-133z" fill="#1414b0" fill-rule="evenodd"/><rect x="344" y="338" width="670" height="19" fill="url(#pb)"/><path d="M344 338h670v19h-670zM346 340v15h666v-15z" fill="#1414b0" fill-rule="evenodd"/><rect x="998" y="338" width="16" height="74" fill="url(#pb)"/><path d="M998 338h16v74h-16zM1000 340v70h12v-70z" fill="#1414b0" fill-rule="evenodd"/><rect x="344" y="381" width="16" height="138" fill="url(#pb)"/><path d="M344 381h16v138h-16zM346 383v134h12v-134z" fill="#1414b0" fill-rule="evenodd"/><rect x="344" y="500" width="730" height="19" fill="url(#pb)"/><path d="M344 500h730v19h-730zM346 502v15h726v-15z" fill="#1414b0" fill-rule="evenodd"/><rect x="998" y="500" width="16" height="75" fill="url(#pb)"/><path d="M998 500h16v75h-16zM1000 502v71h12v-71z" fill="#1414b0" fill-rule="evenodd"/><rect x="344" y="544" width="16" height="79" fill="url(#pb)"/><path d="M344 544h16v79h-16zM346 546v75h12v-75z" fill="#1414b0" fill-rule="evenodd"/><clipPath id="mclip"><rect x="998" y="172" width="16" height="80"/><rect x="344" y="220" width="16" height="137"/><rect x="344" y="338" width="670" height="19"/><rect x="998" y="338" width="16" height="74"/><rect x="344" y="381" width="16" height="138"/><rect x="344" y="500" width="730" height="19"/><rect x="998" y="500" width="16" height="75"/><rect x="344" y="544" width="16" height="79"/></clipPath><use href="#gd" fill="#9c9ce8" clip-path="url(#mclip)"/><rect x="1000" y="211" width="12" height="41" fill="url(#pgc)"/><rect x="346" y="220" width="12" height="42" fill="url(#pgc)"/><rect x="1000" y="372" width="12" height="40" fill="url(#pgc)"/><rect x="346" y="381" width="12" height="42" fill="url(#pgc)"/><rect x="1000" y="535" width="12" height="40" fill="url(#pgc)"/><rect x="346" y="544" width="12" height="42" fill="url(#pgc)"/><rect x="346" y="220" width="12" height="32" fill="url(#pc)"/><rect x="348" y="224" width="7" height="7" fill="#140404"/><path d="M348 224h7v7h-7zM349 225v5h5v-5z" fill="#4a1414" fill-rule="evenodd"/><rect x="348" y="241" width="7" height="7" fill="#140404"/><path d="M348 241h7v7h-7zM349 242v5h5v-5z" fill="#4a1414" fill-rule="evenodd"/><rect x="1000" y="220" width="12" height="32" fill="url(#pc)"/><rect x="1002" y="224" width="7" height="7" fill="#140404"/><path d="M1002 224h7v7h-7zM1003 225v5h5v-5z" fill="#4a1414" fill-rule="evenodd"/><rect x="1002" y="241" width="7" height="7" fill="#140404"/><path d="M1002 241h7v7h-7zM1003 242v5h5v-5z" fill="#4a1414" fill-rule="evenodd"/><rect x="346" y="381" width="12" height="32" fill="url(#pc)"/><rect x="348" y="385" width="7" height="7" fill="#140404"/><path d="M348 385h7v7h-7zM349 386v5h5v-5z" fill="#4a1414" fill-rule="evenodd"/><rect x="348" y="402" width="7" height="7" fill="#140404"/><path d="M348 402h7v7h-7zM349 403v5h5v-5z" fill="#4a1414" fill-rule="evenodd"/><rect x="1000" y="381" width="12" height="32" fill="url(#pc)"/><rect x="1002" y="385" width="7" height="7" fill="#140404"/><path d="M1002 385h7v7h-7zM1003 386v5h5v-5z" fill="#4a1414" fill-rule="evenodd"/><rect x="1002" y="402" width="7" height="7" fill="#140404"/><path d="M1002 402h7v7h-7zM1003 403v5h5v-5z" fill="#4a1414" fill-rule="evenodd"/><rect x="346" y="544" width="12" height="32" fill="url(#pc)"/><rect x="348" y="548" width="7" height="7" fill="#140404"/><path d="M348 548h7v7h-7zM349 549v5h5v-5z" fill="#4a1414" fill-rule="evenodd"/><rect x="348" y="565" width="7" height="7" fill="#140404"/><path d="M348 565h7v7h-7zM349 566v5h5v-5z" fill="#4a1414" fill-rule="evenodd"/><rect x="1000" y="544" width="12" height="32" fill="url(#pc)"/><rect x="1002" y="548" width="7" height="7" fill="#140404"/><path d="M1002 548h7v7h-7zM1003 549v5h5v-5z" fill="#4a1414" fill-rule="evenodd"/><rect x="1002" y="565" width="7" height="7" fill="#140404"/><path d="M1002 565h7v7h-7zM1003 566v5h5v-5z" fill="#4a1414" fill-rule="evenodd"/><path d="M349 230h1v10h-1zM351 232h1v8h-1zM347 235h8v1h-8zM350 240h5v1h-5z" fill="#fff"/><path d="M349 391h1v10h-1zM351 393h1v8h-1zM347 396h8v1h-8zM350 401h5v1h-5z" fill="#fff"/><path d="M349 554h1v10h-1zM351 556h1v8h-1zM347 559h8v1h-8zM350 564h5v1h-5z" fill="#fff"/><path d="M1003 230h1v10h-1zM1005 232h1v8h-1zM1001 235h8v1h-8zM1004 240h5v1h-5z" fill="#fff"/><path d="M1003 391h1v10h-1zM1005 393h1v8h-1zM1001 396h8v1h-8zM1004 401h5v1h-5z" fill="#fff"/><path d="M1003 554h1v10h-1zM1005 556h1v8h-1zM1001 559h8v1h-8zM1004 564h5v1h-5z" fill="#fff"/><path d="M685 125h1V629h-1zM181 317H1279v1H181z" fill="#fff"/><path d="M188 151h3v1h-3zM189 150h1v3h-1zM188 207h3v1h-3zM189 206h1v3h-1zM188 262h3v1h-3zM189 261h1v3h-1zM188 317h3v1h-3zM189 316h1v3h-1zM188 372h3v1h-3zM189 371h1v3h-1zM188 427h3v1h-3zM189 426h1v3h-1zM188 482h3v1h-3zM189 481h1v3h-1zM188 537h3v1h-3zM189 536h1v3h-1zM188 592h3v1h-3zM189 591h1v3h-1zM243 151h3v1h-3zM244 150h1v3h-1zM243 207h3v1h-3zM244 206h1v3h-1zM243 262h3v1h-3zM244 261h1v3h-1zM243 317h3v1h-3zM244 316h1v3h-1zM243 372h3v1h-3zM244 371h1v3h-1zM243 427h3v1h-3zM244 426h1v3h-1zM243 482h3v1h-3zM244 481h1v3h-1zM243 537h3v1h-3zM244 536h1v3h-1zM243 592h3v1h-3zM244 591h1v3h-1zM298 151h3v1h-3zM299 150h1v3h-1zM298 207h3v1h-3zM299 206h1v3h-1zM298 262h3v1h-3zM299 261h1v3h-1zM298 317h3v1h-3zM299 316h1v3h-1zM298 372h3v1h-3zM299 371h1v3h-1zM298 427h3v1h-3zM299 426h1v3h-1zM298 482h3v1h-3zM299 481h1v3h-1zM298 537h3v1h-3zM299 536h1v3h-1zM298 592h3v1h-3zM299 591h1v3h-1zM353 151h3v1h-3zM354 150h1v3h-1zM353 207h3v1h-3zM354 206h1v3h-1zM353 262h3v1h-3zM354 261h1v3h-1zM353 317h3v1h-3zM354 316h1v3h-1zM353 372h3v1h-3zM354 371h1v3h-1zM353 427h3v1h-3zM354 426h1v3h-1zM353 482h3v1h-3zM354 481h1v3h-1zM353 537h3v1h-3zM354 536h1v3h-1zM353 592h3v1h-3zM354 591h1v3h-1zM408 151h3v1h-3zM409 150h1v3h-1zM408 207h3v1h-3zM409 206h1v3h-1zM408 262h3v1h-3zM409 261h1v3h-1zM408 317h3v1h-3zM409 316h1v3h-1zM408 372h3v1h-3zM409 371h1v3h-1zM408 427h3v1h-3zM409 426h1v3h-1zM408 482h3v1h-3zM409 481h1v3h-1zM408 537h3v1h-3zM409 536h1v3h-1zM408 592h3v1h-3zM409 591h1v3h-1zM463 151h3v1h-3zM464 150h1v3h-1zM463 207h3v1h-3zM464 206h1v3h-1zM463 262h3v1h-3zM464 261h1v3h-1zM463 317h3v1h-3zM464 316h1v3h-1zM463 372h3v1h-3zM464 371h1v3h-1zM463 427h3v1h-3zM464 426h1v3h-1zM463 482h3v1h-3zM464 481h1v3h-1zM463 537h3v1h-3zM464 536h1v3h-1zM463 592h3v1h-3zM464 591h1v3h-1zM519 151h3v1h-3zM520 150h1v3h-1zM519 207h3v1h-3zM520 206h1v3h-1zM519 262h3v1h-3zM520 261h1v3h-1zM519 317h3v1h-3zM520 316h1v3h-1zM519 372h3v1h-3zM520 371h1v3h-1zM519 427h3v1h-3zM520 426h1v3h-1zM519 482h3v1h-3zM520 481h1v3h-1zM519 537h3v1h-3zM520 536h1v3h-1zM519 592h3v1h-3zM520 591h1v3h-1zM574 151h3v1h-3zM575 150h1v3h-1zM574 207h3v1h-3zM575 206h1v3h-1zM574 262h3v1h-3zM575 261h1v3h-1zM574 317h3v1h-3zM575 316h1v3h-1zM574 372h3v1h-3zM575 371h1v3h-1zM574 427h3v1h-3zM575 426h1v3h-1zM574 482h3v1h-3zM575 481h1v3h-1zM574 537h3v1h-3zM575 536h1v3h-1zM574 592h3v1h-3zM575 591h1v3h-1zM629 151h3v1h-3zM630 150h1v3h-1zM629 207h3v1h-3zM630 206h1v3h-1zM629 262h3v1h-3zM630 261h1v3h-1zM629 317h3v1h-3zM630 316h1v3h-1zM629 372h3v1h-3zM630 371h1v3h-1zM629 427h3v1h-3zM630 426h1v3h-1zM629 482h3v1h-3zM630 481h1v3h-1zM629 537h3v1h-3zM630 536h1v3h-1zM629 592h3v1h-3zM630 591h1v3h-1zM684 151h3v1h-3zM685 150h1v3h-1zM684 207h3v1h-3zM685 206h1v3h-1zM684 262h3v1h-3zM685 261h1v3h-1zM684 317h3v1h-3zM685 316h1v3h-1zM684 372h3v1h-3zM685 371h1v3h-1zM684 427h3v1h-3zM685 426h1v3h-1zM684 482h3v1h-3zM685 481h1v3h-1zM684 537h3v1h-3zM685 536h1v3h-1zM684 592h3v1h-3zM685 591h1v3h-1zM739 151h3v1h-3zM740 150h1v3h-1zM739 207h3v1h-3zM740 206h1v3h-1zM739 262h3v1h-3zM740 261h1v3h-1zM739 317h3v1h-3zM740 316h1v3h-1zM739 372h3v1h-3zM740 371h1v3h-1zM739 427h3v1h-3zM740 426h1v3h-1zM739 482h3v1h-3zM740 481h1v3h-1zM739 537h3v1h-3zM740 536h1v3h-1zM739 592h3v1h-3zM740 591h1v3h-1zM794 151h3v1h-3zM795 150h1v3h-1zM794 207h3v1h-3zM795 206h1v3h-1zM794 262h3v1h-3zM795 261h1v3h-1zM794 317h3v1h-3zM795 316h1v3h-1zM794 372h3v1h-3zM795 371h1v3h-1zM794 427h3v1h-3zM795 426h1v3h-1zM794 482h3v1h-3zM795 481h1v3h-1zM794 537h3v1h-3zM795 536h1v3h-1zM794 592h3v1h-3zM795 591h1v3h-1zM849 151h3v1h-3zM850 150h1v3h-1zM849 207h3v1h-3zM850 206h1v3h-1zM849 262h3v1h-3zM850 261h1v3h-1zM849 317h3v1h-3zM850 316h1v3h-1zM849 372h3v1h-3zM850 371h1v3h-1zM849 427h3v1h-3zM850 426h1v3h-1zM849 482h3v1h-3zM850 481h1v3h-1zM849 537h3v1h-3zM850 536h1v3h-1zM849 592h3v1h-3zM850 591h1v3h-1zM904 151h3v1h-3zM905 150h1v3h-1zM904 207h3v1h-3zM905 206h1v3h-1zM904 262h3v1h-3zM905 261h1v3h-1zM904 317h3v1h-3zM905 316h1v3h-1zM904 372h3v1h-3zM905 371h1v3h-1zM904 427h3v1h-3zM905 426h1v3h-1zM904 482h3v1h-3zM905 481h1v3h-1zM904 537h3v1h-3zM905 536h1v3h-1zM904 592h3v1h-3zM905 591h1v3h-1zM959 151h3v1h-3zM960 150h1v3h-1zM959 207h3v1h-3zM960 206h1v3h-1zM959 262h3v1h-3zM960 261h1v3h-1zM959 317h3v1h-3zM960 316h1v3h-1zM959 372h3v1h-3zM960 371h1v3h-1zM959 427h3v1h-3zM960 426h1v3h-1zM959 482h3v1h-3zM960 481h1v3h-1zM959 537h3v1h-3zM960 536h1v3h-1zM959 592h3v1h-3zM960 591h1v3h-1zM1014 151h3v1h-3zM1015 150h1v3h-1zM1014 207h3v1h-3zM1015 206h1v3h-1zM1014 262h3v1h-3zM1015 261h1v3h-1zM1014 317h3v1h-3zM1015 316h1v3h-1zM1014 372h3v1h-3zM1015 371h1v3h-1zM1014 427h3v1h-3zM1015 426h1v3h-1zM1014 482h3v1h-3zM1015 481h1v3h-1zM1014 537h3v1h-3zM1015 536h1v3h-1zM1014 592h3v1h-3zM1015 591h1v3h-1zM1069 151h3v1h-3zM1070 150h1v3h-1zM1069 207h3v1h-3zM1070 206h1v3h-1zM1069 262h3v1h-3zM1070 261h1v3h-1zM1069 317h3v1h-3zM1070 316h1v3h-1zM1069 372h3v1h-3zM1070 371h1v3h-1zM1069 427h3v1h-3zM1070 426h1v3h-1zM1069 482h3v1h-3zM1070 481h1v3h-1zM1069 537h3v1h-3zM1070 536h1v3h-1zM1069 592h3v1h-3zM1070 591h1v3h-1zM1124 151h3v1h-3zM1125 150h1v3h-1zM1124 207h3v1h-3zM1125 206h1v3h-1zM1124 262h3v1h-3zM1125 261h1v3h-1zM1124 317h3v1h-3zM1125 316h1v3h-1zM1124 372h3v1h-3zM1125 371h1v3h-1zM1124 427h3v1h-3zM1125 426h1v3h-1zM1124 482h3v1h-3zM1125 481h1v3h-1zM1124 537h3v1h-3zM1125 536h1v3h-1zM1124 592h3v1h-3zM1125 591h1v3h-1zM1180 151h3v1h-3zM1181 150h1v3h-1zM1180 207h3v1h-3zM1181 206h1v3h-1zM1180 262h3v1h-3zM1181 261h1v3h-1zM1180 317h3v1h-3zM1181 316h1v3h-1zM1180 372h3v1h-3zM1181 371h1v3h-1zM1180 427h3v1h-3zM1181 426h1v3h-1zM1180 482h3v1h-3zM1181 481h1v3h-1zM1180 537h3v1h-3zM1181 536h1v3h-1zM1180 592h3v1h-3zM1181 591h1v3h-1zM1235 151h3v1h-3zM1236 150h1v3h-1zM1235 207h3v1h-3zM1236 206h1v3h-1zM1235 262h3v1h-3zM1236 261h1v3h-1zM1235 317h3v1h-3zM1236 316h1v3h-1zM1235 372h3v1h-3zM1236 371h1v3h-1zM1235 427h3v1h-3zM1236 426h1v3h-1zM1235 482h3v1h-3zM1236 481h1v3h-1zM1235 537h3v1h-3zM1236 536h1v3h-1zM1235 592h3v1h-3zM1236 591h1v3h-1z" fill="#fff"/><g transform="translate(1012.8,197.5) scale(1.15)" fill="none" stroke="#fff" stroke-width="1" shape-rendering="crispEdges"><path vector-effect="non-scaling-stroke" transform="translate(0.00,0)" d="M1.5 0V-7M1.5 -9.8V-9.3"/><path vector-effect="non-scaling-stroke" transform="translate(4.27,0)" d="M1 -7V0M1 -5.6L2.4 -7H5.3L6.7 -5.6V0"/><path vector-effect="non-scaling-stroke" transform="translate(12.27,0)" d="M0.5 1H8.5"/><path vector-effect="non-scaling-stroke" transform="translate(23.27,0)" d="M1 -10V0M1 -5.6L2.5 -7H5.1L6.6 -5.5V-1.5L5.1 0H2.5L1 -1.4"/><path vector-effect="non-scaling-stroke" transform="translate(31.37,0)" d="M1.5 0V-7M1.5 -9.8V-9.3"/><path vector-effect="non-scaling-stroke" transform="translate(35.64,0)" d="M1.5 -10V-1.2L2.7 0H3.8M-0.4 -7H3.4"/></g><g transform="translate(1024,497) scale(1.15)" fill="none" stroke="#fff" stroke-width="1" shape-rendering="crispEdges"><path vector-effect="non-scaling-stroke" transform="translate(0.00,0)" d="M2.4 -7H5.9L7.3 -5.6V-1.4L5.9 0H2.4L1 -1.4V-5.6Z"/><path vector-effect="non-scaling-stroke" transform="translate(9.40,0)" d="M1 -7V-1.4L2.4 0H5.3L6.6 -1.4M6.6 -7V0"/><path vector-effect="non-scaling-stroke" transform="translate(18.60,0)" d="M1.5 -10V-1.2L2.7 0H3.8M-0.4 -7H3.4"/></g><g transform="translate(374,609) scale(1.15)" fill="none" stroke="#fff" stroke-width="1" shape-rendering="crispEdges"><path vector-effect="non-scaling-stroke" transform="translate(0.00,0)" d="M1.5 0V-7M1.5 -9.8V-9.3"/><path vector-effect="non-scaling-stroke" transform="translate(4.27,0)" d="M1 -7V0M1 -5.6L2.4 -7H5.3L6.7 -5.6V0"/></g><path d="M1032 191h7v1h-7zM1035 186h1v10h-1zM1034 490h7v1h-7zM1037 487h1v7h-1zM378 603h7v1h-7zM381 600h1v7h-1z" fill="#fff"/></g></svg>
<div class="a " style="left:0px;top:629px;width:1279px;height:29px;background:linear-gradient(#f2f2f2,#d4d4d4 70%,#bdbdbd);border-bottom:1px solid #a0a0a0"></div>
<div class="a grip" style="left:4px;top:636px;width:6px;height:17px;"></div>
<div class="a " style="left:0px;top:658px;width:1279px;height:19px;background:linear-gradient(#f4f4f4,#d8d8d8);border-bottom:1px solid #9a9a9a;border-radius:0 0 4px 4px"></div>
<div class="a grip" style="left:3px;top:661px;width:6px;height:12px;"></div>
<div class="a t " style="left:10px;top:660px;font-size:11.2px">mouse L: showClickInfo()</div>
<div class="a t " style="left:597px;top:660px;font-size:11.2px">M: setDRCForm()</div>
<div class="a t " style="left:1270px;top:660px;font-size:11.2px;transform:translateX(-100%)">R: _lxHiMousePopUp()</div>
<div class="a " style="left:0px;top:677px;width:1279px;height:21px;background:#efefef"></div>
<div class="a " style="left:0px;top:677px;width:34px;height:21px;background:#f6dcdc;border-right:1px solid #999"></div>
<div class="a t " style="left:2px;top:680px;font-size:11.5px">7(10)</div>
<div class="a t " style="left:44px;top:680px;font-size:11.5px">&gt;</div>
<div class="a " style="left:1222px;top:680px;width:1px;height:15px;background:#555"></div>
<div class="a t " style="left:1229px;top:681px;font-size:11.5px">Cmd:</div>
<div class="a " style="left:1264px;top:681px;width:10px;height:14px;background:#9a9a9a;border:1px solid #666"></div>
<div class="a " style="left:0px;top:698px;width:1279px;height:3px;background:#000"></div>
<div class="a " style="left:1278px;top:31px;width:1px;height:667px;background:#111"></div>
<div class="a " style="left:0px;top:698px;width:1279px;height:3px;background:#000"></div>
<div class="a " style="left:0px;top:701px;width:1279px;height:30px;background:linear-gradient(#e4e4e4,#fbfbfb 45%,#fff)"></div>
<svg class="a" style="left:8px;top:707px;" width="16" height="16" viewBox="0 0 16 16"><rect width="16" height="16" fill="#555"/><path d="M2 12q4-8 12-10M3 4l9 9M5 15q4-2 6-7" stroke="#fff" stroke-width="1.4" fill="none"/></svg>
<div class="a t " style="left:29px;top:709px;color:#8a929c;font-size:11.8px;line-height:15px">Virtuoso<span style="margin:0 2px 0 1px">®</span> Schematic Editor L Editing: lab3 1-bit_R_div schematic</div>
<div class="a " style="left:1158px;top:715px;width:11px;height:1px;background:#888"></div>
<div class="a " style="left:1204px;top:710px;width:10px;height:10px;border:1px solid #888"></div>
<svg class="a" style="left:1249px;top:709px;" width="12" height="12" viewBox="0 0 12 12"><path d="M1 1l10 10M11 1L1 11" stroke="#888" stroke-width="1.2"/></svg>
<div class="a " style="left:0px;top:731px;width:1279px;height:24px;background:#efefef"></div>
<div class="a " style="left:0px;top:731px;width:2px;height:24px;background:#d8d8d8"></div>
<div class="a t " style="left:9px;top:737px;font-size:11.6px;color:#222"><span class="u">L</span>aunch</div>
<div class="a t " style="left:59px;top:737px;font-size:11.6px;color:#222"><span class="u">F</span>ile</div>
<div class="a t " style="left:89px;top:737px;font-size:11.6px;color:#222"><span class="u">E</span>dit</div>
<div class="a t " style="left:121px;top:737px;font-size:11.6px;color:#222"><span class="u">V</span>iew</div>
<div class="a t " style="left:158px;top:737px;font-size:11.6px;color:#222"><span class="u">C</span>reate</div>
<div class="a t " style="left:204px;top:737px;font-size:11.6px;color:#222">Chec<span class="u">k</span></div>
<div class="a t " style="left:247px;top:737px;font-size:11.6px;color:#222">O<span class="u">p</span>tions</div>
<div class="a t " style="left:300px;top:737px;font-size:11.6px;color:#222"><span class="u">W</span>indow</div>
<div class="a t " style="left:354px;top:737px;font-size:11.6px;color:#222">NCSU</div>
<div class="a t " style="left:397px;top:737px;font-size:11.6px;color:#222"><span class="u">H</span>elp</div>
<div class="a t " style="left:1198px;top:737px;font-size:16px;letter-spacing:2.3px;color:#1a1a1a;line-height:17px;font-weight:bold;transform:scaleX(0.92);transform-origin:0 0">c<span style="position:relative">a<span style="position:absolute;left:1px;top:0px;width:6px;height:2px;background:#b44"></span></span>dence</div>
<div class="a " style="left:0px;top:755px;width:1279px;height:4px;background:linear-gradient(#9a0000,#bb0000 25%,#bb0000 75%,#9a0000)"></div>
<div class="a " style="left:0px;top:759px;width:1279px;height:3px;background:#f0f0f0"></div>
<div class="a " style="left:0px;top:762px;width:1279px;height:31px;background:#f0f0f0"></div>
<div class="a tb" style="left:0px;top:763px;width:132px;height:30px;"></div>
<div class="a grip" style="left:5px;top:769px;width:6px;height:18px;"></div>
<svg class="a" style="left:10px;top:765px;" width="24" height="24" viewBox="0 0 24 24"><path d="M6 3h8l4 4v14H6z" fill="#f8dc98" stroke="#c89a40"/><path d="M14 3v4h4" fill="#fff3d0" stroke="#c89a40"/></svg>
<svg class="a" style="left:41px;top:765px;" width="24" height="24" viewBox="0 0 24 24"><path d="M3 6h6l2 2h8v3H7l-4 8z" fill="#f0b050" stroke="#b87a20" stroke-width="1"/><path d="M6 11h15l-3 8H3z" fill="#f6f6f6" stroke="#b87a20" stroke-width="1"/></svg>
<svg class="a" style="left:73px;top:765px;" width="24" height="24" viewBox="0 0 24 24"><rect x="3.5" y="4.5" width="16" height="16" rx="1.5" fill="#6a8ac8" stroke="#3a5a98"/><rect x="6" y="5" width="11" height="7" fill="#f4f6fa"/><rect x="7" y="15" width="9" height="5" fill="#dfe6f2"/><path d="M8 12l3.5 4 9-11" fill="none" stroke="#1a9a1a" stroke-width="2.8"/></svg>
<svg class="a" style="left:104px;top:765px;" width="24" height="24" viewBox="0 0 24 24"><rect x="4" y="5" width="16" height="15" rx="1.5" fill="#d8dde6" stroke="#a9b3c4"/><rect x="7" y="6" width="10" height="5" fill="#eef1f5"/><rect x="8" y="14" width="8" height="5" fill="#eef1f5"/></svg>
<div class="a tb" style="left:133px;top:763px;width:419px;height:30px;"></div>
<div class="a grip" style="left:137px;top:769px;width:6px;height:18px;"></div>
<svg class="a" style="left:143px;top:765px;" width="24" height="24" viewBox="0 0 24 24"><path d="M12 2l-3.5 3.5h2.5v5h-5v-2.5L2.5 12 6 15.5V13h5v5H8.5L12 21.5l3.5-3.5H13v-5h5v2.5l3.5-3.5L18 8.5V11h-5V6h2.5z" fill="#b8d0e8" stroke="#4a6a90" stroke-width="1"/></svg>
<svg class="a" style="left:174px;top:765px;" width="24" height="24" viewBox="0 0 24 24"><rect x="9" y="4" width="9" height="12" fill="#f4f4f4" stroke="#888"/><rect x="5" y="8" width="9" height="12" fill="#f4f4f4" stroke="#888"/></svg>
<svg class="a" style="left:204px;top:765px;" width="24" height="24" viewBox="0 0 24 24"><path d="M3 5q9 3 18 0v14q-9-3-18 0z" fill="#8aaad8" stroke="#3a5a98"/><path d="M5 12l4-3.5v7zM19 12l-4-3.5v7z" fill="#fff"/><path d="M11 8v8M13 8v8" stroke="#fff" stroke-width="1.2"/></svg>
<svg class="a" style="left:235px;top:765px;" width="24" height="24" viewBox="0 0 24 24"><path d="M6 6l12 12M18 6L6 18" stroke="#a0400a" stroke-width="3.2" stroke-linecap="round"/><path d="M6 6l12 12M18 6L6 18" stroke="#e07030" stroke-width="1.2" stroke-linecap="round"/></svg>
<svg class="a" style="left:267px;top:765px;" width="24" height="24" viewBox="0 0 24 24"><circle cx="12" cy="12" r="8.5" fill="#8fa9e0" stroke="#4b6fb8"/><circle cx="12" cy="12" r="6.5" fill="#a9c0ee"/><rect x="11" y="10.5" width="2.2" height="6.5" fill="#fff"/><circle cx="12.1" cy="7.8" r="1.3" fill="#fff"/></svg>
<svg class="a" style="left:298px;top:765px;" width="24" height="24" viewBox="0 0 24 24"><text x="2" y="18" font-family="Liberation Serif" font-weight="bold" font-size="19" fill="#111">T</text><path d="M12 21l9-9 2 2-9 9z" fill="#f0c040" stroke="#806010" stroke-width=".6"/></svg>
<svg class="a" style="left:329px;top:765px;" width="24" height="24" viewBox="0 0 24 24"><path d="M16 20q5-5-1-10q-4-3-8-1l-1-3-3 7 7 1-2-2q3-2 6 1q3 4 0 7z" fill="#f4dcc0" stroke="#e8c8a0" stroke-width=".8"/></svg>
<svg class="a" style="left:360px;top:765px;" width="24" height="24" viewBox="0 0 24 24"><path d="M8 20q-5-5 1-10q4-3 8-1l1-3 3 7-7 1 2-2q-3-2-6 1q-3 4 0 7z" fill="#f0a040" stroke="#c06010" stroke-width=".8"/></svg>
<svg class="a" style="left:390px;top:765px;" width="24" height="24" viewBox="0 0 24 24"><path d="M11 4v16H3z" fill="#6a8fd0" stroke="#2a4a90" stroke-width=".8"/><path d="M13 20h8l-8-8z" fill="#b8cbee" stroke="#2a4a90" stroke-width=".8"/><path d="M13 9a4 4 0 1 1 6 3" fill="none" stroke="#e89a30" stroke-width="2"/><path d="M12 6l2 4 2-3z" fill="#e89a30"/></svg>
<svg class="a" style="left:420px;top:775px;" width="9" height="5" viewBox="0 0 9 5"><path d="M0 0h9L4.5 5z" fill="#c00"/></svg>
<svg class="a" style="left:432px;top:765px;" width="24" height="24" viewBox="0 0 24 24"><text x="2" y="20" font-family="Liberation Serif" font-weight="bold" font-size="20" fill="#111">T</text><path d="M16 6l3-3 3 3z" fill="#111"/></svg>
<svg class="a" style="left:460px;top:775px;" width="9" height="5" viewBox="0 0 9 5"><path d="M0 0h9L4.5 5z" fill="#c00"/></svg>
<svg class="a" style="left:469px;top:765px;" width="24" height="24" viewBox="0 0 24 24"><rect x="5" y="3" width="8" height="4" rx="1" fill="#9ab4e4" stroke="#4a6aa8" stroke-width=".7"/><rect x="5" y="10" width="15" height="4.5" rx="1" fill="#9ab4e4" stroke="#4a6aa8" stroke-width=".7"/><rect x="5" y="17" width="11" height="4" rx="1" fill="#9ab4e4" stroke="#4a6aa8" stroke-width=".7"/><path d="M4 8.5h3M4 15.5h3" stroke="#e05050" stroke-width="1.2"/></svg>
<svg class="a" style="left:501px;top:775px;" width="9" height="5" viewBox="0 0 9 5"><path d="M0 0h9L4.5 5z" fill="#c00"/></svg>
<svg class="a" style="left:513px;top:765px;" width="24" height="24" viewBox="0 0 24 24"><path d="M3 5h18M3 12h18M3 19h18" stroke="#222" stroke-width="1.1"/><rect x="8" y="3" width="7" height="4" rx="1.5" fill="#9ab4e4" stroke="#4a6aa8" stroke-width=".7"/><rect x="6.5" y="10" width="10" height="4" rx="1.5" fill="#9ab4e4" stroke="#4a6aa8" stroke-width=".7"/><rect x="8" y="17" width="7" height="4" rx="1.5" fill="#9ab4e4" stroke="#4a6aa8" stroke-width=".7"/></svg>
<svg class="a" style="left:542px;top:775px;" width="9" height="5" viewBox="0 0 9 5"><path d="M0 0h9L4.5 5z" fill="#c00"/></svg>
<div class="a tb" style="left:553px;top:763px;width:131px;height:30px;"></div>
<div class="a grip" style="left:557px;top:769px;width:6px;height:18px;"></div>
<svg class="a" style="left:563px;top:765px;" width="24" height="24" viewBox="0 0 24 24"><circle cx="10" cy="10" r="6.5" fill="#d4e4f6" stroke="#6a7a8a" stroke-width="1.6"/><path d="M10 7v6M7 10h6" stroke="#4c6aa0" stroke-width="1.8"/><path d="M15 15l5.5 5.5" stroke="#b07030" stroke-width="3" stroke-linecap="round"/></svg>
<svg class="a" style="left:593px;top:765px;" width="24" height="24" viewBox="0 0 24 24"><circle cx="10" cy="10" r="6.5" fill="#d4e4f6" stroke="#6a7a8a" stroke-width="1.6"/><path d="M7 10h6" stroke="#4c6aa0" stroke-width="1.8"/><path d="M15 15l5.5 5.5" stroke="#b07030" stroke-width="3" stroke-linecap="round"/></svg>
<svg class="a" style="left:624px;top:765px;" width="24" height="24" viewBox="0 0 24 24"><circle cx="10" cy="10" r="6.5" fill="#d4e4f6" stroke="#6a7a8a" stroke-width="1.6"/><circle cx="10" cy="10" r="3" fill="#fff" stroke="#4c6aa0"/><path d="M15 15l5.5 5.5" stroke="#b07030" stroke-width="3" stroke-linecap="round"/></svg>
<svg class="a" style="left:655px;top:765px;" width="24" height="24" viewBox="0 0 24 24"><path d="M3 8V3h5M16 3h5v5M21 16v5h-5M8 21H3v-5" fill="none" stroke="#4c6aa0" stroke-width="1.8"/><path d="M8 11h8M12 7v8" stroke="#4c6aa0" stroke-width="1.8"/><circle cx="15" cy="15" r="4" fill="#a8c8f0" stroke="#4c6aa0"/><path d="M18 18l4 4" stroke="#b07030" stroke-width="2.4"/></svg>
<div class="a tb" style="left:685px;top:763px;width:594px;height:30px;"></div>
<div class="a grip" style="left:689px;top:769px;width:6px;height:18px;"></div>
<svg class="a" style="left:694px;top:765px;" width="24" height="24" viewBox="0 0 24 24"><rect x="3" y="5" width="3" height="3" fill="#e06060"/><rect x="3" y="13" width="3" height="3" fill="#e06060"/><rect x="17" y="8.5" width="4" height="3" fill="#e06060"/><path d="M6 6.5h4v8H6M10 10.5h7M12 6v9" fill="none" stroke="#333" stroke-width="1.5"/><circle cx="14" cy="18" r="4" fill="#2aa040"/><path d="M14 15.5v5M11.5 18h5" stroke="#fff" stroke-width="1.6"/></svg>
<svg class="a" style="left:726px;top:765px;" width="24" height="24" viewBox="0 0 24 24"><path d="M6 5h3v14h5" fill="none" stroke="#333" stroke-width="1.8"/><rect x="4" y="3" width="4" height="4" fill="#f0e060" stroke="#908020" stroke-width=".6"/><rect x="14" y="17" width="4" height="4" fill="#f0e060" stroke="#908020" stroke-width=".6"/></svg>
<svg class="a" style="left:757px;top:765px;" width="24" height="24" viewBox="0 0 24 24"><path d="M6 5h3v14h5" fill="none" stroke="#222" stroke-width="2.6"/><rect x="4" y="3" width="4" height="4" fill="#f0e060" stroke="#908020" stroke-width=".6"/><rect x="14" y="17" width="4" height="4" fill="#f0e060" stroke="#908020" stroke-width=".6"/></svg>
<svg class="a" style="left:788px;top:765px;" width="24" height="24" viewBox="0 0 24 24"><text x="4" y="11" font-family="Liberation Sans" font-weight="bold" font-size="9" fill="#888">abc</text><path d="M3 18h17" stroke="#333" stroke-width="1.4"/><rect x="1" y="16" width="4" height="4" fill="#f0e060" stroke="#908020" stroke-width=".6"/><rect x="18" y="16" width="4" height="4" fill="#f0e060" stroke="#908020" stroke-width=".6"/></svg>
<svg class="a" style="left:820px;top:765px;" width="24" height="24" viewBox="0 0 24 24"><path d="M2 12h8" stroke="#333" stroke-width="1.4"/><rect x="1" y="10" width="4" height="4" fill="#f0e060" stroke="#908020" stroke-width=".6"/><path d="M9 7h8q5 5 0 10H9z" fill="#333" stroke="#111"/></svg>
<svg class="a" style="left:850px;top:765px;" width="24" height="24" viewBox="0 0 24 24"><path d="M5 3h10l4 4v14H5z" fill="#f4f4f4" stroke="#888"/><path d="M8 10h2M8 14h2M8 18h2M12 10h5M12 14h5M12 18h5" stroke="#555" stroke-width="1.6"/></svg>
<div class="a " style="left:0px;top:792px;width:1279px;height:34px;background:#f0f0f0"></div>
<div class="a tb" style="left:0px;top:794px;width:152px;height:31px;"></div>
<div class="a grip" style="left:4px;top:799px;width:6px;height:20px;"></div>
<svg class="a" style="left:14px;top:799px;" width="18" height="18" viewBox="0 0 18 18"><defs><linearGradient id="ng" x1="0" y1="0" x2="0" y2="1"><stop offset="0" stop-color="#eef1f5"/><stop offset="1" stop-color="#c4cbd6"/></linearGradient></defs><circle cx="9" cy="9" r="7.7" fill="url(#ng)" stroke="#9aa6ba" stroke-width="1.2"/><path d="M4.5 9l4.5-4.5v2.5h4.5v4h-4.5v2.5z" fill="#f8f8f8" stroke="#b8c0cc" stroke-width=".6"/></svg>
<svg class="a" style="left:55px;top:799px;" width="18" height="18" viewBox="0 0 18 18"><defs><linearGradient id="ng" x1="0" y1="0" x2="0" y2="1"><stop offset="0" stop-color="#eef1f5"/><stop offset="1" stop-color="#c4cbd6"/></linearGradient></defs><circle cx="9" cy="9" r="7.7" fill="url(#ng)" stroke="#9aa6ba" stroke-width="1.2"/><path d="M13.5 9l-4.5-4.5v2.5h-4.5v4h4.5v2.5z" fill="#f8f8f8" stroke="#b8c0cc" stroke-width=".6"/></svg>
<svg class="a" style="left:95px;top:799px;" width="18" height="18" viewBox="0 0 18 18"><defs><linearGradient id="ng" x1="0" y1="0" x2="0" y2="1"><stop offset="0" stop-color="#eef1f5"/><stop offset="1" stop-color="#c4cbd6"/></linearGradient></defs><circle cx="9" cy="9" r="7.7" fill="url(#ng)" stroke="#9aa6ba" stroke-width="1.2"/><path d="M9 4.5l4.5 4.5h-2.5v4.5h-4v-4.5h-2.5z" fill="#f8f8f8" stroke="#b8c0cc" stroke-width=".6"/></svg>
<svg class="a" style="left:127px;top:799px;" width="18" height="18" viewBox="0 0 18 18"><defs><linearGradient id="ng" x1="0" y1="0" x2="0" y2="1"><stop offset="0" stop-color="#eef1f5"/><stop offset="1" stop-color="#c4cbd6"/></linearGradient></defs><circle cx="9" cy="9" r="7.7" fill="url(#ng)" stroke="#9aa6ba" stroke-width="1.2"/><path d="M9 6.5l4 4h-2.3v3.5h-3.4v-3.5h-2.3zM4.5 4.5h9" fill="#f8f8f8" stroke="#b8c0cc" stroke-width=".6"/></svg>
<svg class="a" style="left:40px;top:807px;" width="8" height="4" viewBox="0 0 8 4"><path d="M0 0h8L4 4z" fill="#c8c8c8"/><path d="M0 0h8" stroke="#777"/></svg>
<svg class="a" style="left:81px;top:807px;" width="8" height="4" viewBox="0 0 8 4"><path d="M0 0h8L4 4z" fill="#c8c8c8"/><path d="M0 0h8" stroke="#777"/></svg>
<div class="a tb" style="left:153px;top:794px;width:217px;height:31px;"></div>
<div class="a grip" style="left:156px;top:799px;width:6px;height:20px;"></div>
<div class="a " style="left:164px;top:798px;width:143px;height:21px;background:#fff;border:1px solid #9a9a9a;border-radius:4px"></div>
<div class="a t " style="left:167px;top:802px;font-size:11.5px">Basic</div>
<div class="a red" style="left:291px;top:798px;width:16px;height:21px;"></div>
<svg class="a" style="left:294px;top:806px;" width="9" height="5" viewBox="0 0 9 5"><path d="M0 0h9L4.5 5z" fill="#fff"/></svg>
<svg class="a" style="left:310px;top:796px;" width="24" height="24" viewBox="0 0 24 24"><rect x="3" y="4" width="15" height="12" fill="#f4f4f4" stroke="#555"/><path d="M3 7h15M5 10h9M5 13h7" stroke="#555"/><rect x="12" y="12" width="9" height="9" fill="#6a8ad0" stroke="#3a5aa0"/><rect x="14" y="13" width="5" height="3" fill="#fff"/></svg>
<svg class="a" style="left:341px;top:796px;" width="24" height="24" viewBox="0 0 24 24"><rect x="3" y="3" width="15" height="12" fill="#f4f4f4" stroke="#555"/><path d="M3 6h15" stroke="#555"/><path d="M4 14q7-7 14 0q-7 6-14 0z" fill="#aac0e0" stroke="#4a6aa0"/><circle cx="11" cy="14" r="2" fill="#2a4a80"/><circle cx="18" cy="18" r="3.5" fill="#e06060"/><path d="M16 18h4" stroke="#fff" stroke-width="1.2"/></svg>
<div class="a tb" style="left:371px;top:794px;width:195px;height:31px;"></div>
<div class="a grip" style="left:374px;top:799px;width:6px;height:20px;"></div>
<div class="a " style="left:379px;top:796px;width:29px;height:26px;background:#d9d9d9;border-radius:4px"></div>
<svg class="a" style="left:381px;top:797px;" width="24" height="24" viewBox="0 0 24 24"><rect x="2" y="6" width="12" height="10" fill="#fff" stroke="#777"/><path d="M4 11l3 3 6-8" fill="none" stroke="#d00" stroke-width="2.2"/><path d="M13 10l0 11 2.6-2.6 2.2 4.2 2-1-2.2-4.2h3.7z" fill="#fff" stroke="#222" stroke-width="1"/></svg>
<svg class="a" style="left:412px;top:796px;" width="24" height="24" viewBox="0 0 24 24"><rect x="1" y="3" width="3" height="3" fill="#e06060"/><rect x="1" y="11" width="3" height="3" fill="#e06060"/><path d="M4 4.5h4v8H4M8 8.5h6M10 4v9" fill="none" stroke="#333" stroke-width="1.5"/><rect x="14" y="7" width="3" height="3" fill="#e06060"/><path d="M12 11l0 10 2.5-2.5 2 4 2-1-2-4h3.5z" fill="#fff" stroke="#222" stroke-width="1"/></svg>
<svg class="a" style="left:444px;top:796px;" width="24" height="24" viewBox="0 0 24 24"><path d="M4 4h3v12h5" fill="none" stroke="#333" stroke-width="1.5"/><rect x="2" y="2" width="4" height="4" fill="#f0e060" stroke="#908020" stroke-width=".6"/><path d="M12 11l0 10 2.5-2.5 2 4 2-1-2-4h3.5z" fill="#fff" stroke="#222" stroke-width="1"/></svg>
<svg class="a" style="left:476px;top:796px;" width="24" height="24" viewBox="0 0 24 24"><path d="M2 12h6" stroke="#333" stroke-width="1.4"/><rect x="1" y="10" width="4" height="4" fill="#f0e060" stroke="#908020" stroke-width=".6"/><path d="M8 7h7q4 4 0 8H8z" fill="#555" stroke="#111"/><path d="M12 11l0 10 2.5-2.5 2 4 2-1-2-4h3.5z" fill="#fff" stroke="#222" stroke-width="1"/></svg>
<svg class="a" style="left:506px;top:796px;" width="24" height="24" viewBox="0 0 24 24"><text x="1" y="17" font-family="Liberation Serif" font-weight="bold" font-size="18" fill="#111">T</text><path d="M12 11l0 10 2.5-2.5 2 4 2-1-2-4h3.5z" fill="#fff" stroke="#222" stroke-width="1"/></svg>
<div class="a " style="left:533px;top:800px;width:1px;height:17px;background:#888"></div>
<svg class="a" style="left:539px;top:796px;" width="24" height="24" viewBox="0 0 24 24"><path d="M3 3h9l3 3v13H3z" fill="#f4f4f4" stroke="#888"/><path d="M5 9h2M5 13h2M8 9h4M8 13h4" stroke="#555" stroke-width="1.4"/><path d="M12 11l0 10 2.5-2.5 2 4 2-1-2-4h3.5z" fill="#fff" stroke="#222" stroke-width="1"/></svg>
<div class="a tb" style="left:567px;top:794px;width:177px;height:31px;"></div>
<div class="a grip" style="left:570px;top:799px;width:6px;height:20px;"></div>
<div class="a " style="left:579px;top:798px;width:146px;height:21px;background:#fff;border:1px solid #9a9a9a;border-radius:4px"></div>
<svg class="a" style="left:583px;top:802px;" width="18" height="14" viewBox="0 0 18 14"><circle cx="5.5" cy="5.5" r="4" fill="none" stroke="#333" stroke-width="1.6"/><path d="M8.5 8.5l3.5 3.5" stroke="#333" stroke-width="2"/><path d="M13 5h5l-2.5 3z" fill="#333"/></svg>
<div class="a t " style="left:600px;top:802px;font-size:11.5px;color:#b5b5b5;font-weight:bold">Search</div>
<div class="a red" style="left:709px;top:798px;width:16px;height:21px;"></div>
<svg class="a" style="left:712px;top:806px;" width="9" height="5" viewBox="0 0 9 5"><path d="M0 0h9L4.5 5z" fill="#fff"/></svg>
<svg class="a" style="left:732px;top:806px;" width="9" height="5" viewBox="0 0 9 5"><path d="M0 0h9L4.5 5z" fill="#c00"/></svg>
<div class="a tb" style="left:745px;top:794px;width:534px;height:31px;"></div>
<div class="a grip" style="left:748px;top:799px;width:6px;height:20px;"></div>
<div class="a " style="left:0px;top:825px;width:183px;height:534px;background:#efefef"></div>
<div class="a " style="left:183px;top:825px;width:6px;height:534px;background:#d6d6da"></div>
<div class="a " style="left:189px;top:825px;width:1090px;height:2px;background:#fff"></div>
<div class="a hdr" style="left:0px;top:826px;width:183px;height:19px;"></div>
<div class="a t " style="left:12px;top:829px;font-weight:bold;font-size:12px;line-height:14px">Navigator</div>
<div class="a hb" style="left:168px;top:828px;width:12px;height:14px;"></div>
<svg class="a" style="left:170px;top:829px;" width="9" height="9" viewBox="0 0 9 9"><path d="M1 1l7 7M8 1L1 8" stroke="#000" stroke-width="1.3"/></svg>
<div class="a hb" style="left:155px;top:828px;width:12px;height:14px;"></div>
<svg class="a" style="left:157px;top:829px;" width="9" height="9" viewBox="0 0 9 9"><rect x="0.5" y="3.5" width="5" height="5" fill="none" stroke="#000"/><path d="M3 3.5V0.5h5v5H5.5" fill="none" stroke="#000"/><path d="M0.5 4.5h5M3 1.5h5" stroke="#000"/></svg>
<div class="a hb" style="left:142px;top:828px;width:12px;height:14px;"></div>
<div class="a t " style="left:144px;top:827px;font-weight:bold;font-size:12px;line-height:14px">?</div>
<div class="a t " style="left:90px;top:849px;font-size:12.5px;transform:translateX(-50%);line-height:14px">Schematic</div>
<div class="a t " style="left:91px;top:864px;font-size:10.5px;color:#333;transform:translateX(-50%);line-height:12px">1-bit_R_div</div>
<div class="a " style="left:0px;top:878px;width:183px;height:1px;background:#c4c4c4"></div>
<svg class="a" style="left:2px;top:888px;" width="9" height="6" viewBox="0 0 9 6"><path d="M0 0h9L4.5 6z" fill="#b00"/></svg>
<div class="a t " style="left:13px;top:883px;font-weight:bold;font-size:10.8px">OBJECTS</div>
<div class="a t " style="left:13px;top:900px;font-size:11.5px">All</div>
<svg class="a" style="left:173px;top:903px;" width="7" height="9" viewBox="0 0 7 9"><path d="M0 0l7 4.5L0 9z" fill="#9a9a9a"/></svg>
<div class="a t " style="left:13px;top:918px;font-size:11.5px">Instances</div>
<div class="a t " style="left:155px;top:917px;font-size:11.5px">3</div>
<svg class="a" style="left:173px;top:921px;" width="7" height="9" viewBox="0 0 7 9"><path d="M0 0l7 4.5L0 9z" fill="#9a9a9a"/></svg>
<div class="a t " style="left:13px;top:936px;font-size:11.5px">Nets</div>
<div class="a t " style="left:155px;top:935px;font-size:11.5px">4</div>
<svg class="a" style="left:173px;top:939px;" width="7" height="9" viewBox="0 0 7 9"><path d="M0 0l7 4.5L0 9z" fill="#9a9a9a"/></svg>
<div class="a t " style="left:13px;top:954px;font-size:11.5px">Pins</div>
<div class="a t " style="left:155px;top:953px;font-size:11.5px">3</div>
<svg class="a" style="left:173px;top:957px;" width="7" height="9" viewBox="0 0 7 9"><path d="M0 0l7 4.5L0 9z" fill="#9a9a9a"/></svg>
<div class="a t " style="left:13px;top:972px;font-size:11.5px">Nets and Pins</div>
<svg class="a" style="left:173px;top:975px;" width="7" height="9" viewBox="0 0 7 9"><path d="M0 0l7 4.5L0 9z" fill="#9a9a9a"/></svg>
<svg class="a" style="left:2px;top:1001px;" width="9" height="6" viewBox="0 0 9 6"><path d="M0 0h9L4.5 6z" fill="#b00"/></svg>
<div class="a t " style="left:13px;top:996px;font-weight:bold;font-size:10.8px">GROUPS</div>
<div class="a t " style="left:13px;top:1013px;font-size:11.5px">Cells</div>
<svg class="a" style="left:173px;top:1016px;" width="7" height="9" viewBox="0 0 7 9"><path d="M0 0l7 4.5L0 9z" fill="#9a9a9a"/></svg>
<div class="a t " style="left:13px;top:1031px;font-size:11.5px">Types</div>
<svg class="a" style="left:173px;top:1034px;" width="7" height="9" viewBox="0 0 7 9"><path d="M0 0l7 4.5L0 9z" fill="#9a9a9a"/></svg>
<div class="a t " style="left:5px;top:1142px;font-size:15px;font-weight:bold;color:#444;line-height:16px">+</div>
<div class="a " style="left:25px;top:1149px;width:9px;height:2px;background:#bbb"></div>
<svg class="a" style="left:167px;top:1143px;" width="11" height="14" viewBox="0 0 11 14"><rect x="0.75" y="0.75" width="9.5" height="12.5" rx="1" fill="none" stroke="#333" stroke-width="1.5"/><path d="M5.5 1v12" stroke="#333" stroke-width="1.2"/></svg>
<div class="a " style="left:0px;top:1160px;width:183px;height:6px;background:#d6d6d6"></div>
<div class="a hdr" style="left:0px;top:1166px;width:183px;height:19px;"></div>
<div class="a t " style="left:12px;top:1169px;font-weight:bold;font-size:12px;line-height:14px">Property Editor</div>
<div class="a hb" style="left:168px;top:1168px;width:12px;height:14px;"></div>
<svg class="a" style="left:170px;top:1169px;" width="9" height="9" viewBox="0 0 9 9"><path d="M1 1l7 7M8 1L1 8" stroke="#000" stroke-width="1.3"/></svg>
<div class="a hb" style="left:155px;top:1168px;width:12px;height:14px;"></div>
<svg class="a" style="left:157px;top:1169px;" width="9" height="9" viewBox="0 0 9 9"><rect x="0.5" y="3.5" width="5" height="5" fill="none" stroke="#000"/><path d="M3 3.5V0.5h5v5H5.5" fill="none" stroke="#000"/><path d="M0.5 4.5h5M3 1.5h5" stroke="#000"/></svg>
<div class="a hb" style="left:142px;top:1168px;width:12px;height:14px;"></div>
<div class="a t " style="left:144px;top:1167px;font-weight:bold;font-size:12px;line-height:14px">?</div>
<div class="a " style="left:3px;top:1189px;width:176px;height:165px;background:#fff;border-top:2px solid #222;border-left:2px solid #222"></div>
<div class="a " style="left:5px;top:1338px;width:173px;height:16px;background:#9a9a9a"></div>
<div class="a " style="left:5px;top:1338px;width:16px;height:15px;background:linear-gradient(#f4f4f4,#cfcfcf)"></div>
<svg class="a" style="left:9px;top:1341px;" width="8" height="9" viewBox="0 0 8 9"><path d="M7 0L1 4.5 7 9z" fill="#fff" stroke="#bbb" stroke-width=".6"/></svg>
<div class="a " style="left:21px;top:1339px;width:121px;height:14px;background:linear-gradient(#dadada,#c2c2c2);border-radius:7px;border:1px solid #aaa"></div>
<div class="a " style="left:77px;top:1343px;width:1px;height:6px;background:#777"></div>
<div class="a " style="left:79px;top:1343px;width:1px;height:6px;background:#777"></div>
<div class="a " style="left:81px;top:1343px;width:1px;height:6px;background:#777"></div>
<div class="a " style="left:83px;top:1343px;width:1px;height:6px;background:#777"></div>
<div class="a " style="left:163px;top:1338px;width:15px;height:15px;background:linear-gradient(#f4f4f4,#cfcfcf);border-bottom:1px solid #444"></div>
<svg class="a" style="left:166px;top:1341px;" width="8" height="9" viewBox="0 0 8 9"><path d="M1 0l6 4.5L1 9z" fill="#fff" stroke="#bbb" stroke-width=".6"/></svg>
<svg class="a" style="left:189px;top:827px" width="1073" height="532"><g transform="translate(-189,-827)"><rect x="189" y="827" width="1073" height="532" fill="#000"/><path d="M193 846h1v1h-1zM229 846h1v1h-1zM266 846h1v1h-1zM303 846h1v1h-1zM339 846h1v1h-1zM376 846h1v1h-1zM413 846h1v1h-1zM449 846h1v1h-1zM486 846h1v1h-1zM523 846h1v1h-1zM559 846h1v1h-1zM596 846h1v1h-1zM633 846h1v1h-1zM669 846h1v1h-1zM706 846h1v1h-1zM743 846h1v1h-1zM779 846h1v1h-1zM816 846h1v1h-1zM853 846h1v1h-1zM889 846h1v1h-1zM926 846h1v1h-1zM963 846h1v1h-1zM999 846h1v1h-1zM1036 846h1v1h-1zM1073 846h1v1h-1zM1109 846h1v1h-1zM1146 846h1v1h-1zM1183 846h1v1h-1zM1219 846h1v1h-1zM1256 846h1v1h-1zM193 882h1v1h-1zM229 882h1v1h-1zM266 882h1v1h-1zM303 882h1v1h-1zM339 882h1v1h-1zM376 882h1v1h-1zM413 882h1v1h-1zM449 882h1v1h-1zM486 882h1v1h-1zM523 882h1v1h-1zM559 882h1v1h-1zM596 882h1v1h-1zM633 882h1v1h-1zM669 882h1v1h-1zM706 882h1v1h-1zM743 882h1v1h-1zM779 882h1v1h-1zM816 882h1v1h-1zM853 882h1v1h-1zM889 882h1v1h-1zM926 882h1v1h-1zM963 882h1v1h-1zM999 882h1v1h-1zM1036 882h1v1h-1zM1073 882h1v1h-1zM1109 882h1v1h-1zM1146 882h1v1h-1zM1183 882h1v1h-1zM1219 882h1v1h-1zM1256 882h1v1h-1zM193 919h1v1h-1zM229 919h1v1h-1zM266 919h1v1h-1zM303 919h1v1h-1zM339 919h1v1h-1zM376 919h1v1h-1zM413 919h1v1h-1zM449 919h1v1h-1zM486 919h1v1h-1zM523 919h1v1h-1zM559 919h1v1h-1zM596 919h1v1h-1zM633 919h1v1h-1zM669 919h1v1h-1zM706 919h1v1h-1zM743 919h1v1h-1zM779 919h1v1h-1zM816 919h1v1h-1zM853 919h1v1h-1zM889 919h1v1h-1zM926 919h1v1h-1zM963 919h1v1h-1zM999 919h1v1h-1zM1036 919h1v1h-1zM1073 919h1v1h-1zM1109 919h1v1h-1zM1146 919h1v1h-1zM1183 919h1v1h-1zM1219 919h1v1h-1zM1256 919h1v1h-1zM193 956h1v1h-1zM229 956h1v1h-1zM266 956h1v1h-1zM303 956h1v1h-1zM339 956h1v1h-1zM376 956h1v1h-1zM413 956h1v1h-1zM449 956h1v1h-1zM486 956h1v1h-1zM523 956h1v1h-1zM559 956h1v1h-1zM596 956h1v1h-1zM633 956h1v1h-1zM669 956h1v1h-1zM706 956h1v1h-1zM743 956h1v1h-1zM779 956h1v1h-1zM816 956h1v1h-1zM853 956h1v1h-1zM889 956h1v1h-1zM926 956h1v1h-1zM963 956h1v1h-1zM999 956h1v1h-1zM1036 956h1v1h-1zM1073 956h1v1h-1zM1109 956h1v1h-1zM1146 956h1v1h-1zM1183 956h1v1h-1zM1219 956h1v1h-1zM1256 956h1v1h-1zM193 992h1v1h-1zM229 992h1v1h-1zM266 992h1v1h-1zM303 992h1v1h-1zM339 992h1v1h-1zM376 992h1v1h-1zM413 992h1v1h-1zM449 992h1v1h-1zM486 992h1v1h-1zM523 992h1v1h-1zM559 992h1v1h-1zM596 992h1v1h-1zM633 992h1v1h-1zM669 992h1v1h-1zM706 992h1v1h-1zM743 992h1v1h-1zM779 992h1v1h-1zM816 992h1v1h-1zM853 992h1v1h-1zM889 992h1v1h-1zM926 992h1v1h-1zM963 992h1v1h-1zM999 992h1v1h-1zM1036 992h1v1h-1zM1073 992h1v1h-1zM1109 992h1v1h-1zM1146 992h1v1h-1zM1183 992h1v1h-1zM1219 992h1v1h-1zM1256 992h1v1h-1zM193 1029h1v1h-1zM229 1029h1v1h-1zM266 1029h1v1h-1zM303 1029h1v1h-1zM339 1029h1v1h-1zM376 1029h1v1h-1zM413 1029h1v1h-1zM449 1029h1v1h-1zM486 1029h1v1h-1zM523 1029h1v1h-1zM559 1029h1v1h-1zM596 1029h1v1h-1zM633 1029h1v1h-1zM669 1029h1v1h-1zM706 1029h1v1h-1zM743 1029h1v1h-1zM779 1029h1v1h-1zM816 1029h1v1h-1zM853 1029h1v1h-1zM889 1029h1v1h-1zM926 1029h1v1h-1zM963 1029h1v1h-1zM999 1029h1v1h-1zM1036 1029h1v1h-1zM1073 1029h1v1h-1zM1109 1029h1v1h-1zM1146 1029h1v1h-1zM1183 1029h1v1h-1zM1219 1029h1v1h-1zM1256 1029h1v1h-1zM193 1066h1v1h-1zM229 1066h1v1h-1zM266 1066h1v1h-1zM303 1066h1v1h-1zM339 1066h1v1h-1zM376 1066h1v1h-1zM413 1066h1v1h-1zM449 1066h1v1h-1zM486 1066h1v1h-1zM523 1066h1v1h-1zM559 1066h1v1h-1zM596 1066h1v1h-1zM633 1066h1v1h-1zM669 1066h1v1h-1zM706 1066h1v1h-1zM743 1066h1v1h-1zM779 1066h1v1h-1zM816 1066h1v1h-1zM853 1066h1v1h-1zM889 1066h1v1h-1zM926 1066h1v1h-1zM963 1066h1v1h-1zM999 1066h1v1h-1zM1036 1066h1v1h-1zM1073 1066h1v1h-1zM1109 1066h1v1h-1zM1146 1066h1v1h-1zM1183 1066h1v1h-1zM1219 1066h1v1h-1zM1256 1066h1v1h-1zM193 1102h1v1h-1zM229 1102h1v1h-1zM266 1102h1v1h-1zM303 1102h1v1h-1zM339 1102h1v1h-1zM376 1102h1v1h-1zM413 1102h1v1h-1zM449 1102h1v1h-1zM486 1102h1v1h-1zM523 1102h1v1h-1zM559 1102h1v1h-1zM596 1102h1v1h-1zM633 1102h1v1h-1zM669 1102h1v1h-1zM706 1102h1v1h-1zM743 1102h1v1h-1zM779 1102h1v1h-1zM816 1102h1v1h-1zM853 1102h1v1h-1zM889 1102h1v1h-1zM926 1102h1v1h-1zM963 1102h1v1h-1zM999 1102h1v1h-1zM1036 1102h1v1h-1zM1073 1102h1v1h-1zM1109 1102h1v1h-1zM1146 1102h1v1h-1zM1183 1102h1v1h-1zM1219 1102h1v1h-1zM1256 1102h1v1h-1zM193 1139h1v1h-1zM229 1139h1v1h-1zM266 1139h1v1h-1zM303 1139h1v1h-1zM339 1139h1v1h-1zM376 1139h1v1h-1zM413 1139h1v1h-1zM449 1139h1v1h-1zM486 1139h1v1h-1zM523 1139h1v1h-1zM559 1139h1v1h-1zM596 1139h1v1h-1zM633 1139h1v1h-1zM669 1139h1v1h-1zM706 1139h1v1h-1zM743 1139h1v1h-1zM779 1139h1v1h-1zM816 1139h1v1h-1zM853 1139h1v1h-1zM889 1139h1v1h-1zM926 1139h1v1h-1zM963 1139h1v1h-1zM999 1139h1v1h-1zM1036 1139h1v1h-1zM1073 1139h1v1h-1zM1109 1139h1v1h-1zM1146 1139h1v1h-1zM1183 1139h1v1h-1zM1219 1139h1v1h-1zM1256 1139h1v1h-1zM193 1176h1v1h-1zM229 1176h1v1h-1zM266 1176h1v1h-1zM303 1176h1v1h-1zM339 1176h1v1h-1zM376 1176h1v1h-1zM413 1176h1v1h-1zM449 1176h1v1h-1zM486 1176h1v1h-1zM523 1176h1v1h-1zM559 1176h1v1h-1zM596 1176h1v1h-1zM633 1176h1v1h-1zM669 1176h1v1h-1zM706 1176h1v1h-1zM743 1176h1v1h-1zM779 1176h1v1h-1zM816 1176h1v1h-1zM853 1176h1v1h-1zM889 1176h1v1h-1zM926 1176h1v1h-1zM963 1176h1v1h-1zM999 1176h1v1h-1zM1036 1176h1v1h-1zM1073 1176h1v1h-1zM1109 1176h1v1h-1zM1146 1176h1v1h-1zM1183 1176h1v1h-1zM1219 1176h1v1h-1zM1256 1176h1v1h-1zM193 1212h1v1h-1zM229 1212h1v1h-1zM266 1212h1v1h-1zM303 1212h1v1h-1zM339 1212h1v1h-1zM376 1212h1v1h-1zM413 1212h1v1h-1zM449 1212h1v1h-1zM486 1212h1v1h-1zM523 1212h1v1h-1zM559 1212h1v1h-1zM596 1212h1v1h-1zM633 1212h1v1h-1zM669 1212h1v1h-1zM706 1212h1v1h-1zM743 1212h1v1h-1zM779 1212h1v1h-1zM816 1212h1v1h-1zM853 1212h1v1h-1zM889 1212h1v1h-1zM926 1212h1v1h-1zM963 1212h1v1h-1zM999 1212h1v1h-1zM1036 1212h1v1h-1zM1073 1212h1v1h-1zM1109 1212h1v1h-1zM1146 1212h1v1h-1zM1183 1212h1v1h-1zM1219 1212h1v1h-1zM1256 1212h1v1h-1zM193 1249h1v1h-1zM229 1249h1v1h-1zM266 1249h1v1h-1zM303 1249h1v1h-1zM339 1249h1v1h-1zM376 1249h1v1h-1zM413 1249h1v1h-1zM449 1249h1v1h-1zM486 1249h1v1h-1zM523 1249h1v1h-1zM559 1249h1v1h-1zM596 1249h1v1h-1zM633 1249h1v1h-1zM669 1249h1v1h-1zM706 1249h1v1h-1zM743 1249h1v1h-1zM779 1249h1v1h-1zM816 1249h1v1h-1zM853 1249h1v1h-1zM889 1249h1v1h-1zM926 1249h1v1h-1zM963 1249h1v1h-1zM999 1249h1v1h-1zM1036 1249h1v1h-1zM1073 1249h1v1h-1zM1109 1249h1v1h-1zM1146 1249h1v1h-1zM1183 1249h1v1h-1zM1219 1249h1v1h-1zM1256 1249h1v1h-1zM193 1286h1v1h-1zM229 1286h1v1h-1zM266 1286h1v1h-1zM303 1286h1v1h-1zM339 1286h1v1h-1zM376 1286h1v1h-1zM413 1286h1v1h-1zM449 1286h1v1h-1zM486 1286h1v1h-1zM523 1286h1v1h-1zM559 1286h1v1h-1zM596 1286h1v1h-1zM633 1286h1v1h-1zM669 1286h1v1h-1zM706 1286h1v1h-1zM743 1286h1v1h-1zM779 1286h1v1h-1zM816 1286h1v1h-1zM853 1286h1v1h-1zM889 1286h1v1h-1zM926 1286h1v1h-1zM963 1286h1v1h-1zM999 1286h1v1h-1zM1036 1286h1v1h-1zM1073 1286h1v1h-1zM1109 1286h1v1h-1zM1146 1286h1v1h-1zM1183 1286h1v1h-1zM1219 1286h1v1h-1zM1256 1286h1v1h-1zM193 1322h1v1h-1zM229 1322h1v1h-1zM266 1322h1v1h-1zM303 1322h1v1h-1zM339 1322h1v1h-1zM376 1322h1v1h-1zM413 1322h1v1h-1zM449 1322h1v1h-1zM486 1322h1v1h-1zM523 1322h1v1h-1zM559 1322h1v1h-1zM596 1322h1v1h-1zM633 1322h1v1h-1zM669 1322h1v1h-1zM706 1322h1v1h-1zM743 1322h1v1h-1zM779 1322h1v1h-1zM816 1322h1v1h-1zM853 1322h1v1h-1zM889 1322h1v1h-1zM926 1322h1v1h-1zM963 1322h1v1h-1zM999 1322h1v1h-1zM1036 1322h1v1h-1zM1073 1322h1v1h-1zM1109 1322h1v1h-1zM1146 1322h1v1h-1zM1183 1322h1v1h-1zM1219 1322h1v1h-1zM1256 1322h1v1h-1z" fill="#9a9a9a"/><path d="M228 992h3v1h-3zM229 991h1v3h-1zM228 1286h3v1h-3zM229 1285h1v3h-1zM522 992h3v1h-3zM523 991h1v3h-1zM522 1286h3v1h-3zM523 1285h1v3h-1zM815 992h3v1h-3zM816 991h1v3h-1zM815 1286h3v1h-3zM816 1285h1v3h-1zM1108 992h3v1h-3zM1109 991h1v3h-1zM1108 1286h3v1h-3zM1109 1285h1v3h-1z" fill="#fff"/><path d="M922 984h9l4 4v9l-4 4h-9l-4-4v-9z" fill="#3cbaf8"/><path d="M486 991h66v3h-66zM678 991h57v3h-57zM861 991h137v3h-137zM925 991h3v67h-3zM925 1184h3v65h-3z" fill="#0a14ff"/><path d="M449 976H470.5L486 992.5L470.5 1009H449Z" fill="#ff0000"/><path d="M998 976H1021.5L1036 992.5L1021.5 1009H998Z" fill="#ff0000"/><path d="M926.5 1249L943 1266V1286H910V1266Z" fill="#ff0000"/><rect x="552" y="985" width="16" height="16" fill="#ff0000"/><rect x="662" y="985" width="16" height="16" fill="#ff0000"/><rect x="735" y="985" width="16" height="16" fill="#ff0000"/><rect x="845" y="985" width="16" height="16" fill="#ff0000"/><rect x="919" y="1058" width="16" height="16" fill="#ff0000"/><rect x="919" y="1168" width="16" height="16" fill="#ff0000"/><polyline points="568,992.5 581,992.5 587.4,1011 598.5,974 609.3,1011 620.3,974 631,1011 642.2,974 647.3,992.5 662,992.5" fill="none" stroke="#4cb474" stroke-width="1" shape-rendering="crispEdges"/><polyline points="751,992.5 766,992.5 770,974 781,1011 792.8,974 803.8,1011 814.7,974 826.3,1011 832.5,992.5 845,992.5" fill="none" stroke="#4cb474" stroke-width="1" shape-rendering="crispEdges"/><polyline points="926.6,1074 926.6,1088 944.2,1093.5 908.5,1103.8 944.2,1115 908.5,1126.3 944.2,1137.3 908.5,1148.4 926.6,1154 926.6,1168" fill="none" stroke="#4cb474" stroke-width="1" shape-rendering="crispEdges"/><g transform="translate(354.6,1003) scale(1.857)" fill="none" stroke="#dd2a2a" stroke-width="1" shape-rendering="crispEdges"><path vector-effect="non-scaling-stroke" transform="translate(0.00,0)" d="M1.5 0V-7M1.5 -9.8V-9.3"/><path vector-effect="non-scaling-stroke" transform="translate(4.27,0)" d="M1 -7V0M1 -5.6L2.4 -7H5.3L6.7 -5.6V0"/><path vector-effect="non-scaling-stroke" transform="translate(12.27,0)" d="M0.5 1H8.5"/><path vector-effect="non-scaling-stroke" transform="translate(23.27,0)" d="M1 -10V0M1 -5.6L2.5 -7H5.1L6.6 -5.5V-1.5L5.1 0H2.5L1 -1.4"/><path vector-effect="non-scaling-stroke" transform="translate(31.37,0)" d="M1.5 0V-7M1.5 -9.8V-9.3"/><path vector-effect="non-scaling-stroke" transform="translate(35.64,0)" d="M1.5 -10V-1.2L2.7 0H3.8M-0.4 -7H3.4"/></g><g transform="translate(1047,1002) scale(1.857)" fill="none" stroke="#dd2a2a" stroke-width="1" shape-rendering="crispEdges"><path vector-effect="non-scaling-stroke" transform="translate(0.00,0)" d="M2.4 -7H5.9L7.3 -5.6V-1.4L5.9 0H2.4L1 -1.4V-5.6Z"/><path vector-effect="non-scaling-stroke" transform="translate(9.40,0)" d="M1 -7V-1.4L2.4 0H5.3L6.6 -1.4M6.6 -7V0"/><path vector-effect="non-scaling-stroke" transform="translate(18.60,0)" d="M1.5 -10V-1.2L2.7 0H3.8M-0.4 -7H3.4"/></g><g transform="translate(937,1329.4) rotate(-90) scale(1.857)" fill="none" stroke="#dd2a2a" stroke-width="1" shape-rendering="crispEdges"><path vector-effect="non-scaling-stroke" transform="translate(0.00,0)" d="M1.5 0V-7M1.5 -9.8V-9.3"/><path vector-effect="non-scaling-stroke" transform="translate(4.27,0)" d="M1 -7V0M1 -5.6L2.4 -7H5.3L6.7 -5.6V0"/></g><path d="M917.5 1324L920 1326.5L917.5 1329L915 1326.5Z" fill="none" stroke="#dd2a2a" stroke-width="1"/><g transform="translate(575.3,1075) rotate(-90) scale(1.55)" fill="none" stroke="#f2e6cc" stroke-width="1" shape-rendering="crispEdges"><path vector-effect="non-scaling-stroke" transform="translate(0.00,0)" d="M1.5 0V-7M1.5 -9.8V-9.3"/><path vector-effect="non-scaling-stroke" transform="translate(4.27,0)" d="M1 -7V0M1 -5.6L2.4 -7H5.3L6.7 -5.6V0"/><path vector-effect="non-scaling-stroke" transform="translate(12.27,0)" d="M0.5 1H8.5"/><path vector-effect="non-scaling-stroke" transform="translate(23.27,0)" d="M1 -10V0M1 -5.6L2.5 -7H5.1L6.6 -5.5V-1.5L5.1 0H2.5L1 -1.4"/><path vector-effect="non-scaling-stroke" transform="translate(31.37,0)" d="M1.5 0V-7M1.5 -9.8V-9.3"/><path vector-effect="non-scaling-stroke" transform="translate(35.64,0)" d="M1.5 -10V-1.2L2.7 0H3.8M-0.4 -7H3.4"/></g><g transform="translate(666.6,1059.1) rotate(-90) scale(1.55)" fill="none" stroke="#f2e6cc" stroke-width="1" shape-rendering="crispEdges"><path vector-effect="non-scaling-stroke" transform="translate(0.00,0)" d="M1 -7V0M1 -5.6L2.4 -7H5.3L6.7 -5.6V0"/><path vector-effect="non-scaling-stroke" transform="translate(8.00,0)" d="M1 -3.5H7V-5.6L5.6 -7H2.4L1 -5.6V-1.4L2.4 0H5.6L7 -1.2"/><path vector-effect="non-scaling-stroke" transform="translate(16.60,0)" d="M1.5 -10V-1.2L2.7 0H3.8M-0.4 -7H3.4"/><path vector-effect="non-scaling-stroke" transform="translate(21.60,0)" d="M1 -10H8L3 0"/></g><g transform="translate(761.9,1059.1) rotate(-90) scale(1.55)" fill="none" stroke="#f2e6cc" stroke-width="1" shape-rendering="crispEdges"><path vector-effect="non-scaling-stroke" transform="translate(0.00,0)" d="M1 -7V0M1 -5.6L2.4 -7H5.3L6.7 -5.6V0"/><path vector-effect="non-scaling-stroke" transform="translate(8.00,0)" d="M1 -3.5H7V-5.6L5.6 -7H2.4L1 -5.6V-1.4L2.4 0H5.6L7 -1.2"/><path vector-effect="non-scaling-stroke" transform="translate(16.60,0)" d="M1.5 -10V-1.2L2.7 0H3.8M-0.4 -7H3.4"/><path vector-effect="non-scaling-stroke" transform="translate(21.60,0)" d="M1 -10H8L3 0"/></g><g transform="translate(854.4,1046.5) rotate(-90) scale(1.55)" fill="none" stroke="#f2e6cc" stroke-width="1" shape-rendering="crispEdges"><path vector-effect="non-scaling-stroke" transform="translate(0.00,0)" d="M2.4 -7H5.9L7.3 -5.6V-1.4L5.9 0H2.4L1 -1.4V-5.6Z"/><path vector-effect="non-scaling-stroke" transform="translate(9.40,0)" d="M1 -7V-1.4L2.4 0H5.3L6.6 -1.4M6.6 -7V0"/><path vector-effect="non-scaling-stroke" transform="translate(18.60,0)" d="M1.5 -10V-1.2L2.7 0H3.8M-0.4 -7H3.4"/></g><g transform="translate(639.9,964.3) rotate(-90) scale(1.5)" fill="none" stroke="#e8a050" stroke-width="1" shape-rendering="crispEdges"><path vector-effect="non-scaling-stroke" transform="translate(0.00,0)" d="M1 -6.5V0M1 -5.5L2 -6.5H4.9"/><path vector-effect="non-scaling-stroke" transform="translate(6.50,0)" d="M0.5 -5.8H9.5M0.5 -3H9.5"/><path vector-effect="non-scaling-stroke" transform="translate(20.60,0)" d="M0 -7.7L3 -10V0"/><path vector-effect="non-scaling-stroke" transform="translate(25.90,0)" d="M2.5 -10H5.8L7.3 -8.5V-1.5L5.8 0H2.5L1 -1.5V-8.5ZM1 -0.5L8.3 -9.8"/><path vector-effect="non-scaling-stroke" transform="translate(35.70,0)" d="M1 -10V0M1 -3.5L7.5 -10M3.5 -5.5L7.5 0"/></g><g transform="translate(667,964) rotate(-90) scale(1.55)" fill="none" stroke="#dd2a2a" stroke-width="1" shape-rendering="crispEdges"><path vector-effect="non-scaling-stroke" transform="translate(0.00,0)" d="M1 0V-10H5.7L7.7 -8V-7L5.7 -5H1M5 -5L7.7 0"/><path vector-effect="non-scaling-stroke" transform="translate(10.00,0)" d="M1 -8L3 -10H5.5L7 -8.5V-6.5L1 0H8"/></g><g transform="translate(762.2,964) rotate(-90) scale(1.55)" fill="none" stroke="#dd2a2a" stroke-width="1" shape-rendering="crispEdges"><path vector-effect="non-scaling-stroke" transform="translate(0.00,0)" d="M1 0V-10H5.7L7.7 -8V-7L5.7 -5H1M5 -5L7.7 0"/><path vector-effect="non-scaling-stroke" transform="translate(10.00,0)" d="M2.5 -10H5.8L7.3 -8.5V-1.5L5.8 0H2.5L1 -1.5V-8.5ZM1 -0.5L8.3 -9.8"/></g><g transform="translate(791.3,964.3) rotate(-90) scale(1.5)" fill="none" stroke="#e8a050" stroke-width="1" shape-rendering="crispEdges"><path vector-effect="non-scaling-stroke" transform="translate(0.00,0)" d="M1 -6.5V0M1 -5.5L2 -6.5H4.9"/><path vector-effect="non-scaling-stroke" transform="translate(6.50,0)" d="M0.5 -5.8H9.5M0.5 -3H9.5"/><path vector-effect="non-scaling-stroke" transform="translate(20.60,0)" d="M0 -7.7L3 -10V0"/><path vector-effect="non-scaling-stroke" transform="translate(25.90,0)" d="M2.5 -10H5.8L7.3 -8.5V-1.5L5.8 0H2.5L1 -1.5V-8.5ZM1 -0.5L8.3 -9.8"/><path vector-effect="non-scaling-stroke" transform="translate(35.70,0)" d="M1 -10V0M1 -3.5L7.5 -10M3.5 -5.5L7.5 0"/></g><g transform="translate(830.2,1145) scale(1.5)" fill="none" stroke="#e8a050" stroke-width="1" shape-rendering="crispEdges"><path vector-effect="non-scaling-stroke" transform="translate(0.00,0)" d="M1 -6.5V0M1 -5.5L2 -6.5H4.9"/><path vector-effect="non-scaling-stroke" transform="translate(6.50,0)" d="M0.5 -5.8H9.5M0.5 -3H9.5"/><path vector-effect="non-scaling-stroke" transform="translate(20.60,0)" d="M0 -7.7L3 -10V0"/><path vector-effect="non-scaling-stroke" transform="translate(25.90,0)" d="M2.5 -10H5.8L7.3 -8.5V-1.5L5.8 0H2.5L1 -1.5V-8.5ZM1 -0.5L8.3 -9.8"/><path vector-effect="non-scaling-stroke" transform="translate(35.70,0)" d="M1 -10V0M1 -3.5L7.5 -10M3.5 -5.5L7.5 0"/></g><g transform="translate(872.5,1173) scale(1.55)" fill="none" stroke="#dd2a2a" stroke-width="1" shape-rendering="crispEdges"><path vector-effect="non-scaling-stroke" transform="translate(0.00,0)" d="M1 0V-10H5.7L7.7 -8V-7L5.7 -5H1M5 -5L7.7 0"/><path vector-effect="non-scaling-stroke" transform="translate(10.00,0)" d="M0 -7.7L3 -10V0"/></g><g transform="translate(944.3,1080.5) scale(1.55)" fill="none" stroke="#f2e6cc" stroke-width="1" shape-rendering="crispEdges"><path vector-effect="non-scaling-stroke" transform="translate(0.00,0)" d="M2.4 -7H5.9L7.3 -5.6V-1.4L5.9 0H2.4L1 -1.4V-5.6Z"/><path vector-effect="non-scaling-stroke" transform="translate(9.40,0)" d="M1 -7V-1.4L2.4 0H5.3L6.6 -1.4M6.6 -7V0"/><path vector-effect="non-scaling-stroke" transform="translate(18.60,0)" d="M1.5 -10V-1.2L2.7 0H3.8M-0.4 -7H3.4"/></g><g transform="translate(945,1174.5) scale(1.55)" fill="none" stroke="#f2e6cc" stroke-width="1" shape-rendering="crispEdges"><path vector-effect="non-scaling-stroke" transform="translate(0.00,0)" d="M1.5 0V-7M1.5 -9.8V-9.3"/><path vector-effect="non-scaling-stroke" transform="translate(4.27,0)" d="M1 -7V0M1 -5.6L2.4 -7H5.3L6.7 -5.6V0"/></g></g></svg>
<div class="a " style="left:1262px;top:825px;width:17px;height:534px;background:#efefef"></div>
<div class="a " style="left:1262px;top:827px;width:16px;height:16px;background:linear-gradient(#f8f8f8,#d4d4d4);border-bottom:1px solid #333"></div>
<svg class="a" style="left:1265px;top:831px;" width="10" height="8" viewBox="0 0 10 8"><path d="M0 7l5-6 5 6z" fill="#fff" stroke="#bbb" stroke-width=".6"/></svg>
<div class="a " style="left:1262px;top:843px;width:16px;height:501px;background:#9a9a9a"></div>
<div class="a " style="left:1263px;top:857px;width:14px;height:486px;background:linear-gradient(90deg,#c4c4c4,#dedede 50%,#c0c0c0);border-radius:7px;border:1px solid #aaa"></div>
<div class="a " style="left:1262px;top:1344px;width:16px;height:15px;background:linear-gradient(#f8f8f8,#d4d4d4)"></div>
<svg class="a" style="left:1265px;top:1348px;" width="10" height="8" viewBox="0 0 10 8"><path d="M0 1l5 6 5-6z" fill="#fff" stroke="#bbb" stroke-width=".6"/></svg>
<div class="a " style="left:0px;top:1359px;width:1279px;height:18px;background:linear-gradient(#f4f4f4,#d6d6d6);border-bottom:1px solid #9a9a9a;border-radius:0 0 4px 4px"></div>
<div class="a grip" style="left:3px;top:1362px;width:6px;height:12px;"></div>
<div class="a t " style="left:10px;top:1360px;font-size:11.2px">mouse L: showClickInfo()</div>
<div class="a t " style="left:580px;top:1360px;font-size:11.2px">M: schHiMousePopUp()</div>
<div class="a t " style="left:1270px;top:1360px;font-size:11.2px;transform:translateX(-100%)">R: schHiMousePopUp()</div>
<div class="a " style="left:0px;top:1377px;width:1279px;height:20px;background:#efefef"></div>
<div class="a t " style="left:3px;top:1381px;font-size:11.5px">6(9)</div>
<div class="a " style="left:28px;top:1379px;width:1px;height:18px;background:#555"></div>
<div class="a t " style="left:38px;top:1381px;font-size:11.5px">&gt;</div>
<div class="a " style="left:1186px;top:1380px;width:1px;height:17px;background:#555"></div>
<div class="a t " style="left:1194px;top:1381px;font-size:11.5px">Cmd:</div>
<div class="a t " style="left:1228px;top:1381px;font-size:11.5px">Sel: 0</div>
<div class="a " style="left:1266px;top:1381px;width:10px;height:14px;background:#9a9a9a;border:1px solid #666"></div></body></html>
